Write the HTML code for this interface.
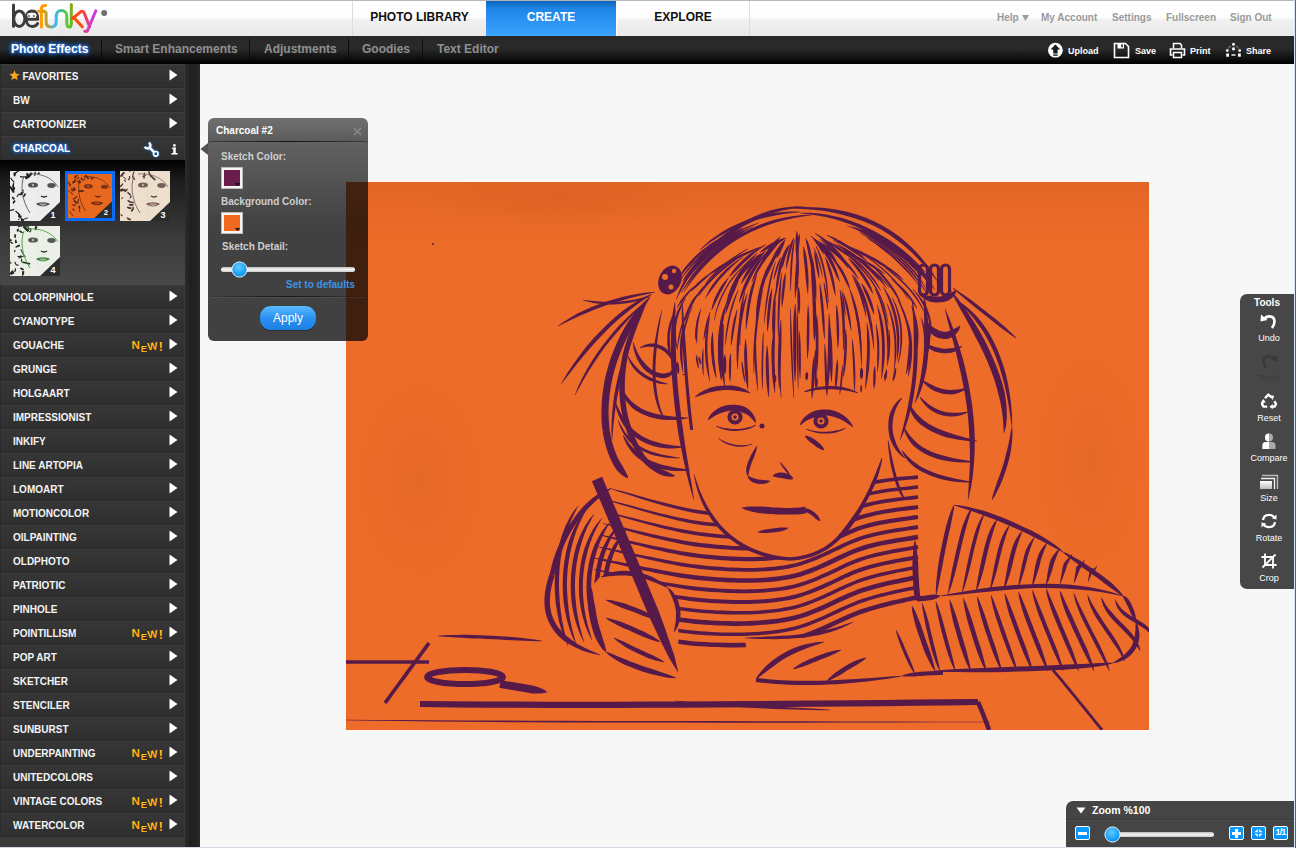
<!DOCTYPE html>
<html><head><meta charset="utf-8">
<style>
*{margin:0;padding:0;box-sizing:border-box}
html,body{width:1296px;height:848px;overflow:hidden;background:#f7f7f7;font-family:"Liberation Sans",sans-serif}
.abs{position:absolute}
#top{position:absolute;left:0;top:0;width:1294px;height:36px;background:linear-gradient(#ffffff 0px,#fdfdfd 18px,#f1f1f1 19px,#e9e9e9 35px)}
#topline{position:absolute;left:0;top:0;width:1294px;height:1px;background:#b3b6ba}
.tab{position:absolute;top:1px;height:35px;font:bold 12px "Liberation Sans",sans-serif;color:#111;text-align:center;line-height:32px}
.tdiv{position:absolute;top:1px;width:1px;height:35px;background:#dcdcdc}
.tlink{position:absolute;top:12px;font:bold 10px "Liberation Sans",sans-serif;color:#9a9a9a}
#nav{position:absolute;left:0;top:36px;width:1294px;height:28px;background:linear-gradient(#282828,#2a2a2a 45%,#000)}
.nitem{position:absolute;top:7px;font:bold 12px "Liberation Sans",sans-serif;color:#8f8f8f}
.ndiv{position:absolute;top:3px;width:1px;height:22px;background:#3a3a3a;border-right:1px solid #0c0c0c}
.nact{position:absolute;top:14px;font:bold 9px "Liberation Sans",sans-serif;color:#fff}
#left{position:absolute;left:0;top:64px;width:185px;height:784px;background:#3a3a3a}
#strip{position:absolute;left:185px;top:64px;width:15px;height:784px;background:linear-gradient(90deg,#2b2b2b,#1f1f1f 40%,#222 70%,#2a2a2a)}
.row{position:absolute;left:0;width:184px;height:24px;background:linear-gradient(#363636,#2f2f2f);border-top:1px solid #3d3d3d;border-bottom:1px solid #2a2a2a;border-left:1px solid #2a2a2a}
.lbl{position:absolute;left:12px;top:6px;font:bold 10px "Liberation Sans",sans-serif;color:#f4f4f4;white-space:nowrap}
.lbl.sel{color:#fff;text-shadow:0 0 2px #2566bb,0 0 3px #2566bb,0 0 3px #2566bb,0 0 4px #2566bb,0 0 5px #1a58a8}
.arr{position:absolute;left:168px;top:4px}
.new{position:absolute;left:131px;top:4px;width:34px;height:14px;font:italic bold 11px "Liberation Sans",sans-serif;color:#ffb300;text-shadow:0 0 1px #7a4a00}
.new span{position:relative}
#thumbs{position:absolute;left:0;top:160px;width:185px;height:125px;background:linear-gradient(#000 0px,#1c1c1c 20px,#3c3c3c 80px,#484848 125px)}
.th{position:absolute;width:50px;height:50px;overflow:hidden}
#popup{position:absolute;left:208px;top:118px;width:160px;height:223px;border-radius:6px;background:linear-gradient(rgba(20,20,20,0.72),rgba(8,8,8,0.76) 45%,rgba(8,8,8,0.76));}
.plbl{position:absolute;left:13px;font:bold 10px "Liberation Sans",sans-serif;color:#cfcfcf;white-space:nowrap}
#tools{position:absolute;left:1240px;top:294px;width:54px;height:295px;background:#474747;border-radius:7px 0 0 7px}
.tl{position:absolute;left:0;width:54px;text-align:center;margin-top:1px;font:9px "Liberation Sans",sans-serif;color:#fff}
#zoom{position:absolute;left:1066px;top:801px;width:228px;height:47px;background:#454545;border-radius:7px 0 0 0}
.zbtn{position:absolute;top:25px;width:15px;height:14px;border:1px solid #fff;border-radius:2px;background:linear-gradient(#0e9cff,#0892fa)}
#rb1{position:absolute;left:1294px;top:0;width:1px;height:848px;background:#d6e4f4}
#rb2{position:absolute;left:1295px;top:0;width:1px;height:848px;background:#4c6592}
#bb{position:absolute;left:0;top:847px;width:1294px;height:1px;background:#d3dbe6}
</style></head><body>
<div id="top"></div><div id="topline"></div>
<svg class="abs" style="left:0;top:0" width="120" height="36" viewBox="0 0 120 36">
<defs>
<linearGradient id="gu" gradientUnits="userSpaceOnUse" x1="44" y1="0" x2="58" y2="0"><stop offset="0" stop-color="#d4a010"/><stop offset="0.4" stop-color="#a0a050"/><stop offset="0.75" stop-color="#40b8f0"/><stop offset="1" stop-color="#30bce8"/></linearGradient>
<linearGradient id="gn" gradientUnits="userSpaceOnUse" x1="56" y1="0" x2="72" y2="0"><stop offset="0" stop-color="#30bce8"/><stop offset="0.45" stop-color="#48c860"/><stop offset="0.75" stop-color="#58cc30"/><stop offset="1" stop-color="#78b020"/></linearGradient>
<linearGradient id="gk" gradientUnits="userSpaceOnUse" x1="0" y1="4" x2="0" y2="27"><stop offset="0" stop-color="#88a818"/><stop offset="1" stop-color="#60c030"/></linearGradient>
<linearGradient id="gy" gradientUnits="userSpaceOnUse" x1="80" y1="0" x2="92" y2="0"><stop offset="0" stop-color="#ff4a14"/><stop offset="0.5" stop-color="#f03c6c"/><stop offset="1" stop-color="#d83cc0"/></linearGradient>
<linearGradient id="gy2" gradientUnits="userSpaceOnUse" x1="84" y1="0" x2="96" y2="0"><stop offset="0" stop-color="#e03c90"/><stop offset="1" stop-color="#c83ae8"/></linearGradient>
</defs>
<g fill="none" stroke-linecap="round" stroke-linejoin="round" stroke-width="3">
<path d="M13.5 5 V26.3" stroke="#3c3c3c"/>
<ellipse cx="19.3" cy="18.7" rx="5.6" ry="7.7" stroke="#3c3c3c"/>
<path d="M26.5 19.3 H37.8 C37.8 13.5 35.5 11 32 11 C28 11 26.2 14.5 26.2 18.7 C26.2 23.5 28.5 26.5 32.3 26.5 C34.5 26.5 36.5 25.5 37.6 23.5" stroke="#3c3c3c"/>
<path d="M41.4 27 V9 C41.4 6.3 42.8 5.4 45.6 5.6" stroke="#ff9c00"/>
<path d="M38.3 11.3 H43.5" stroke="#ff9c00"/>
<path d="M43 11.3 C45.5 11.3 46.1 12 46.1 14 V21.5 C46.1 25 48 27 51 27 C54.3 27 56.2 25 56.2 21.5 V16" stroke="url(#gu)"/>
<path d="M56.2 16 C56.2 12.5 58.5 10.6 61.4 10.6 C64.5 10.6 66.8 12.6 66.8 16 V23 C66.8 25.8 68 27 69.2 27 C70.5 27 71.3 25.8 71.3 23" stroke="url(#gn)"/>
<path d="M71.3 23 V4.6" stroke="url(#gk)"/>
<path d="M72.5 18.5 L80 12.3 C81.5 11 83 11 84 12.5 L89.6 26.8" stroke="url(#gy)"/>
<path d="M74 17.8 L82.3 26.8" stroke="#ff4a12"/>
<path d="M95.8 10.8 L87.3 31.3 H84.8" stroke="url(#gy2)"/>
</g>
<circle cx="29.5" cy="15.2" r="2.3" fill="#fff"/><circle cx="34.2" cy="15.2" r="2.3" fill="#fff"/>
<circle cx="29.1" cy="15.9" r="1" fill="#555"/><circle cx="33.8" cy="15.9" r="1" fill="#555"/>
<circle cx="104.2" cy="13" r="3" fill="#707070"/>
</svg>
<div class="tdiv" style="left:352px"></div>
<div class="tab" style="left:353px;width:133px">PHOTO LIBRARY</div>
<div class="tab" style="left:486px;width:130px;color:#fff;background:linear-gradient(#0a66bb 0px,#1f85e6 8px,#2a90f2 18px,#3aa2ff 34px,#48b4ff 35px)">CREATE</div>
<div class="tdiv" style="left:616px;background:#fff"></div>
<div class="tab" style="left:617px;width:132px">EXPLORE</div>
<div class="tdiv" style="left:749px"></div>
<div class="tlink" style="left:997px">Help</div>
<svg class="abs" style="left:1022px;top:14.5px" width="7" height="6" viewBox="0 0 7 6"><path d="M0 0 H7 L3.5 6Z" fill="#9a9a9a"/></svg>
<div class="tlink" style="left:1041px">My Account</div>
<div class="tlink" style="left:1112px">Settings</div>
<div class="tlink" style="left:1166px">Fullscreen</div>
<div class="tlink" style="left:1230px">Sign Out</div>

<div id="nav"></div>
<div class="nitem" style="left:11px;top:42px;color:#fff;text-shadow:0 0 2px #2566bb,0 0 3px #2566bb,0 0 3px #2566bb,0 0 4px #2566bb,0 0 5px #1a58a8,0 0 6px #1a58a8">Photo Effects</div>
<div class="ndiv" style="left:101px;top:39px"></div>
<div class="nitem" style="left:115px;top:42px">Smart Enhancements</div>
<div class="ndiv" style="left:249px;top:39px"></div>
<div class="nitem" style="left:264px;top:42px">Adjustments</div>
<div class="ndiv" style="left:348px;top:39px"></div>
<div class="nitem" style="left:362px;top:42px">Goodies</div>
<div class="ndiv" style="left:422px;top:39px"></div>
<div class="nitem" style="left:437px;top:42px">Text Editor</div>
<svg class="abs" style="left:1047px;top:42px" width="17" height="17" viewBox="0 0 17 17"><circle cx="8.4" cy="8.2" r="7.4" fill="#fff"/><path d="M8.4 2.6 L13.3 7.6 H10.6 V11.6 H6.2 V7.6 H3.5 Z" fill="#1c1c1c"/><rect x="6.2" y="12.4" width="4.4" height="1.4" fill="#1c1c1c"/></svg>
<div class="nact" style="left:1068px;top:45.5px">Upload</div>
<svg class="abs" style="left:1113px;top:42px" width="17" height="17" viewBox="0 0 17 17"><path d="M1.5 1.5 H12.5 L15.5 4.5 V15.5 H1.5 Z" fill="none" stroke="#fff" stroke-width="1.6"/><rect x="4.5" y="1.5" width="6.5" height="5" fill="#fff"/><rect x="8.3" y="2.3" width="1.5" height="3" fill="#1c1c1c"/></svg>
<div class="nact" style="left:1135px;top:45.5px">Save</div>
<svg class="abs" style="left:1169px;top:42px" width="17" height="17" viewBox="0 0 17 17"><path d="M4.5 6 V1.5 H11 L12.5 3 V6" fill="none" stroke="#fff" stroke-width="1.5"/><path d="M3.5 13 H1.5 V7 H15.5 V13 H13.5" fill="none" stroke="#fff" stroke-width="1.6"/><rect x="4.5" y="10.5" width="8" height="5" fill="none" stroke="#fff" stroke-width="1.5"/></svg>
<div class="nact" style="left:1190px;top:45.5px">Print</div>
<svg class="abs" style="left:1225px;top:42px" width="17" height="17" viewBox="0 0 17 17"><circle cx="8.5" cy="2.3" r="1.5" fill="#fff"/><rect x="7.2" y="5.5" width="2.6" height="2.8" fill="#fff"/><circle cx="2.3" cy="8.6" r="1.4" fill="#fff"/><circle cx="14.7" cy="8.6" r="1.4" fill="#fff"/><rect x="1.2" y="11.5" width="2.8" height="3.2" fill="#fff"/><rect x="13" y="11.5" width="2.8" height="3.2" fill="#fff"/><rect x="6.5" y="12.3" width="4" height="1.4" fill="#fff"/><path d="M3.5 6.3 L6 3.5 M13.5 6.3 L11 3.5" stroke="#fff" stroke-width="0.9" stroke-dasharray="1 1"/></svg>
<div class="nact" style="left:1246px;top:45.5px">Share</div>

<div id="left"></div>
<div id="thumbs"></div>
<svg class="abs" style="left:10px;top:171px" width="50" height="50" viewBox="0 0 50 50"><rect width="50" height="50" fill="#ededed"/><path d="M3.3 27.2 q-1.2 -1.3 1.0 1.2" stroke="#1c1c1c" stroke-width="2.0" fill="none"/><path d="M3.6 11.7 q-0.3 3.2 -0.5 5.4" stroke="#1c1c1c" stroke-width="1.2" fill="none"/><path d="M8.9 43.4 q-0.4 2.0 2.7 1.9" stroke="#1c1c1c" stroke-width="1.7" fill="none"/><path d="M4.2 1.6 q1.3 2.5 -0.4 3.2" stroke="#1c1c1c" stroke-width="2.1" fill="none"/><path d="M5.5 40.0 q0.7 0.5 4.6 4.0" stroke="#1c1c1c" stroke-width="1.3" fill="none"/><path d="M13.5 21.8 q-1.7 -0.6 -2.4 0.1" stroke="#1c1c1c" stroke-width="1.7" fill="none"/><path d="M8.2 45.2 q4.7 3.0 5.5 4.6" stroke="#1c1c1c" stroke-width="1.2" fill="none"/><path d="M12.0 48.2 q-0.6 2.9 1.0 3.2" stroke="#1c1c1c" stroke-width="1.7" fill="none"/><path d="M4.0 3.2 q4.8 -3.3 7.1 -6.0" stroke="#1c1c1c" stroke-width="1.2" fill="none"/><path d="M4.1 38.4 q-5.2 1.7 -6.7 1.7" stroke="#1c1c1c" stroke-width="1.4" fill="none"/><path d="M12.3 49.0 q1.1 -0.7 5.5 -2.1" stroke="#1c1c1c" stroke-width="1.0" fill="none"/><path d="M2.8 20.4 q-0.6 -3.5 -4.2 -5.5" stroke="#1c1c1c" stroke-width="2.2" fill="none"/><path d="M12.6 18.9 q0.5 1.0 0.2 1.5" stroke="#1c1c1c" stroke-width="1.7" fill="none"/><path d="M13.2 25.4 q0.3 0.6 2.3 -2.7" stroke="#1c1c1c" stroke-width="1.6" fill="none"/><path d="M7.7 0.6 q0.9 -1.9 0.8 -4.9" stroke="#1c1c1c" stroke-width="1.1" fill="none"/><path d="M8.8 23.3 q0.0 -0.6 -1.9 2.6" stroke="#1c1c1c" stroke-width="1.1" fill="none"/><path d="M9.5 48.2 q-0.9 -0.1 -0.4 0.8" stroke="#1c1c1c" stroke-width="1.4" fill="none"/><path d="M5.2 29.8 q-2.4 1.5 -1.1 2.5" stroke="#1c1c1c" stroke-width="1.9" fill="none"/><path d="M4.3 11.1 q-2.1 -1.4 -3.7 -4.4" stroke="#1c1c1c" stroke-width="1.1" fill="none"/><path d="M4.5 16.7 q-1.8 1.9 -0.9 5.1" stroke="#1c1c1c" stroke-width="1.8" fill="none"/><path d="M12.4 22.6 q-2.8 1.3 -3.1 0.2" stroke="#1c1c1c" stroke-width="2.0" fill="none"/><path d="M2.6 13.9 q0.4 0.7 2.0 4.3" stroke="#1c1c1c" stroke-width="1.4" fill="none"/><path d="M25.9 1.6 q-0.8 1.3 -0.8 -0.8" stroke="#1c1c1c" stroke-width="1.2" fill="none"/><path d="M10.1 5.7 q5.4 1.2 7.2 -1.0" stroke="#1c1c1c" stroke-width="1.3" fill="none"/><path d="M24.9 5.0 q-0.5 -2.4 0.2 -2.7" stroke="#1c1c1c" stroke-width="1.1" fill="none"/><path d="M21.8 1.7 q-2.4 4.5 -6.4 5.7" stroke="#1c1c1c" stroke-width="2.1" fill="none"/><path d="M28.0 3.5 q-0.0 -0.4 1.5 -2.0" stroke="#1c1c1c" stroke-width="1.6" fill="none"/><path d="M18.3 5.6 q0.5 -1.6 -1.9 -3.0" stroke="#1c1c1c" stroke-width="1.9" fill="none"/><path d="M14 5 C10 15 12 30 20 42" stroke="#555" stroke-width="0.9" fill="none"/><path d="M18 3 C30 2 42 6 48 16" stroke="#555" stroke-width="0.8" fill="none"/><ellipse cx="23" cy="14" rx="5" ry="2.6" fill="#1c1c1c" opacity="0.75"/><ellipse cx="41.5" cy="14.5" rx="4.2" ry="2.4" fill="#1c1c1c" opacity="0.75"/><circle cx="23" cy="14" r="1.2" fill="#ededed" opacity="0.6"/><path d="M31 25 q3 2 6 0" stroke="#1c1c1c" stroke-width="1.4" fill="none"/><path d="M27 33 q6 -2.5 12 0 q-6 4 -12 0Z" fill="none" stroke="#555" stroke-width="1.2"/><path d="M27.5 33 h11" stroke="#1c1c1c" stroke-width="0.8"/><path d="M28 2 V48" stroke="#1c1c1c" stroke-width="0.3" opacity="0.12"/><path d="M30 50 L50 31 V50Z" fill="#2c2c2c"/><text x="40.5" y="46.5" font-family="Liberation Sans" font-weight="bold" font-size="9" fill="#fff">1</text></svg>
<div class="abs" style="left:65px;top:171px;width:50px;height:50px;background:#0a6cf5"></div>
<svg class="abs" style="left:68px;top:174px" width="44" height="44" viewBox="0 0 50 50"><rect width="50" height="50" fill="#e8691e"/><path d="M4.9 9.9 q3.0 -0.2 3.6 -3.7" stroke="#5a2418" stroke-width="2.0" fill="none"/><path d="M11.5 0.4 q1.3 -3.7 4.5 -5.5" stroke="#5a2418" stroke-width="1.6" fill="none"/><path d="M5.9 23.6 q-4.9 -4.6 -6.9 -6.1" stroke="#5a2418" stroke-width="1.1" fill="none"/><path d="M13.6 42.7 q-0.7 -1.2 0.0 -1.3" stroke="#5a2418" stroke-width="1.8" fill="none"/><path d="M8.2 18.0 q-0.5 -0.6 -1.4 -3.0" stroke="#5a2418" stroke-width="1.5" fill="none"/><path d="M1.1 8.9 q0.0 2.6 1.0 2.8" stroke="#5a2418" stroke-width="1.7" fill="none"/><path d="M6.0 18.6 q1.9 -0.6 2.2 -0.9" stroke="#5a2418" stroke-width="1.3" fill="none"/><path d="M7.5 34.8 q1.3 1.5 -0.5 -0.5" stroke="#5a2418" stroke-width="1.4" fill="none"/><path d="M12.6 39.5 q1.1 -1.0 -0.3 -3.2" stroke="#5a2418" stroke-width="2.1" fill="none"/><path d="M11.1 33.4 q0.8 -4.6 0.9 -5.3" stroke="#5a2418" stroke-width="1.2" fill="none"/><path d="M10.8 2.2 q-2.7 -0.6 -2.8 2.6" stroke="#5a2418" stroke-width="2.0" fill="none"/><path d="M1.7 42.2 q2.5 4.1 4.3 5.8" stroke="#5a2418" stroke-width="1.0" fill="none"/><path d="M10.7 25.6 q-0.8 -0.1 -5.2 3.3" stroke="#5a2418" stroke-width="1.4" fill="none"/><path d="M7.9 41.4 q-0.9 -0.0 -2.7 -2.1" stroke="#5a2418" stroke-width="1.5" fill="none"/><path d="M5.1 19.8 q-0.4 -0.1 -0.8 -4.0" stroke="#5a2418" stroke-width="1.5" fill="none"/><path d="M10.5 8.0 q1.7 1.1 3.3 2.2" stroke="#5a2418" stroke-width="1.8" fill="none"/><path d="M12.6 7.5 q0.9 1.2 1.7 2.9" stroke="#5a2418" stroke-width="1.9" fill="none"/><path d="M2.6 13.4 q-0.7 0.0 0.7 -1.5" stroke="#5a2418" stroke-width="2.1" fill="none"/><path d="M4.1 35.3 q0.9 -0.7 3.6 0.9" stroke="#5a2418" stroke-width="1.0" fill="none"/><path d="M6.7 19.1 q0.6 -2.1 -1.1 -1.4" stroke="#5a2418" stroke-width="2.2" fill="none"/><path d="M6.7 30.0 q2.0 1.6 3.6 3.4" stroke="#5a2418" stroke-width="1.9" fill="none"/><path d="M12.0 20.0 q2.0 -1.3 6.1 -0.4" stroke="#5a2418" stroke-width="1.9" fill="none"/><path d="M23.5 5.8 q-2.8 -3.5 -3.7 -4.5" stroke="#5a2418" stroke-width="1.8" fill="none"/><path d="M27.2 5.4 q1.3 0.1 3.1 -1.6" stroke="#5a2418" stroke-width="1.1" fill="none"/><path d="M11.9 5.0 q0.1 -1.6 -1.3 0.7" stroke="#5a2418" stroke-width="1.4" fill="none"/><path d="M18.7 2.9 q-0.1 2.0 0.7 3.7" stroke="#5a2418" stroke-width="1.1" fill="none"/><path d="M15.5 4.0 q-0.2 3.2 2.8 2.9" stroke="#5a2418" stroke-width="1.4" fill="none"/><path d="M25.4 4.5 q2.0 -0.2 1.6 1.4" stroke="#5a2418" stroke-width="1.9" fill="none"/><path d="M14 5 C10 15 12 30 20 42" stroke="#6a2a18" stroke-width="0.9" fill="none"/><path d="M18 3 C30 2 42 6 48 16" stroke="#6a2a18" stroke-width="0.8" fill="none"/><ellipse cx="23" cy="14" rx="5" ry="2.6" fill="#5a2418" opacity="0.75"/><ellipse cx="41.5" cy="14.5" rx="4.2" ry="2.4" fill="#5a2418" opacity="0.75"/><circle cx="23" cy="14" r="1.2" fill="#e8691e" opacity="0.6"/><path d="M31 25 q3 2 6 0" stroke="#5a2418" stroke-width="1.4" fill="none"/><path d="M27 33 q6 -2.5 12 0 q-6 4 -12 0Z" fill="none" stroke="#6a2a18" stroke-width="1.2"/><path d="M27.5 33 h11" stroke="#5a2418" stroke-width="0.8"/><path d="M28 2 V48" stroke="#5a2418" stroke-width="0.3" opacity="0.12"/><path d="M30 50 L50 31 V50Z" fill="#2c2c2c"/><text x="40.5" y="46.5" font-family="Liberation Sans" font-weight="bold" font-size="9" fill="#fff">2</text></svg>
<svg class="abs" style="left:120px;top:171px" width="50" height="50" viewBox="0 0 50 50"><rect width="50" height="50" fill="#ece0cc"/><path d="M13.5 33.6 q-2.8 0.8 -4.4 -0.1" stroke="#4a3434" stroke-width="1.8" fill="none"/><path d="M7.9 9.1 q2.4 -1.4 1.6 -4.0" stroke="#4a3434" stroke-width="1.1" fill="none"/><path d="M13.0 7.1 q1.2 1.0 2.1 0.9" stroke="#4a3434" stroke-width="1.5" fill="none"/><path d="M4.4 8.8 q0.9 1.8 1.4 1.7" stroke="#4a3434" stroke-width="1.4" fill="none"/><path d="M3.7 19.2 q-4.4 1.1 -6.7 0.1" stroke="#4a3434" stroke-width="1.4" fill="none"/><path d="M4.7 20.2 q2.9 -2.4 3.1 -1.7" stroke="#4a3434" stroke-width="1.3" fill="none"/><path d="M1.4 5.6 q0.3 -2.5 3.1 -4.3" stroke="#4a3434" stroke-width="1.9" fill="none"/><path d="M11.4 37.4 q-3.3 -0.5 -4.2 -1.2" stroke="#4a3434" stroke-width="1.7" fill="none"/><path d="M2.8 12.5 q-1.7 3.9 -6.5 4.2" stroke="#4a3434" stroke-width="1.5" fill="none"/><path d="M7.7 29.2 q2.1 2.6 5.9 2.3" stroke="#4a3434" stroke-width="1.6" fill="none"/><path d="M8.4 36.3 q0.8 0.6 1.6 1.0" stroke="#4a3434" stroke-width="1.6" fill="none"/><path d="M2.7 26.5 q-0.2 0.7 0.0 0.9" stroke="#4a3434" stroke-width="2.2" fill="none"/><path d="M12.5 6.8 q0.3 -4.2 1.7 -6.3" stroke="#4a3434" stroke-width="1.1" fill="none"/><path d="M7.5 46.5 q0.2 2.3 3.4 1.8" stroke="#4a3434" stroke-width="1.7" fill="none"/><path d="M13.0 35.8 q0.7 3.5 -2.1 4.1" stroke="#4a3434" stroke-width="1.5" fill="none"/><path d="M10.6 24.3 q-2.8 -2.9 -3.2 -3.0" stroke="#4a3434" stroke-width="1.6" fill="none"/><path d="M9.8 26.9 q0.6 0.0 1.5 -2.0" stroke="#4a3434" stroke-width="1.5" fill="none"/><path d="M2.5 45.0 q-0.8 -0.5 -1.8 -1.7" stroke="#4a3434" stroke-width="1.3" fill="none"/><path d="M0.0 10.4 q-3.7 -1.4 -4.9 -0.6" stroke="#4a3434" stroke-width="1.2" fill="none"/><path d="M5.7 8.4 q-1.3 -2.8 -2.4 -2.1" stroke="#4a3434" stroke-width="1.0" fill="none"/><path d="M6.3 20.4 q-3.3 -2.5 -5.9 -1.3" stroke="#4a3434" stroke-width="2.2" fill="none"/><path d="M3.1 4.7 q-2.4 -0.8 -3.6 1.3" stroke="#4a3434" stroke-width="1.1" fill="none"/><path d="M24.6 1.7 q-1.0 2.0 -0.5 6.0" stroke="#4a3434" stroke-width="1.3" fill="none"/><path d="M26.3 3.8 q-0.0 1.2 -3.8 1.7" stroke="#4a3434" stroke-width="1.0" fill="none"/><path d="M10.6 0.5 q-1.2 -0.1 -3.6 -3.4" stroke="#4a3434" stroke-width="1.2" fill="none"/><path d="M29.5 2.9 q1.1 2.3 5.9 6.2" stroke="#4a3434" stroke-width="1.7" fill="none"/><path d="M28.9 0.5 q1.1 -2.4 3.1 -3.4" stroke="#4a3434" stroke-width="1.8" fill="none"/><path d="M28.6 1.0 q1.8 3.9 3.1 4.5" stroke="#4a3434" stroke-width="1.4" fill="none"/><path d="M14 5 C10 15 12 30 20 42" stroke="#8a6060" stroke-width="0.9" fill="none"/><path d="M18 3 C30 2 42 6 48 16" stroke="#8a6060" stroke-width="0.8" fill="none"/><ellipse cx="23" cy="14" rx="5" ry="2.6" fill="#4a3434" opacity="0.75"/><ellipse cx="41.5" cy="14.5" rx="4.2" ry="2.4" fill="#4a3434" opacity="0.75"/><circle cx="23" cy="14" r="1.2" fill="#ece0cc" opacity="0.6"/><path d="M31 25 q3 2 6 0" stroke="#4a3434" stroke-width="1.4" fill="none"/><path d="M27 33 q6 -2.5 12 0 q-6 4 -12 0Z" fill="none" stroke="#8a6060" stroke-width="1.2"/><path d="M27.5 33 h11" stroke="#4a3434" stroke-width="0.8"/><path d="M28 2 V48" stroke="#4a3434" stroke-width="0.3" opacity="0.12"/><path d="M30 50 L50 31 V50Z" fill="#2c2c2c"/><text x="40.5" y="46.5" font-family="Liberation Sans" font-weight="bold" font-size="9" fill="#fff">3</text></svg>
<svg class="abs" style="left:10px;top:226px" width="50" height="50" viewBox="0 0 50 50"><rect width="50" height="50" fill="#eceee8"/><path d="M5.8 11.5 q-1.5 -0.7 -0.3 -3.2" stroke="#1e2a1e" stroke-width="1.7" fill="none"/><path d="M9.9 19.3 q-3.8 1.0 -3.8 2.3" stroke="#1e2a1e" stroke-width="1.9" fill="none"/><path d="M9.5 4.9 q3.0 2.1 2.9 1.2" stroke="#1e2a1e" stroke-width="1.5" fill="none"/><path d="M12.6 36.6 q-1.0 -0.2 -1.2 -4.0" stroke="#1e2a1e" stroke-width="1.1" fill="none"/><path d="M8.0 5.5 q-1.3 -2.3 1.0 -1.8" stroke="#1e2a1e" stroke-width="1.8" fill="none"/><path d="M8.2 0.6 q2.2 -1.5 3.9 -2.3" stroke="#1e2a1e" stroke-width="1.9" fill="none"/><path d="M8.5 39.4 q-3.5 -0.5 -3.5 -3.7" stroke="#1e2a1e" stroke-width="1.1" fill="none"/><path d="M0.3 48.3 q1.4 -2.8 3.1 -3.3" stroke="#1e2a1e" stroke-width="2.0" fill="none"/><path d="M8.6 32.1 q2.9 -1.3 5.1 -2.1" stroke="#1e2a1e" stroke-width="1.1" fill="none"/><path d="M11.7 29.7 q-2.2 1.2 -4.2 0.6" stroke="#1e2a1e" stroke-width="1.1" fill="none"/><path d="M4.8 24.2 q-0.1 1.4 0.4 1.6" stroke="#1e2a1e" stroke-width="1.7" fill="none"/><path d="M3.0 17.5 q-3.0 -1.7 -2.6 -1.1" stroke="#1e2a1e" stroke-width="1.2" fill="none"/><path d="M13.0 36.3 q5.3 1.0 7.2 1.7" stroke="#1e2a1e" stroke-width="1.5" fill="none"/><path d="M13.3 45.2 q-0.5 4.1 -0.2 4.2" stroke="#1e2a1e" stroke-width="2.1" fill="none"/><path d="M4.1 46.7 q-2.4 1.0 -3.2 1.7" stroke="#1e2a1e" stroke-width="1.8" fill="none"/><path d="M0.6 37.3 q0.7 0.3 -0.6 -1.4" stroke="#1e2a1e" stroke-width="1.3" fill="none"/><path d="M1.4 15.0 q-1.1 -1.0 -4.3 -3.5" stroke="#1e2a1e" stroke-width="2.2" fill="none"/><path d="M13.7 43.8 q-1.8 -0.8 -3.3 -1.8" stroke="#1e2a1e" stroke-width="1.7" fill="none"/><path d="M5.0 42.6 q1.1 0.9 -0.3 3.4" stroke="#1e2a1e" stroke-width="1.3" fill="none"/><path d="M11.3 0.5 q-1.2 -1.7 0.2 0.3" stroke="#1e2a1e" stroke-width="1.2" fill="none"/><path d="M10.8 23.3 q0.4 2.5 4.5 7.6" stroke="#1e2a1e" stroke-width="1.0" fill="none"/><path d="M6.1 16.9 q-0.6 -2.3 0.3 -2.6" stroke="#1e2a1e" stroke-width="2.0" fill="none"/><path d="M18.4 1.6 q0.5 2.1 -0.5 0.8" stroke="#1e2a1e" stroke-width="2.0" fill="none"/><path d="M14.9 0.8 q3.3 0.3 3.9 0.1" stroke="#1e2a1e" stroke-width="1.3" fill="none"/><path d="M13.4 0.1 q2.3 3.2 4.9 5.0" stroke="#1e2a1e" stroke-width="2.1" fill="none"/><path d="M26.3 3.6 q-1.2 -0.9 0.2 -3.3" stroke="#1e2a1e" stroke-width="2.2" fill="none"/><path d="M20.9 2.4 q-0.4 3.3 -0.4 2.9" stroke="#1e2a1e" stroke-width="1.2" fill="none"/><path d="M16.3 3.1 q3.5 2.1 3.6 3.3" stroke="#1e2a1e" stroke-width="1.0" fill="none"/><path d="M14 5 C10 15 12 30 20 42" stroke="#3aa030" stroke-width="0.9" fill="none"/><path d="M18 3 C30 2 42 6 48 16" stroke="#3aa030" stroke-width="0.8" fill="none"/><ellipse cx="23" cy="14" rx="5" ry="2.6" fill="#1e2a1e" opacity="0.75"/><ellipse cx="41.5" cy="14.5" rx="4.2" ry="2.4" fill="#1e2a1e" opacity="0.75"/><circle cx="23" cy="14" r="1.2" fill="#eceee8" opacity="0.6"/><path d="M31 25 q3 2 6 0" stroke="#1e2a1e" stroke-width="1.4" fill="none"/><path d="M27 33 q6 -2.5 12 0 q-6 4 -12 0Z" fill="none" stroke="#3aa030" stroke-width="1.2"/><path d="M27.5 33 h11" stroke="#1e2a1e" stroke-width="0.8"/><path d="M28 2 V48" stroke="#1e2a1e" stroke-width="0.3" opacity="0.12"/><path d="M30 50 L50 31 V50Z" fill="#2c2c2c"/><text x="40.5" y="46.5" font-family="Liberation Sans" font-weight="bold" font-size="9" fill="#fff">4</text></svg>
<div class="row" style="top:64px"><svg style="position:absolute;left:8px;top:5px" width="11" height="11" viewBox="0 0 10 10"><path d="M5 0.3 L6.3 3.4 L9.7 3.6 L7.1 5.8 L7.9 9.2 L5 7.4 L2.1 9.2 L2.9 5.8 L0.3 3.6 L3.7 3.4 Z" fill="#f5a623"/></svg><span class="lbl" style="left:21.5px">FAVORITES</span><svg class="arr" width="9" height="12" viewBox="0 0 9 12"><path d="M0.5 0.5 L8.5 6 L0.5 11.5 Z" fill="#fff"/></svg></div>
<div class="row" style="top:88px"><span class="lbl">BW</span><svg class="arr" width="9" height="12" viewBox="0 0 9 12"><path d="M0.5 0.5 L8.5 6 L0.5 11.5 Z" fill="#fff"/></svg></div>
<div class="row" style="top:112px"><span class="lbl">CARTOONIZER</span><svg class="arr" width="9" height="12" viewBox="0 0 9 12"><path d="M0.5 0.5 L8.5 6 L0.5 11.5 Z" fill="#fff"/></svg></div>
<div class="row" style="top:136px"><span class="lbl sel">CHARCOAL</span><svg style="position:absolute;left:142px;top:4px;filter:drop-shadow(0 0 1.2px #1e8cff)" width="17" height="17" viewBox="0 0 17 17"><path d="M5.8 1.8 A3 3 0 1 1 1.8 5.8" fill="none" stroke="#fff" stroke-width="2.3"/><path d="M5.6 5.6 L11.6 11.6" stroke="#fff" stroke-width="2.6"/><circle cx="12.8" cy="12.8" r="2.3" fill="#0a4fa0" stroke="#fff" stroke-width="1.6"/></svg><svg style="position:absolute;left:170px;top:7px;filter:drop-shadow(0 0 0.6px #000)" width="7" height="11" viewBox="0 0 7 11"><circle cx="3.4" cy="1.4" r="1.4" fill="#fff"/><rect x="2.2" y="3.6" width="2.6" height="6.4" fill="#fff"/><rect x="0.8" y="3.6" width="4" height="1.3" fill="#fff"/><rect x="0.4" y="9" width="6.2" height="1.6" fill="#fff"/></svg></div>
<div class="row" style="top:285px"><span class="lbl">COLORPINHOLE</span><svg class="arr" width="9" height="12" viewBox="0 0 9 12"><path d="M0.5 0.5 L8.5 6 L0.5 11.5 Z" fill="#fff"/></svg></div>
<div class="row" style="top:309px"><span class="lbl">CYANOTYPE</span><svg class="arr" width="9" height="12" viewBox="0 0 9 12"><path d="M0.5 0.5 L8.5 6 L0.5 11.5 Z" fill="#fff"/></svg></div>
<div class="row" style="top:333px"><span class="lbl">GOUACHE</span><svg class="abs" style="left:124px;top:-2px" width="42" height="24" viewBox="125 332 42 24"><defs><linearGradient id="ng" x1="0" y1="0" x2="0" y2="1"><stop offset="0" stop-color="#ffd23a"/><stop offset="1" stop-color="#ff9c00"/></linearGradient></defs><g font-family="Liberation Sans" font-weight="bold" fill="url(#ng)" stroke="#2a1800" stroke-width="0.5" paint-order="stroke"><text x="131.6" y="349.3" font-size="11.6">N</text><text x="140.8" y="352.2" font-size="9.6">E</text><text x="147.4" y="350" font-size="10.8" transform="rotate(-6 153 346)">W</text><text x="158.6" y="350.6" font-size="13.5">!</text></g></svg><svg class="arr" width="9" height="12" viewBox="0 0 9 12"><path d="M0.5 0.5 L8.5 6 L0.5 11.5 Z" fill="#fff"/></svg></div>
<div class="row" style="top:357px"><span class="lbl">GRUNGE</span><svg class="arr" width="9" height="12" viewBox="0 0 9 12"><path d="M0.5 0.5 L8.5 6 L0.5 11.5 Z" fill="#fff"/></svg></div>
<div class="row" style="top:381px"><span class="lbl">HOLGAART</span><svg class="arr" width="9" height="12" viewBox="0 0 9 12"><path d="M0.5 0.5 L8.5 6 L0.5 11.5 Z" fill="#fff"/></svg></div>
<div class="row" style="top:405px"><span class="lbl">IMPRESSIONIST</span><svg class="arr" width="9" height="12" viewBox="0 0 9 12"><path d="M0.5 0.5 L8.5 6 L0.5 11.5 Z" fill="#fff"/></svg></div>
<div class="row" style="top:429px"><span class="lbl">INKIFY</span><svg class="arr" width="9" height="12" viewBox="0 0 9 12"><path d="M0.5 0.5 L8.5 6 L0.5 11.5 Z" fill="#fff"/></svg></div>
<div class="row" style="top:453px"><span class="lbl">LINE ARTOPIA</span><svg class="arr" width="9" height="12" viewBox="0 0 9 12"><path d="M0.5 0.5 L8.5 6 L0.5 11.5 Z" fill="#fff"/></svg></div>
<div class="row" style="top:477px"><span class="lbl">LOMOART</span><svg class="arr" width="9" height="12" viewBox="0 0 9 12"><path d="M0.5 0.5 L8.5 6 L0.5 11.5 Z" fill="#fff"/></svg></div>
<div class="row" style="top:501px"><span class="lbl">MOTIONCOLOR</span><svg class="arr" width="9" height="12" viewBox="0 0 9 12"><path d="M0.5 0.5 L8.5 6 L0.5 11.5 Z" fill="#fff"/></svg></div>
<div class="row" style="top:525px"><span class="lbl">OILPAINTING</span><svg class="arr" width="9" height="12" viewBox="0 0 9 12"><path d="M0.5 0.5 L8.5 6 L0.5 11.5 Z" fill="#fff"/></svg></div>
<div class="row" style="top:549px"><span class="lbl">OLDPHOTO</span><svg class="arr" width="9" height="12" viewBox="0 0 9 12"><path d="M0.5 0.5 L8.5 6 L0.5 11.5 Z" fill="#fff"/></svg></div>
<div class="row" style="top:573px"><span class="lbl">PATRIOTIC</span><svg class="arr" width="9" height="12" viewBox="0 0 9 12"><path d="M0.5 0.5 L8.5 6 L0.5 11.5 Z" fill="#fff"/></svg></div>
<div class="row" style="top:597px"><span class="lbl">PINHOLE</span><svg class="arr" width="9" height="12" viewBox="0 0 9 12"><path d="M0.5 0.5 L8.5 6 L0.5 11.5 Z" fill="#fff"/></svg></div>
<div class="row" style="top:621px"><span class="lbl">POINTILLISM</span><svg class="abs" style="left:124px;top:-2px" width="42" height="24" viewBox="125 332 42 24"><defs><linearGradient id="ng" x1="0" y1="0" x2="0" y2="1"><stop offset="0" stop-color="#ffd23a"/><stop offset="1" stop-color="#ff9c00"/></linearGradient></defs><g font-family="Liberation Sans" font-weight="bold" fill="url(#ng)" stroke="#2a1800" stroke-width="0.5" paint-order="stroke"><text x="131.6" y="349.3" font-size="11.6">N</text><text x="140.8" y="352.2" font-size="9.6">E</text><text x="147.4" y="350" font-size="10.8" transform="rotate(-6 153 346)">W</text><text x="158.6" y="350.6" font-size="13.5">!</text></g></svg><svg class="arr" width="9" height="12" viewBox="0 0 9 12"><path d="M0.5 0.5 L8.5 6 L0.5 11.5 Z" fill="#fff"/></svg></div>
<div class="row" style="top:645px"><span class="lbl">POP ART</span><svg class="arr" width="9" height="12" viewBox="0 0 9 12"><path d="M0.5 0.5 L8.5 6 L0.5 11.5 Z" fill="#fff"/></svg></div>
<div class="row" style="top:669px"><span class="lbl">SKETCHER</span><svg class="arr" width="9" height="12" viewBox="0 0 9 12"><path d="M0.5 0.5 L8.5 6 L0.5 11.5 Z" fill="#fff"/></svg></div>
<div class="row" style="top:693px"><span class="lbl">STENCILER</span><svg class="arr" width="9" height="12" viewBox="0 0 9 12"><path d="M0.5 0.5 L8.5 6 L0.5 11.5 Z" fill="#fff"/></svg></div>
<div class="row" style="top:717px"><span class="lbl">SUNBURST</span><svg class="arr" width="9" height="12" viewBox="0 0 9 12"><path d="M0.5 0.5 L8.5 6 L0.5 11.5 Z" fill="#fff"/></svg></div>
<div class="row" style="top:741px"><span class="lbl">UNDERPAINTING</span><svg class="abs" style="left:124px;top:-2px" width="42" height="24" viewBox="125 332 42 24"><defs><linearGradient id="ng" x1="0" y1="0" x2="0" y2="1"><stop offset="0" stop-color="#ffd23a"/><stop offset="1" stop-color="#ff9c00"/></linearGradient></defs><g font-family="Liberation Sans" font-weight="bold" fill="url(#ng)" stroke="#2a1800" stroke-width="0.5" paint-order="stroke"><text x="131.6" y="349.3" font-size="11.6">N</text><text x="140.8" y="352.2" font-size="9.6">E</text><text x="147.4" y="350" font-size="10.8" transform="rotate(-6 153 346)">W</text><text x="158.6" y="350.6" font-size="13.5">!</text></g></svg><svg class="arr" width="9" height="12" viewBox="0 0 9 12"><path d="M0.5 0.5 L8.5 6 L0.5 11.5 Z" fill="#fff"/></svg></div>
<div class="row" style="top:765px"><span class="lbl">UNITEDCOLORS</span><svg class="arr" width="9" height="12" viewBox="0 0 9 12"><path d="M0.5 0.5 L8.5 6 L0.5 11.5 Z" fill="#fff"/></svg></div>
<div class="row" style="top:789px"><span class="lbl">VINTAGE COLORS</span><svg class="abs" style="left:124px;top:-2px" width="42" height="24" viewBox="125 332 42 24"><defs><linearGradient id="ng" x1="0" y1="0" x2="0" y2="1"><stop offset="0" stop-color="#ffd23a"/><stop offset="1" stop-color="#ff9c00"/></linearGradient></defs><g font-family="Liberation Sans" font-weight="bold" fill="url(#ng)" stroke="#2a1800" stroke-width="0.5" paint-order="stroke"><text x="131.6" y="349.3" font-size="11.6">N</text><text x="140.8" y="352.2" font-size="9.6">E</text><text x="147.4" y="350" font-size="10.8" transform="rotate(-6 153 346)">W</text><text x="158.6" y="350.6" font-size="13.5">!</text></g></svg><svg class="arr" width="9" height="12" viewBox="0 0 9 12"><path d="M0.5 0.5 L8.5 6 L0.5 11.5 Z" fill="#fff"/></svg></div>
<div class="row" style="top:813px"><span class="lbl">WATERCOLOR</span><svg class="abs" style="left:124px;top:-2px" width="42" height="24" viewBox="125 332 42 24"><defs><linearGradient id="ng" x1="0" y1="0" x2="0" y2="1"><stop offset="0" stop-color="#ffd23a"/><stop offset="1" stop-color="#ff9c00"/></linearGradient></defs><g font-family="Liberation Sans" font-weight="bold" fill="url(#ng)" stroke="#2a1800" stroke-width="0.5" paint-order="stroke"><text x="131.6" y="349.3" font-size="11.6">N</text><text x="140.8" y="352.2" font-size="9.6">E</text><text x="147.4" y="350" font-size="10.8" transform="rotate(-6 153 346)">W</text><text x="158.6" y="350.6" font-size="13.5">!</text></g></svg><svg class="arr" width="9" height="12" viewBox="0 0 9 12"><path d="M0.5 0.5 L8.5 6 L0.5 11.5 Z" fill="#fff"/></svg></div>
<div id="strip"></div>
<svg class="abs" style="left:346px;top:182px" width="803" height="548" viewBox="346 182 803 548"><defs><linearGradient id="tb" x1="0" y1="0" x2="0" y2="1"><stop offset="0" stop-color="#802800" stop-opacity="0.10"/><stop offset="0.12" stop-color="#802800" stop-opacity="0"/></linearGradient><radialGradient id="pt"><stop offset="0" stop-color="#7a2a00" stop-opacity="0.07"/><stop offset="1" stop-color="#7a2a00" stop-opacity="0"/></radialGradient></defs><rect x="346" y="182" width="803" height="548" fill="#ee6c29"/><rect x="346" y="182" width="803" height="548" fill="url(#tb)"/><ellipse cx="560" cy="200" rx="140" ry="30" fill="url(#pt)"/><ellipse cx="1090" cy="460" rx="60" ry="120" fill="url(#pt)"/><ellipse cx="420" cy="480" rx="70" ry="110" fill="url(#pt)"/><g><path d="M676.2 300.1 L681.4 290.1 L686.9 280.5 L693.0 271.6 L699.6 263.2 L706.6 255.3 L714.0 248.0 L721.6 241.2 L729.6 235.1 L737.9 229.6 L746.3 224.7 L754.8 220.4 L763.4 216.8 L771.9 213.6 L780.4 211.1 L788.8 209.3 L797.0 208.0 L805.0 207.2 L805.0 206.8 L796.9 206.3 L788.4 206.9 L779.7 208.2 L770.9 210.3 L762.0 213.2 L753.2 216.9 L744.4 221.2 L735.8 226.3 L727.3 231.9 L719.2 238.2 L711.3 245.2 L703.8 252.7 L696.9 261.0 L690.6 269.9 L684.8 279.3 L679.8 289.3 L675.8 299.9Z" fill="#561a4a"/>
<path d="M790.0 208.2 L802.1 208.9 L813.6 209.7 L824.6 211.1 L835.1 213.0 L845.1 215.4 L854.7 218.2 L863.9 221.4 L872.7 225.2 L881.1 229.6 L889.1 234.5 L896.7 239.9 L904.1 245.8 L911.3 252.1 L918.2 258.9 L924.8 266.2 L931.3 274.0 L937.8 282.1 L938.2 281.9 L932.8 272.9 L926.8 264.5 L920.5 256.7 L913.8 249.4 L906.8 242.7 L899.3 236.5 L891.4 231.0 L883.1 226.0 L874.5 221.5 L865.4 217.6 L856.0 214.2 L846.1 211.4 L835.8 209.4 L825.0 208.0 L813.8 207.2 L802.1 207.0 L790.0 207.8Z" fill="#561a4a"/>
<path d="M684.2 292.1 L689.7 284.1 L695.5 276.6 L701.5 269.4 L707.9 262.7 L714.5 256.5 L721.4 250.7 L728.5 245.2 L736.0 240.3 L743.7 235.8 L751.6 231.7 L759.7 228.2 L768.1 225.1 L776.5 222.3 L785.2 219.9 L794.0 218.0 L802.9 216.5 L812.0 215.2 L812.0 214.8 L802.8 215.1 L793.7 216.0 L784.7 217.6 L775.8 219.6 L767.1 222.1 L758.6 225.3 L750.2 228.9 L742.2 233.0 L734.3 237.6 L726.7 242.7 L719.4 248.2 L712.4 254.2 L705.9 260.8 L699.7 267.9 L693.9 275.4 L688.6 283.4 L683.8 291.9Z" fill="#561a4a"/>
<path d="M800.0 213.2 L808.7 214.2 L817.3 215.4 L825.7 217.0 L834.0 219.1 L842.1 221.5 L850.1 224.2 L857.9 227.2 L865.5 230.6 L872.9 234.3 L880.2 238.3 L887.2 242.6 L893.9 247.2 L900.5 251.8 L906.9 256.7 L913.1 261.8 L919.0 267.0 L924.8 272.2 L925.2 271.8 L920.1 265.9 L914.5 260.2 L908.6 254.7 L902.4 249.5 L895.9 244.4 L889.0 239.8 L881.9 235.4 L874.5 231.3 L866.9 227.5 L859.2 224.1 L851.2 221.0 L843.1 218.3 L834.7 216.2 L826.2 214.5 L817.6 213.3 L808.8 212.7 L800.0 212.8Z" fill="#561a4a"/>
<path d="M700.2 250.2 L705.8 245.7 L711.5 241.6 L717.3 237.7 L723.2 234.2 L729.2 231.0 L735.2 228.0 L741.3 225.3 L747.4 222.9 L753.5 220.8 L759.6 219.0 L765.7 217.5 L771.7 216.2 L777.6 215.0 L783.4 214.1 L789.1 213.3 L794.6 212.7 L800.0 212.2 L800.0 211.8 L794.6 211.5 L789.0 211.5 L783.2 211.9 L777.2 212.5 L771.2 213.4 L765.1 214.7 L758.9 216.3 L752.7 218.1 L746.4 220.3 L740.2 222.7 L734.0 225.4 L727.9 228.5 L721.9 232.0 L716.1 235.9 L710.4 240.1 L705.0 244.8 L699.8 249.8Z" fill="#561a4a"/>
<path d="M849.9 222.2 L854.8 225.3 L859.8 228.2 L864.7 231.1 L869.5 234.0 L874.3 236.9 L879.0 239.8 L883.7 242.8 L888.4 245.9 L893.0 249.1 L897.5 252.5 L902.0 256.0 L906.5 259.7 L911.1 263.5 L915.6 267.4 L920.2 271.5 L924.9 275.8 L929.8 280.2 L930.2 279.8 L926.3 274.6 L922.1 269.7 L917.8 265.1 L913.5 260.7 L909.2 256.6 L904.6 252.8 L900.0 249.2 L895.4 245.7 L890.7 242.4 L886.0 239.3 L881.2 236.2 L876.3 233.3 L871.3 230.7 L866.2 228.2 L861.0 225.9 L855.6 223.7 L850.1 221.8Z" fill="#561a4a"/>
<path d="M859.9 230.2 L864.9 233.3 L869.9 236.3 L874.8 239.2 L879.6 242.2 L884.4 245.3 L889.0 248.3 L893.6 251.5 L898.1 254.7 L902.5 258.1 L906.7 261.6 L910.9 265.2 L915.0 269.0 L919.1 272.9 L923.1 277.0 L927.0 281.2 L930.9 285.6 L934.8 290.1 L935.2 289.9 L932.0 284.7 L928.5 279.9 L924.8 275.4 L921.0 271.0 L917.1 266.8 L913.0 262.9 L908.8 259.2 L904.4 255.6 L900.0 252.2 L895.4 248.9 L890.8 245.7 L886.0 242.7 L881.1 239.9 L876.0 237.1 L870.8 234.5 L865.6 232.1 L860.1 229.8Z" fill="#561a4a"/>
<path d="M764.2 245.4 L753.9 249.0 L744.4 252.9 L735.5 257.2 L727.1 261.7 L719.3 266.2 L712.2 271.2 L705.9 276.5 L706.2 276.9 L713.2 272.7 L720.6 268.4 L728.3 263.9 L736.6 259.5 L745.4 255.1 L754.6 250.6 L764.3 245.9Z" fill="#561a4a"/>
<path d="M694.6 285.9 L691.2 288.6 L688.1 291.4 L685.4 294.4 L682.9 297.5 L680.6 300.6 L678.7 303.9 L677.1 307.3 L677.6 307.6 L679.8 304.6 L682.1 301.7 L684.4 298.7 L686.9 295.6 L689.5 292.6 L692.1 289.5 L694.9 286.3Z" fill="#561a4a"/>
<path d="M675.3 310.8 L671.7 317.1 L669.2 323.9 L667.8 330.9 L667.2 338.1 L667.4 345.4 L668.8 352.8 L671.2 360.1 L671.6 360.0 L670.6 352.4 L670.0 345.2 L669.8 338.1 L670.4 331.3 L671.7 324.5 L673.4 317.8 L675.7 311.0Z" fill="#561a4a"/>
<path d="M748.7 251.5 L743.5 253.6 L738.4 255.8 L733.7 258.3 L729.2 260.8 L724.8 263.3 L720.7 266.1 L716.9 268.9 L717.2 269.3 L721.3 267.1 L725.6 264.7 L730.0 262.2 L734.5 259.8 L739.2 257.3 L744.0 254.6 L748.9 251.9Z" fill="#561a4a"/>
<path d="M710.7 273.2 L707.1 275.3 L703.7 277.6 L700.6 280.2 L697.7 282.8 L695.0 285.4 L692.7 288.3 L690.7 291.3 L691.1 291.6 L693.8 289.3 L696.6 286.9 L699.2 284.4 L702.1 281.8 L705.0 279.3 L708.0 276.5 L711.0 273.6Z" fill="#561a4a"/>
<path d="M685.6 297.8 L680.8 304.6 L677.2 311.6 L674.9 319.1 L673.7 326.6 L673.6 334.4 L674.9 342.2 L677.3 350.0 L677.8 349.9 L676.4 341.9 L675.9 334.3 L676.0 326.8 L677.2 319.6 L679.3 312.4 L682.2 305.3 L686.0 298.1Z" fill="#561a4a"/>
<path d="M736.5 259.0 L727.7 264.6 L719.6 270.6 L712.3 277.1 L705.7 283.7 L699.8 290.6 L694.8 297.9 L690.5 305.4 L691.0 305.7 L695.9 298.6 L701.3 291.8 L707.1 285.0 L713.7 278.5 L720.8 272.1 L728.5 265.7 L736.8 259.4Z" fill="#561a4a"/>
<path d="M687.6 311.0 L685.0 315.9 L682.8 320.9 L681.0 326.1 L679.6 331.4 L678.4 336.8 L677.7 342.3 L677.3 347.9 L677.8 347.9 L678.7 342.4 L679.8 337.0 L681.0 331.7 L682.4 326.5 L684.1 321.4 L685.9 316.3 L688.0 311.2Z" fill="#561a4a"/>
<path d="M677.0 361.6 L676.3 363.4 L676.0 365.2 L676.1 367.0 L676.2 368.8 L676.5 370.6 L677.1 372.3 L678.1 374.0 L678.6 374.0 L679.1 372.1 L679.3 370.3 L679.2 368.5 L679.0 366.7 L678.9 365.0 L678.4 363.3 L677.5 361.6Z" fill="#561a4a"/>
<path d="M732.9 260.4 L726.6 264.9 L720.8 269.6 L715.4 274.6 L710.5 279.7 L705.9 284.9 L701.9 290.4 L698.3 296.0 L698.7 296.2 L702.7 291.0 L707.0 285.8 L711.5 280.7 L716.4 275.6 L721.7 270.7 L727.2 265.7 L733.2 260.8Z" fill="#561a4a"/>
<path d="M692.4 306.2 L688.3 314.4 L685.1 322.8 L682.9 331.6 L681.4 340.7 L680.8 350.0 L681.3 359.5 L682.6 369.2 L683.1 369.2 L682.5 359.4 L682.6 350.0 L683.3 340.9 L684.6 332.0 L686.8 323.3 L689.4 314.8 L692.8 306.4Z" fill="#561a4a"/>
<path d="M683.3 374.1 L682.5 374.4 L682.1 374.6 L682.1 374.7 L682.1 374.8 L682.2 374.9 L682.6 375.0 L683.5 375.0 L684.0 374.9 L684.8 374.6 L685.2 374.4 L685.2 374.3 L685.2 374.1 L685.2 374.0 L684.7 374.0 L683.8 374.0Z" fill="#561a4a"/>
<path d="M747.6 248.5 L740.1 252.8 L733.0 257.3 L726.5 262.1 L720.5 267.1 L714.8 272.2 L709.7 277.6 L705.2 283.2 L705.6 283.5 L710.6 278.4 L715.9 273.4 L721.5 268.4 L727.6 263.4 L734.0 258.6 L740.7 253.8 L747.9 248.9Z" fill="#561a4a"/>
<path d="M697.1 293.9 L694.2 297.4 L691.6 301.1 L689.6 305.1 L687.7 309.1 L686.0 313.2 L684.9 317.4 L684.2 321.8 L684.7 321.9 L686.6 318.0 L688.4 314.1 L690.0 310.1 L691.8 306.2 L693.8 302.3 L695.7 298.3 L697.6 294.2Z" fill="#561a4a"/>
<path d="M683.1 326.4 L681.5 332.6 L680.4 338.9 L680.0 345.5 L679.9 352.2 L680.3 358.9 L681.4 365.8 L682.9 372.8 L683.4 372.7 L682.5 365.6 L682.0 358.8 L681.7 352.1 L681.7 345.5 L682.1 339.1 L682.7 332.8 L683.6 326.5Z" fill="#561a4a"/>
<path d="M743.0 256.8 L735.6 262.0 L728.8 267.4 L722.7 273.2 L717.2 279.2 L712.4 285.3 L708.3 291.7 L705.0 298.3 L705.4 298.6 L709.2 292.3 L713.6 286.2 L718.3 280.1 L723.7 274.3 L729.7 268.5 L736.2 262.8 L743.3 257.2Z" fill="#561a4a"/>
<path d="M699.6 311.9 L698.1 316.2 L696.9 320.5 L696.2 325.0 L695.8 329.6 L695.6 334.2 L696.0 338.9 L696.6 343.6 L697.1 343.6 L697.2 338.9 L697.4 334.3 L697.6 329.7 L698.0 325.3 L698.6 320.9 L699.3 316.5 L700.1 312.1Z" fill="#561a4a"/>
<path d="M698.6 356.6 L698.5 357.8 L698.5 359.0 L698.7 360.2 L699.0 361.3 L699.4 362.5 L699.9 363.5 L700.6 364.6 L701.1 364.4 L701.2 363.2 L701.1 362.0 L700.9 360.8 L700.6 359.7 L700.3 358.6 L699.8 357.5 L699.1 356.5Z" fill="#561a4a"/>
<path d="M738.8 259.5 L732.5 263.9 L726.7 268.6 L721.6 273.8 L717.0 279.1 L712.8 284.6 L709.3 290.3 L706.5 296.3 L706.9 296.6 L710.7 291.2 L714.7 285.9 L718.8 280.6 L723.4 275.4 L728.4 270.3 L733.6 265.1 L739.1 259.9Z" fill="#561a4a"/>
<path d="M700.8 308.8 L699.1 313.0 L697.7 317.2 L696.6 321.6 L695.8 326.1 L695.3 330.6 L695.1 335.2 L695.2 339.8 L695.7 339.9 L696.2 335.3 L696.8 330.8 L697.4 326.3 L698.2 321.9 L699.2 317.6 L700.2 313.3 L701.3 309.0Z" fill="#561a4a"/>
<path d="M696.0 354.9 L695.9 356.9 L695.9 358.8 L696.2 360.7 L696.5 362.6 L696.9 364.5 L697.6 366.4 L698.3 368.2 L698.8 368.1 L698.8 366.1 L698.6 364.2 L698.3 362.3 L698.0 360.4 L697.7 358.5 L697.1 356.7 L696.5 354.9Z" fill="#561a4a"/>
<path d="M765.8 244.3 L761.5 246.8 L757.3 249.5 L753.3 252.4 L749.5 255.3 L745.9 258.4 L742.5 261.7 L739.4 265.0 L739.7 265.4 L743.2 262.3 L746.8 259.4 L750.4 256.4 L754.1 253.5 L758.0 250.6 L762.0 247.6 L766.1 244.7Z" fill="#561a4a"/>
<path d="M728.4 277.6 L724.7 281.5 L721.4 285.7 L718.7 290.3 L716.3 295.0 L714.1 299.8 L712.5 304.8 L711.4 310.0 L711.9 310.2 L714.2 305.5 L716.5 300.8 L718.7 296.2 L721.1 291.6 L723.7 287.1 L726.2 282.5 L728.8 277.8Z" fill="#561a4a"/>
<path d="M709.5 316.5 L707.1 324.8 L705.6 333.5 L705.0 342.5 L705.0 351.7 L705.6 361.3 L707.1 371.0 L709.5 380.9 L710.0 380.9 L708.8 370.8 L708.0 361.0 L707.4 351.7 L707.4 342.5 L708.0 333.7 L708.8 325.1 L710.0 316.6Z" fill="#561a4a"/>
<path d="M758.4 248.4 L753.1 251.5 L748.2 255.0 L743.7 258.9 L739.5 263.0 L735.5 267.2 L732.1 271.7 L729.2 276.6 L729.6 276.9 L733.7 273.1 L737.8 269.2 L741.7 265.1 L745.8 261.2 L750.2 257.2 L754.4 253.1 L758.7 248.8Z" fill="#561a4a"/>
<path d="M725.6 281.5 L723.3 284.3 L721.1 287.2 L719.2 290.3 L717.4 293.5 L715.7 296.7 L714.4 300.1 L713.2 303.6 L713.7 303.8 L715.5 300.7 L717.3 297.5 L719.0 294.4 L720.7 291.2 L722.6 288.2 L724.3 285.0 L726.0 281.7Z" fill="#561a4a"/>
<path d="M709.9 312.1 L708.4 315.8 L707.0 319.5 L706.0 323.4 L705.1 327.3 L704.3 331.4 L703.8 335.4 L703.6 339.6 L704.1 339.6 L705.0 335.6 L705.9 331.6 L706.7 327.7 L707.6 323.8 L708.6 320.0 L709.5 316.1 L710.4 312.3Z" fill="#561a4a"/>
<path d="M702.8 348.2 L702.3 351.9 L701.9 355.7 L701.9 359.5 L702.0 363.4 L702.1 367.3 L702.6 371.3 L703.2 375.3 L703.7 375.2 L703.6 371.2 L703.6 367.3 L703.5 363.4 L703.5 359.5 L703.5 355.7 L703.4 352.0 L703.3 348.2Z" fill="#561a4a"/>
<path d="M785.3 237.8 L781.0 239.0 L776.9 240.5 L773.0 242.5 L769.3 244.6 L765.8 246.8 L762.6 249.4 L759.7 252.3 L760.0 252.7 L763.7 251.1 L767.4 249.3 L770.9 247.3 L774.5 245.2 L778.2 243.2 L781.9 240.9 L785.5 238.2Z" fill="#561a4a"/>
<path d="M749.1 260.4 L741.3 267.4 L734.3 275.0 L728.3 283.1 L723.3 291.7 L719.1 300.7 L716.1 310.3 L713.9 320.3 L714.4 320.4 L717.0 310.6 L720.4 301.2 L724.5 292.3 L729.4 283.8 L735.3 275.8 L741.9 268.1 L749.5 260.8Z" fill="#561a4a"/>
<path d="M712.4 332.1 L711.3 338.2 L710.9 344.5 L711.1 351.0 L711.6 357.6 L712.4 364.4 L713.9 371.3 L716.0 378.2 L716.5 378.1 L715.8 370.9 L715.1 364.0 L714.3 357.4 L713.8 350.8 L713.5 344.5 L713.2 338.2 L712.9 332.1Z" fill="#561a4a"/>
<path d="M757.6 252.7 L750.8 258.3 L744.8 264.6 L739.7 271.6 L735.1 279.1 L731.1 286.9 L728.0 295.3 L725.8 304.2 L726.3 304.4 L730.0 296.1 L733.8 288.2 L737.8 280.6 L742.2 273.3 L747.2 266.5 L752.4 259.7 L757.9 253.1Z" fill="#561a4a"/>
<path d="M723.7 312.0 L721.1 320.4 L719.3 329.3 L718.4 338.6 L718.0 348.2 L718.0 358.2 L718.9 368.5 L720.6 379.0 L721.1 379.0 L721.0 368.3 L721.0 358.1 L721.0 348.3 L721.5 338.8 L722.3 329.7 L723.2 320.8 L724.2 312.1Z" fill="#561a4a"/>
<path d="M765.3 251.1 L759.0 255.6 L753.1 260.5 L747.8 265.9 L743.0 271.5 L738.6 277.5 L734.8 283.8 L731.5 290.5 L731.9 290.7 L735.7 284.3 L739.8 278.3 L744.1 272.4 L748.9 266.9 L754.1 261.6 L759.6 256.4 L765.6 251.5Z" fill="#561a4a"/>
<path d="M727.1 300.8 L723.1 310.4 L720.3 320.7 L718.7 331.7 L717.9 343.2 L718.0 355.2 L719.2 367.7 L721.6 380.6 L722.1 380.5 L721.3 367.5 L720.9 355.1 L721.0 343.3 L721.7 332.0 L723.2 321.2 L725.1 310.9 L727.5 300.9Z" fill="#561a4a"/>
<path d="M760.7 253.6 L757.5 255.6 L754.6 257.9 L752.0 260.5 L749.5 263.2 L747.2 266.0 L745.2 269.1 L743.5 272.4 L743.9 272.7 L746.6 270.1 L749.1 267.6 L751.4 264.9 L753.8 262.2 L756.3 259.6 L758.7 256.8 L761.0 253.9Z" fill="#561a4a"/>
<path d="M738.5 280.2 L735.4 284.2 L732.8 288.6 L730.7 293.3 L728.8 298.1 L727.1 303.1 L726.0 308.3 L725.3 313.6 L725.8 313.8 L727.8 308.8 L729.6 303.9 L731.3 299.0 L733.1 294.3 L735.2 289.7 L737.0 285.1 L738.9 280.4Z" fill="#561a4a"/>
<path d="M723.4 323.9 L721.5 332.0 L720.5 340.4 L720.2 349.1 L720.4 358.1 L720.9 367.4 L722.3 376.9 L724.5 386.6 L725.0 386.6 L724.5 376.7 L724.0 367.2 L723.4 358.0 L723.3 349.1 L723.5 340.5 L723.7 332.2 L723.9 324.0Z" fill="#561a4a"/>
<path d="M765.2 251.1 L760.5 254.6 L756.2 258.6 L752.5 263.1 L749.0 267.8 L745.8 272.7 L743.1 277.9 L741.0 283.5 L741.4 283.8 L744.9 279.0 L748.3 274.2 L751.5 269.5 L754.9 265.0 L758.5 260.6 L762.0 256.1 L765.5 251.5Z" fill="#561a4a"/>
<path d="M738.0 289.7 L734.9 296.6 L732.1 303.8 L729.9 311.4 L728.1 319.3 L726.6 327.5 L725.6 336.0 L725.1 344.8 L725.6 344.8 L726.8 336.1 L728.2 327.7 L729.7 319.6 L731.5 311.8 L733.7 304.3 L736.0 297.0 L738.5 289.9Z" fill="#561a4a"/>
<path d="M724.6 354.6 L723.7 357.3 L723.2 360.0 L723.2 362.8 L723.2 365.6 L723.3 368.4 L723.8 371.2 L724.7 374.0 L725.2 374.0 L725.9 371.2 L726.3 368.3 L726.3 365.6 L726.3 362.8 L726.2 360.1 L725.8 357.4 L725.1 354.6Z" fill="#561a4a"/>
<path d="M764.8 253.9 L759.4 259.3 L754.6 265.4 L750.5 272.1 L746.7 279.1 L743.4 286.6 L740.7 294.5 L738.8 302.8 L739.3 303.0 L742.8 295.2 L746.2 287.8 L749.5 280.5 L753.2 273.6 L757.2 267.1 L761.1 260.6 L765.2 254.2Z" fill="#561a4a"/>
<path d="M736.9 309.6 L735.3 314.3 L733.9 319.1 L732.9 324.1 L732.0 329.2 L731.3 334.4 L730.9 339.8 L730.9 345.3 L731.4 345.3 L732.4 340.0 L733.4 334.7 L734.2 329.6 L735.0 324.5 L736.0 319.5 L736.7 314.6 L737.4 309.8Z" fill="#561a4a"/>
<path d="M730.3 353.4 L729.6 357.3 L729.1 361.3 L729.0 365.3 L728.9 369.5 L728.9 373.6 L729.3 377.8 L729.8 382.1 L730.3 382.1 L730.7 377.8 L731.0 373.6 L731.0 369.5 L731.1 365.4 L731.2 361.4 L731.0 357.4 L730.8 353.4Z" fill="#561a4a"/>
<path d="M785.6 237.9 L778.4 242.3 L771.8 247.3 L765.9 252.9 L760.5 259.1 L755.8 265.7 L751.8 272.9 L748.5 280.6 L749.0 280.8 L752.7 273.4 L756.9 266.4 L761.6 259.9 L766.9 253.9 L772.7 248.3 L778.9 243.1 L785.8 238.3Z" fill="#561a4a"/>
<path d="M744.8 291.3 L742.6 298.0 L740.9 305.1 L739.9 312.5 L739.2 320.2 L738.8 328.2 L739.1 336.6 L739.9 345.2 L740.4 345.1 L740.4 336.5 L740.7 328.3 L741.1 320.3 L741.7 312.7 L742.8 305.4 L743.9 298.3 L745.3 291.4Z" fill="#561a4a"/>
<path d="M741.5 361.6 L741.6 364.5 L741.8 367.4 L742.2 370.4 L742.7 373.4 L743.2 376.4 L744.0 379.4 L744.9 382.4 L745.4 382.3 L745.1 379.2 L744.7 376.1 L744.2 373.1 L743.8 370.1 L743.3 367.2 L742.7 364.3 L742.0 361.5Z" fill="#561a4a"/>
<path d="M779.0 242.3 L773.8 246.6 L769.0 251.4 L764.7 256.8 L760.8 262.4 L757.1 268.4 L754.1 274.8 L751.6 281.5 L752.1 281.7 L755.7 275.6 L759.3 269.6 L762.9 263.8 L766.8 258.3 L770.9 253.0 L775.1 247.8 L779.4 242.6Z" fill="#561a4a"/>
<path d="M747.0 293.5 L743.5 302.7 L740.8 312.6 L738.9 323.0 L737.5 333.9 L736.6 345.2 L736.6 357.0 L737.3 369.3 L737.8 369.3 L738.4 357.1 L739.2 345.4 L740.1 334.1 L741.5 323.4 L743.3 313.1 L745.3 303.2 L747.5 293.7Z" fill="#561a4a"/>
<path d="M780.4 236.4 L776.5 239.4 L773.0 242.9 L769.9 246.8 L767.0 250.9 L764.4 255.3 L762.2 260.0 L760.4 265.0 L760.9 265.2 L763.8 260.9 L766.6 256.6 L769.3 252.4 L772.1 248.4 L775.0 244.5 L777.9 240.6 L780.7 236.7Z" fill="#561a4a"/>
<path d="M756.8 273.5 L753.7 280.2 L751.1 287.4 L749.2 295.0 L747.6 303.0 L746.4 311.4 L745.8 320.1 L745.8 329.2 L746.3 329.2 L747.7 320.3 L749.1 311.8 L750.4 303.5 L751.9 295.6 L753.7 288.1 L755.5 280.8 L757.3 273.6Z" fill="#561a4a"/>
<path d="M745.4 339.3 L744.5 345.9 L744.1 352.8 L744.2 359.8 L744.6 367.0 L745.1 374.4 L746.1 381.8 L747.7 389.4 L748.2 389.4 L748.2 381.6 L748.1 374.1 L747.6 366.8 L747.3 359.7 L747.1 352.8 L746.6 346.0 L745.9 339.3Z" fill="#561a4a"/>
<path d="M785.3 239.2 L781.3 243.2 L777.8 247.9 L774.8 253.0 L772.0 258.6 L769.4 264.4 L767.4 270.8 L765.9 277.5 L766.4 277.6 L769.3 271.5 L772.1 265.6 L774.7 259.9 L777.4 254.5 L780.3 249.4 L783.0 244.4 L785.7 239.5Z" fill="#561a4a"/>
<path d="M762.3 290.1 L759.6 300.1 L757.3 310.7 L755.7 322.0 L754.5 333.8 L753.6 346.3 L753.3 359.4 L753.6 373.0 L754.1 373.0 L754.8 359.4 L755.7 346.4 L756.7 334.0 L757.9 322.2 L759.5 311.0 L761.1 300.4 L762.8 290.2Z" fill="#561a4a"/>
<path d="M774.5 256.1 L769.6 262.9 L765.5 270.6 L762.3 279.2 L759.6 288.5 L757.5 298.5 L756.2 309.3 L755.9 320.7 L756.4 320.7 L758.4 309.5 L760.5 299.1 L762.7 289.3 L765.3 280.2 L768.4 271.8 L771.6 263.9 L774.9 256.4Z" fill="#561a4a"/>
<path d="M755.2 332.6 L754.6 340.1 L754.3 348.0 L754.5 356.1 L754.8 364.4 L755.4 373.0 L756.4 381.8 L757.7 390.9 L758.1 390.8 L757.7 381.7 L757.3 372.9 L756.8 364.3 L756.4 356.0 L756.2 348.0 L755.9 340.2 L755.7 332.6Z" fill="#561a4a"/>
<path d="M784.2 240.9 L782.3 242.8 L780.8 245.0 L779.6 247.4 L778.4 249.9 L777.4 252.6 L776.7 255.4 L776.4 258.4 L776.8 258.6 L778.5 256.1 L780.0 253.6 L781.1 251.1 L782.2 248.6 L783.3 246.2 L784.1 243.7 L784.6 241.2Z" fill="#561a4a"/>
<path d="M775.3 261.5 L772.7 268.8 L770.4 276.6 L768.6 284.9 L767.0 293.7 L765.6 303.1 L764.6 312.9 L763.9 323.3 L764.4 323.3 L765.7 313.1 L767.1 303.3 L768.6 294.0 L770.2 285.2 L772.0 276.9 L773.8 269.1 L775.7 261.7Z" fill="#561a4a"/>
<path d="M763.2 332.3 L762.5 339.7 L762.0 347.3 L761.7 355.1 L761.6 363.1 L761.5 371.4 L761.8 379.9 L762.2 388.5 L762.7 388.5 L762.9 379.8 L763.1 371.4 L763.2 363.2 L763.3 355.1 L763.5 347.3 L763.6 339.8 L763.7 332.4Z" fill="#561a4a"/>
<path d="M780.9 256.9 L779.4 259.6 L778.0 262.5 L776.9 265.6 L775.8 268.8 L774.9 272.1 L774.2 275.6 L773.6 279.3 L774.1 279.4 L775.3 275.9 L776.5 272.6 L777.5 269.3 L778.5 266.1 L779.6 263.1 L780.5 260.1 L781.4 257.1Z" fill="#561a4a"/>
<path d="M771.7 288.6 L770.1 293.9 L768.8 299.5 L768.1 305.3 L767.5 311.4 L767.0 317.7 L766.9 324.2 L767.3 331.0 L767.8 331.0 L768.8 324.3 L769.6 317.9 L770.2 311.6 L770.8 305.6 L771.5 299.8 L771.9 294.2 L772.2 288.7Z" fill="#561a4a"/>
<path d="M766.9 345.8 L766.1 352.5 L765.7 359.5 L765.8 366.6 L766.0 373.9 L766.4 381.4 L767.2 389.1 L768.4 396.9 L768.9 396.8 L769.2 388.9 L769.2 381.3 L769.0 373.8 L768.8 366.5 L768.6 359.4 L768.1 352.5 L767.4 345.8Z" fill="#561a4a"/>
<path d="M783.1 256.3 L781.1 260.8 L779.4 265.8 L778.2 271.2 L777.1 276.9 L776.2 282.9 L775.7 289.3 L775.5 296.0 L776.0 296.1 L777.3 289.5 L778.5 283.3 L779.5 277.3 L780.6 271.7 L781.7 266.4 L782.7 261.3 L783.5 256.4Z" fill="#561a4a"/>
<path d="M775.0 301.7 L773.9 308.9 L773.2 316.6 L772.9 324.5 L772.7 332.8 L772.7 341.4 L773.1 350.4 L773.8 359.6 L774.3 359.6 L774.6 350.4 L774.9 341.4 L775.0 332.9 L775.2 324.6 L775.4 316.7 L775.5 309.0 L775.5 301.7Z" fill="#561a4a"/>
<path d="M774.3 374.5 L773.5 375.7 L773.1 376.9 L773.1 378.0 L773.1 379.1 L773.2 380.3 L773.7 381.4 L774.6 382.5 L775.1 382.5 L775.9 381.3 L776.3 380.1 L776.3 379.0 L776.3 377.9 L776.2 376.7 L775.7 375.6 L774.8 374.5Z" fill="#561a4a"/>
<path d="M789.4 244.2 L786.6 247.5 L784.3 251.4 L782.5 255.8 L780.8 260.4 L779.3 265.3 L778.4 270.6 L777.9 276.3 L778.4 276.4 L780.5 271.1 L782.3 266.2 L783.8 261.4 L785.4 256.9 L787.1 252.7 L788.6 248.5 L789.8 244.4Z" fill="#561a4a"/>
<path d="M775.5 290.4 L774.3 295.7 L773.3 301.3 L772.8 307.1 L772.4 313.0 L772.1 319.2 L772.1 325.6 L772.5 332.2 L773.0 332.2 L773.7 325.7 L774.2 319.3 L774.6 313.2 L775.0 307.2 L775.5 301.5 L775.8 295.9 L776.0 290.5Z" fill="#561a4a"/>
<path d="M772.4 338.4 L771.7 345.5 L771.4 352.9 L771.6 360.4 L771.9 368.2 L772.3 376.2 L773.2 384.3 L774.6 392.7 L775.1 392.7 L775.2 384.2 L775.1 376.0 L774.8 368.1 L774.5 360.3 L774.2 352.8 L773.7 345.5 L772.9 338.4Z" fill="#561a4a"/>
<path d="M786.7 247.9 L785.6 250.3 L784.7 252.8 L784.0 255.5 L783.4 258.3 L782.8 261.2 L782.5 264.2 L782.3 267.3 L782.8 267.4 L783.6 264.4 L784.4 261.5 L785.0 258.6 L785.6 255.9 L786.3 253.2 L786.7 250.6 L787.1 248.0Z" fill="#561a4a"/>
<path d="M781.4 272.8 L780.1 280.4 L779.0 288.6 L778.3 297.3 L777.9 306.5 L777.6 316.1 L777.7 326.3 L778.2 337.0 L778.7 337.0 L779.1 326.3 L779.5 316.2 L779.8 306.5 L780.3 297.4 L780.9 288.7 L781.4 280.5 L781.9 272.8Z" fill="#561a4a"/>
<path d="M778.4 347.6 L778.3 354.3 L778.3 361.1 L778.6 368.1 L779.0 375.3 L779.4 382.6 L780.1 390.1 L780.9 397.8 L781.4 397.7 L781.1 390.1 L780.9 382.6 L780.5 375.2 L780.1 368.1 L779.8 361.1 L779.3 354.3 L778.9 347.6Z" fill="#561a4a"/>
<path d="M793.3 238.0 L791.6 241.3 L790.1 245.1 L788.9 249.1 L787.9 253.5 L786.9 258.2 L786.3 263.1 L785.9 268.4 L786.4 268.5 L787.9 263.4 L789.1 258.6 L790.2 254.0 L791.2 249.7 L792.3 245.7 L793.1 241.9 L793.8 238.2Z" fill="#561a4a"/>
<path d="M785.2 272.9 L784.0 277.2 L783.0 281.7 L782.4 286.4 L781.9 291.2 L781.5 296.2 L781.4 301.5 L781.6 306.8 L782.1 306.9 L783.1 301.6 L783.9 296.5 L784.4 291.5 L785.0 286.7 L785.5 282.0 L785.7 277.4 L785.7 273.0Z" fill="#561a4a"/>
<path d="M780.7 320.1 L779.5 328.7 L778.6 337.7 L778.3 347.1 L778.1 356.8 L777.9 366.9 L778.2 377.3 L779.0 388.1 L779.5 388.1 L780.3 377.3 L780.8 366.9 L781.0 356.9 L781.3 347.2 L781.5 337.8 L781.5 328.8 L781.2 320.1Z" fill="#561a4a"/>
<path d="M794.3 239.6 L793.0 244.6 L791.9 250.3 L791.2 256.9 L790.6 264.3 L790.2 272.4 L790.1 281.3 L790.3 290.9 L790.8 290.9 L791.3 281.3 L791.9 272.5 L792.3 264.4 L792.9 257.1 L793.6 250.6 L794.2 244.8 L794.8 239.7Z" fill="#561a4a"/>
<path d="M790.3 308.4 L790.2 319.2 L790.2 330.7 L790.5 342.8 L791.0 355.6 L791.6 369.0 L792.5 383.1 L793.6 397.9 L794.1 397.9 L793.6 383.1 L793.1 369.0 L792.6 355.5 L792.1 342.8 L791.7 330.6 L791.2 319.2 L790.8 308.4Z" fill="#561a4a"/>
<path d="M796.7 231.3 L796.0 234.3 L795.6 237.6 L795.6 241.1 L795.6 244.9 L795.6 249.0 L796.0 253.4 L796.7 258.0 L797.2 258.0 L797.8 253.4 L798.2 249.0 L798.2 244.9 L798.2 241.1 L798.2 237.6 L797.8 234.3 L797.2 231.3Z" fill="#561a4a"/>
<path d="M796.7 260.7 L796.0 264.6 L795.7 268.7 L795.7 272.9 L795.7 277.3 L795.8 281.8 L796.2 286.6 L796.9 291.5 L797.4 291.5 L798.0 286.6 L798.3 281.8 L798.3 277.3 L798.3 272.9 L798.2 268.6 L797.8 264.6 L797.2 260.7Z" fill="#561a4a"/>
<path d="M797.0 307.6 L796.8 317.6 L796.7 328.1 L796.8 339.1 L796.9 350.7 L797.1 362.7 L797.4 375.3 L797.9 388.4 L798.4 388.4 L798.5 375.3 L798.6 362.7 L798.4 350.6 L798.3 339.1 L798.2 328.1 L797.9 317.6 L797.5 307.6Z" fill="#561a4a"/>
<path d="M799.4 234.0 L798.4 236.8 L797.5 240.0 L797.1 243.6 L796.6 247.6 L796.2 251.9 L796.2 256.6 L796.4 261.7 L796.9 261.8 L797.8 256.7 L798.5 252.1 L798.9 247.8 L799.3 243.9 L799.8 240.3 L799.9 237.1 L799.9 234.1Z" fill="#561a4a"/>
<path d="M796.0 269.7 L795.5 273.3 L795.1 277.1 L794.9 281.0 L794.8 285.0 L794.7 289.2 L794.8 293.5 L795.0 298.0 L795.5 298.0 L795.9 293.5 L796.3 289.2 L796.4 285.1 L796.6 281.0 L796.7 277.1 L796.6 273.4 L796.5 269.7Z" fill="#561a4a"/>
<path d="M794.9 304.0 L793.9 313.5 L793.3 323.5 L793.2 334.0 L793.2 345.1 L793.3 356.6 L793.8 368.8 L794.8 381.4 L795.3 381.4 L796.0 368.7 L796.4 356.6 L796.4 345.1 L796.4 334.0 L796.5 323.5 L796.1 313.5 L795.4 304.0Z" fill="#561a4a"/>
<path d="M796.9 243.3 L796.6 246.9 L796.4 250.9 L796.6 255.3 L796.7 260.1 L796.9 265.3 L797.4 270.9 L798.0 276.9 L798.5 276.9 L798.9 270.9 L799.0 265.2 L798.9 260.0 L798.7 255.2 L798.5 250.8 L798.0 246.8 L797.4 243.3Z" fill="#561a4a"/>
<path d="M798.3 287.1 L797.7 290.7 L797.4 294.3 L797.4 298.0 L797.5 301.8 L797.6 305.7 L798.1 309.8 L798.8 313.9 L799.3 313.9 L799.9 309.7 L800.2 305.7 L800.2 301.8 L800.1 297.9 L800.0 294.2 L799.5 290.6 L798.8 287.1Z" fill="#561a4a"/>
<path d="M799.1 331.4 L798.7 337.6 L798.5 343.9 L798.6 350.5 L798.7 357.2 L798.8 364.1 L799.2 371.2 L799.8 378.5 L800.3 378.5 L800.7 371.2 L800.9 364.1 L800.9 357.2 L800.8 350.5 L800.6 343.9 L800.2 337.5 L799.6 331.4Z" fill="#561a4a"/>
<path d="M803.2 246.5 L803.3 252.0 L803.7 257.9 L804.4 264.2 L805.1 270.9 L805.6 278.1 L806.5 285.7 L807.6 293.7 L808.1 293.7 L808.5 285.6 L808.5 277.9 L808.0 270.7 L807.4 263.9 L806.6 257.5 L805.4 251.7 L803.7 246.4Z" fill="#561a4a"/>
<path d="M807.9 305.5 L807.3 312.3 L807.0 319.3 L806.9 326.6 L806.8 334.2 L806.7 342.0 L806.9 350.1 L807.2 358.4 L807.7 358.4 L808.6 350.1 L809.1 342.1 L809.3 334.2 L809.4 326.7 L809.4 319.3 L809.0 312.3 L808.4 305.4Z" fill="#561a4a"/>
<path d="M806.7 371.9 L805.9 373.0 L805.4 374.2 L805.3 375.4 L805.3 376.6 L805.2 377.8 L805.6 379.0 L806.3 380.2 L806.8 380.2 L807.6 379.1 L808.0 377.9 L808.1 376.7 L808.2 375.5 L808.2 374.3 L807.8 373.1 L807.2 371.9Z" fill="#561a4a"/>
<path d="M810.1 252.5 L810.5 258.0 L811.1 263.9 L811.9 270.2 L812.7 277.1 L813.5 284.4 L814.5 292.2 L815.7 300.5 L816.2 300.5 L816.4 292.1 L816.2 284.2 L815.5 276.8 L814.7 269.9 L813.8 263.5 L812.3 257.6 L810.5 252.4Z" fill="#561a4a"/>
<path d="M816.4 314.7 L815.9 322.0 L815.7 329.5 L815.7 337.3 L815.8 345.4 L815.8 353.7 L816.1 362.4 L816.7 371.3 L817.2 371.3 L818.0 362.4 L818.4 353.7 L818.5 345.4 L818.4 337.3 L818.3 329.5 L817.8 321.9 L816.9 314.7Z" fill="#561a4a"/>
<path d="M816.6 377.4 L816.0 378.8 L815.7 380.3 L815.6 381.8 L815.6 383.3 L815.6 384.8 L815.9 386.3 L816.3 387.8 L816.8 387.8 L817.4 386.3 L817.7 384.8 L817.8 383.3 L817.8 381.8 L817.8 380.3 L817.6 378.9 L817.1 377.4Z" fill="#561a4a"/>
<path d="M806.3 239.8 L807.1 244.2 L807.9 248.9 L808.9 254.1 L809.9 259.8 L810.7 266.0 L811.8 272.7 L813.0 279.9 L813.5 279.8 L813.5 272.5 L813.1 265.7 L812.3 259.4 L811.3 253.7 L810.2 248.4 L808.7 243.7 L806.8 239.6Z" fill="#561a4a"/>
<path d="M813.6 289.7 L813.0 296.1 L812.7 302.8 L812.8 309.8 L812.9 317.1 L813.0 324.6 L813.4 332.5 L814.1 340.7 L814.6 340.7 L815.6 332.5 L816.1 324.6 L816.2 317.1 L816.1 309.8 L815.9 302.7 L815.2 296.1 L814.1 289.7Z" fill="#561a4a"/>
<path d="M813.7 356.8 L812.7 362.4 L812.1 368.1 L811.8 373.9 L811.6 379.8 L811.3 385.9 L811.3 392.1 L811.7 398.5 L812.2 398.5 L813.3 392.2 L814.0 386.1 L814.3 380.0 L814.6 374.0 L814.8 368.2 L814.7 362.4 L814.2 356.8Z" fill="#561a4a"/>
<path d="M805.4 238.1 L805.9 240.9 L806.5 244.0 L807.2 247.2 L807.9 250.8 L808.6 254.6 L809.5 258.6 L810.3 262.8 L810.8 262.8 L810.5 258.4 L810.0 254.3 L809.4 250.5 L808.7 246.9 L807.9 243.6 L806.9 240.6 L805.9 237.9Z" fill="#561a4a"/>
<path d="M810.9 267.7 L811.2 275.7 L811.6 284.2 L812.2 293.5 L812.8 303.3 L813.3 313.8 L814.0 325.0 L814.9 336.9 L815.4 336.9 L815.7 325.0 L815.6 313.8 L815.2 303.2 L814.6 293.3 L813.9 284.1 L812.8 275.5 L811.4 267.7Z" fill="#561a4a"/>
<path d="M815.1 349.5 L814.6 354.6 L814.3 359.8 L814.3 365.1 L814.3 370.5 L814.3 376.1 L814.7 381.7 L815.2 387.4 L815.7 387.4 L816.3 381.7 L816.7 376.1 L816.7 370.5 L816.7 365.1 L816.6 359.8 L816.2 354.6 L815.6 349.5Z" fill="#561a4a"/>
<path d="M814.2 252.0 L814.4 255.4 L814.8 259.0 L815.5 262.6 L816.1 266.4 L816.8 270.3 L817.8 274.3 L818.9 278.5 L819.4 278.4 L819.3 274.1 L819.0 270.0 L818.3 266.0 L817.6 262.2 L816.9 258.6 L815.9 255.1 L814.6 251.9Z" fill="#561a4a"/>
<path d="M819.6 283.7 L819.8 290.6 L820.2 297.9 L820.9 305.4 L821.6 313.3 L822.2 321.5 L823.1 330.0 L824.3 338.8 L824.8 338.8 L824.8 329.9 L824.6 321.3 L824.0 313.1 L823.4 305.2 L822.6 297.6 L821.5 290.4 L820.1 283.6Z" fill="#561a4a"/>
<path d="M824.5 344.1 L824.4 350.7 L824.3 357.5 L824.6 364.5 L824.8 371.6 L825.0 378.9 L825.5 386.4 L826.2 394.0 L826.7 394.0 L827.0 386.4 L827.1 378.9 L826.9 371.6 L826.7 364.4 L826.4 357.5 L825.8 350.7 L825.0 344.0Z" fill="#561a4a"/>
<path d="M813.4 247.5 L814.7 251.1 L815.9 255.0 L817.3 259.0 L818.5 263.2 L819.8 267.6 L821.1 272.1 L822.4 276.9 L822.9 276.8 L822.0 271.9 L821.0 267.2 L819.8 262.8 L818.5 258.6 L817.1 254.6 L815.5 250.8 L813.8 247.3Z" fill="#561a4a"/>
<path d="M823.6 282.7 L824.0 286.3 L824.4 290.0 L825.0 293.7 L825.5 297.5 L826.1 301.4 L826.8 305.4 L827.6 309.5 L828.1 309.4 L827.9 305.3 L827.7 301.2 L827.1 297.3 L826.6 293.5 L825.9 289.7 L825.1 286.1 L824.1 282.6Z" fill="#561a4a"/>
<path d="M829.0 324.4 L828.8 331.9 L828.8 339.6 L829.2 347.6 L829.5 355.8 L829.7 364.2 L830.3 372.9 L831.2 381.8 L831.7 381.8 L832.4 372.9 L832.7 364.1 L832.5 355.7 L832.2 347.4 L831.8 339.5 L830.9 331.8 L829.5 324.4Z" fill="#561a4a"/>
<path d="M815.7 246.0 L818.0 251.9 L820.1 258.5 L822.2 265.8 L823.9 273.8 L825.5 282.6 L826.9 292.2 L828.2 302.6 L828.7 302.6 L828.1 292.1 L827.2 282.4 L825.7 273.5 L823.9 265.3 L821.8 258.0 L819.2 251.4 L816.2 245.8Z" fill="#561a4a"/>
<path d="M828.8 313.5 L828.4 323.7 L828.1 334.4 L828.0 345.6 L827.7 357.4 L827.2 369.7 L826.9 382.7 L826.6 396.2 L827.1 396.3 L828.7 382.8 L829.8 369.9 L830.4 357.5 L830.7 345.6 L830.8 334.4 L830.3 323.6 L829.3 313.5Z" fill="#561a4a"/>
<path d="M813.7 238.7 L814.8 240.9 L816.0 243.1 L817.5 245.2 L818.8 247.3 L820.2 249.6 L821.8 251.8 L823.5 254.0 L824.0 253.8 L823.2 251.0 L822.2 248.4 L820.8 246.1 L819.4 243.9 L817.9 241.8 L816.1 239.9 L814.1 238.3Z" fill="#561a4a"/>
<path d="M825.0 257.2 L826.3 262.1 L827.7 267.1 L829.2 272.3 L830.7 277.8 L832.0 283.5 L833.4 289.4 L835.1 295.6 L835.6 295.5 L835.2 289.1 L834.4 283.0 L833.2 277.2 L831.7 271.6 L830.1 266.4 L828.0 261.5 L825.5 257.1Z" fill="#561a4a"/>
<path d="M836.2 304.9 L836.1 310.6 L836.1 316.4 L836.4 322.3 L836.6 328.5 L836.8 334.8 L837.1 341.3 L837.6 348.0 L838.1 348.0 L838.8 341.3 L839.1 334.8 L839.1 328.4 L838.8 322.2 L838.5 316.2 L837.8 310.4 L836.7 304.9Z" fill="#561a4a"/>
<path d="M837.2 359.4 L836.5 363.5 L835.9 367.7 L835.6 371.9 L835.3 376.2 L835.0 380.6 L835.0 385.0 L835.1 389.5 L835.6 389.6 L836.6 385.1 L837.3 380.7 L837.7 376.4 L837.9 372.0 L838.2 367.8 L838.1 363.6 L837.7 359.4Z" fill="#561a4a"/>
<path d="M822.9 246.3 L825.1 250.4 L827.2 254.7 L829.4 259.1 L831.4 263.6 L833.3 268.5 L835.2 273.4 L837.1 278.6 L837.6 278.5 L836.4 273.1 L834.9 267.9 L833.1 262.9 L831.0 258.3 L828.8 253.8 L826.2 249.8 L823.3 246.0Z" fill="#561a4a"/>
<path d="M839.7 290.1 L840.4 297.7 L841.1 305.6 L841.8 313.7 L842.3 322.2 L842.6 331.1 L843.0 340.4 L843.3 350.0 L843.8 350.0 L844.6 340.4 L845.0 331.1 L844.8 322.1 L844.2 313.5 L843.4 305.3 L842.1 297.5 L840.2 290.0Z" fill="#561a4a"/>
<path d="M842.4 365.5 L841.8 369.5 L841.2 373.4 L840.8 377.5 L840.4 381.6 L840.0 385.7 L839.7 389.9 L839.5 394.2 L840.0 394.3 L840.9 390.1 L841.6 385.9 L842.1 381.7 L842.5 377.6 L842.8 373.6 L842.9 369.6 L842.9 365.6Z" fill="#561a4a"/>
<path d="M821.0 245.6 L824.1 249.9 L827.0 254.5 L829.9 259.3 L832.5 264.5 L834.8 269.9 L837.2 275.6 L839.3 281.7 L839.8 281.6 L838.1 275.3 L836.2 269.4 L833.8 263.8 L831.2 258.6 L828.3 253.7 L825.0 249.3 L821.4 245.3Z" fill="#561a4a"/>
<path d="M841.4 290.3 L841.8 293.8 L842.3 297.4 L842.8 301.1 L843.3 304.8 L843.8 308.6 L844.4 312.5 L844.9 316.5 L845.4 316.4 L845.4 312.4 L845.2 308.5 L844.8 304.6 L844.3 300.9 L843.7 297.2 L842.8 293.6 L841.9 290.2Z" fill="#561a4a"/>
<path d="M845.5 329.1 L845.0 335.4 L844.5 341.8 L844.3 348.4 L844.0 355.2 L843.6 362.2 L843.3 369.4 L843.2 376.8 L843.7 376.8 L845.1 369.5 L846.0 362.4 L846.5 355.4 L846.8 348.5 L847.0 341.8 L846.7 335.4 L846.0 329.1Z" fill="#561a4a"/>
<path d="M810.4 235.7 L815.0 241.1 L819.3 246.6 L823.7 252.5 L827.7 258.8 L831.5 265.7 L835.3 272.9 L839.1 280.6 L839.6 280.4 L836.9 272.2 L833.7 264.6 L829.9 257.6 L825.8 251.1 L821.3 245.1 L816.2 239.9 L810.7 235.4Z" fill="#561a4a"/>
<path d="M843.2 293.0 L844.1 298.1 L845.1 303.3 L846.2 308.5 L847.3 313.9 L848.4 319.4 L849.6 325.0 L850.9 330.8 L851.4 330.7 L851.0 324.8 L850.4 319.0 L849.4 313.5 L848.3 308.0 L847.1 302.8 L845.5 297.7 L843.7 292.9Z" fill="#561a4a"/>
<path d="M851.8 338.8 L852.1 345.9 L852.4 353.1 L852.8 360.5 L853.1 368.0 L853.4 375.8 L853.8 383.7 L854.3 391.9 L854.8 391.9 L855.2 383.7 L855.4 375.7 L855.2 368.0 L854.8 360.4 L854.3 352.9 L853.5 345.8 L852.3 338.8Z" fill="#561a4a"/>
<path d="M819.8 243.0 L821.8 246.0 L824.0 248.8 L826.3 251.3 L828.6 254.0 L830.9 256.8 L833.4 259.4 L836.1 261.9 L836.5 261.7 L835.1 258.2 L833.2 255.0 L831.0 252.1 L828.6 249.3 L826.1 246.7 L823.3 244.5 L820.1 242.7Z" fill="#561a4a"/>
<path d="M838.2 265.1 L839.5 268.6 L841.0 272.0 L842.7 275.3 L844.3 278.8 L845.9 282.3 L847.7 285.8 L849.6 289.3 L850.1 289.2 L849.2 285.2 L848.0 281.4 L846.5 277.8 L844.8 274.3 L843.1 270.9 L841.0 267.8 L838.6 264.9Z" fill="#561a4a"/>
<path d="M852.6 298.6 L854.4 307.1 L856.1 316.0 L857.6 325.3 L858.8 334.9 L859.8 345.0 L860.6 355.5 L861.3 366.4 L861.8 366.4 L861.9 355.4 L861.6 344.9 L860.7 334.7 L859.5 325.0 L857.9 315.7 L855.7 306.8 L853.1 298.5Z" fill="#561a4a"/>
<path d="M861.0 385.0 L860.7 386.0 L860.4 387.0 L860.3 388.0 L860.3 389.1 L860.2 390.1 L860.4 391.2 L860.7 392.2 L861.2 392.3 L861.6 391.2 L861.9 390.2 L862.0 389.1 L862.0 388.1 L862.0 387.1 L861.8 386.0 L861.5 385.0Z" fill="#561a4a"/>
<path d="M819.1 243.9 L823.9 248.9 L828.4 254.2 L832.7 259.6 L836.8 265.4 L840.5 271.6 L844.2 278.1 L847.7 284.9 L848.2 284.6 L845.5 277.4 L842.3 270.6 L838.5 264.3 L834.3 258.4 L829.9 252.9 L824.9 248.0 L819.5 243.5Z" fill="#561a4a"/>
<path d="M849.3 288.9 L851.4 296.6 L853.3 304.5 L855.2 312.6 L856.9 321.2 L858.2 330.1 L859.6 339.4 L860.8 349.0 L861.3 349.0 L861.2 339.2 L860.5 329.8 L859.2 320.8 L857.6 312.1 L855.6 303.9 L853.0 296.1 L849.8 288.7Z" fill="#561a4a"/>
<path d="M861.3 367.4 L860.5 369.1 L860.0 370.8 L860.0 372.4 L860.0 374.1 L859.9 375.8 L860.3 377.5 L861.1 379.3 L861.6 379.3 L862.5 377.6 L863.0 375.9 L863.0 374.2 L863.1 372.5 L863.0 370.8 L862.6 369.1 L861.8 367.4Z" fill="#561a4a"/>
<path d="M819.7 239.3 L824.2 243.1 L828.4 247.0 L832.6 250.9 L836.6 254.9 L840.3 259.2 L844.0 263.5 L847.6 267.9 L848.1 267.6 L845.1 262.7 L841.8 257.9 L838.0 253.6 L834.0 249.4 L829.7 245.5 L825.0 242.0 L820.0 238.9Z" fill="#561a4a"/>
<path d="M851.6 274.5 L854.0 280.0 L856.3 285.7 L858.5 291.5 L860.5 297.5 L862.3 303.7 L864.1 310.1 L865.8 316.7 L866.3 316.6 L865.5 309.8 L864.3 303.2 L862.5 296.9 L860.5 290.8 L858.1 285.0 L855.3 279.4 L852.0 274.2Z" fill="#561a4a"/>
<path d="M866.7 323.1 L866.9 331.7 L867.0 340.4 L867.1 349.5 L866.8 358.9 L866.2 368.5 L865.7 378.6 L865.1 389.0 L865.6 389.1 L867.6 378.8 L869.0 368.8 L869.7 359.0 L869.9 349.5 L869.7 340.4 L868.8 331.5 L867.2 323.1Z" fill="#561a4a"/>
<path d="M814.9 233.4 L820.2 237.8 L825.2 242.2 L830.2 246.6 L834.9 251.3 L839.4 256.2 L843.8 261.2 L848.2 266.3 L848.6 266.0 L845.1 260.2 L841.1 254.7 L836.6 249.7 L831.8 244.9 L826.7 240.4 L821.2 236.5 L815.2 233.0Z" fill="#561a4a"/>
<path d="M853.6 275.0 L857.6 284.3 L861.2 293.9 L864.6 303.9 L867.5 314.4 L869.8 325.5 L871.9 337.1 L873.7 349.3 L874.2 349.2 L873.6 336.9 L872.3 325.1 L870.0 313.8 L867.1 303.1 L863.6 293.0 L859.2 283.5 L854.0 274.8Z" fill="#561a4a"/>
<path d="M874.3 366.6 L873.8 369.6 L873.4 372.7 L873.3 375.7 L873.3 378.8 L873.2 382.0 L873.4 385.2 L873.8 388.4 L874.3 388.4 L875.0 385.2 L875.5 382.1 L875.6 378.9 L875.7 375.8 L875.7 372.7 L875.4 369.6 L874.8 366.6Z" fill="#561a4a"/>
<path d="M816.0 240.4 L823.2 245.4 L830.0 250.6 L836.4 255.7 L842.4 261.2 L848.0 266.9 L853.3 272.8 L858.4 278.9 L858.8 278.6 L854.7 271.7 L849.8 265.2 L844.2 259.3 L838.1 253.8 L831.5 248.5 L824.2 244.0 L816.3 240.0Z" fill="#561a4a"/>
<path d="M861.5 283.9 L863.1 288.2 L864.8 292.5 L866.7 296.7 L868.4 301.0 L870.0 305.4 L871.8 309.9 L873.7 314.4 L874.2 314.2 L873.7 309.3 L872.6 304.6 L871.0 300.0 L869.2 295.6 L867.3 291.3 L864.8 287.3 L862.0 283.6Z" fill="#561a4a"/>
<path d="M875.8 324.0 L876.3 330.4 L876.7 336.9 L877.1 343.6 L877.3 350.4 L877.2 357.4 L877.2 364.6 L877.0 372.0 L877.5 372.1 L878.6 364.7 L879.2 357.5 L879.3 350.4 L879.2 343.5 L878.7 336.8 L877.7 330.2 L876.3 323.9Z" fill="#561a4a"/>
<path d="M848.3 258.4 L852.1 263.4 L855.9 268.3 L859.6 273.1 L863.0 278.1 L866.2 283.3 L869.4 288.5 L872.7 293.8 L873.2 293.6 L871.2 287.6 L868.7 281.9 L865.4 276.6 L861.9 271.4 L858.1 266.5 L853.6 262.0 L848.7 258.0Z" fill="#561a4a"/>
<path d="M876.9 304.9 L878.7 314.3 L880.2 324.0 L881.4 334.1 L882.0 344.5 L882.0 355.4 L881.7 366.8 L881.2 378.7 L881.7 378.7 L883.7 367.0 L884.8 355.5 L884.8 344.5 L884.2 333.8 L882.9 323.6 L880.6 313.9 L877.3 304.8Z" fill="#561a4a"/>
<path d="M836.3 246.7 L841.7 250.8 L846.7 255.0 L851.6 259.3 L856.1 263.7 L860.4 268.3 L864.5 272.9 L868.4 277.8 L868.8 277.5 L865.3 272.3 L861.5 267.3 L857.3 262.6 L852.6 258.1 L847.7 253.8 L842.3 249.9 L836.6 246.3Z" fill="#561a4a"/>
<path d="M874.7 288.4 L878.5 297.7 L881.6 307.3 L884.2 317.4 L885.9 328.0 L886.9 339.0 L887.3 350.6 L887.1 362.8 L887.6 362.8 L888.7 350.6 L888.9 338.9 L887.9 327.7 L886.2 317.0 L883.5 306.8 L879.8 297.1 L875.2 288.2Z" fill="#561a4a"/>
<path d="M886.4 369.3 L885.7 370.9 L885.2 372.5 L884.9 374.2 L884.6 375.8 L884.4 377.5 L884.4 379.3 L884.6 381.1 L885.1 381.1 L885.9 379.5 L886.5 377.9 L886.8 376.2 L887.0 374.5 L887.2 372.8 L887.1 371.1 L886.9 369.4Z" fill="#561a4a"/>
<path d="M822.0 239.0 L826.0 241.8 L829.9 244.4 L833.8 246.8 L837.6 249.3 L841.2 251.8 L844.9 254.2 L848.6 256.5 L848.9 256.1 L845.8 253.0 L842.5 250.1 L838.8 247.5 L835.0 245.0 L831.0 242.5 L826.7 240.4 L822.3 238.6Z" fill="#561a4a"/>
<path d="M857.3 264.2 L864.1 271.8 L870.0 279.7 L875.2 287.9 L879.6 296.4 L883.1 305.4 L886.0 314.7 L888.0 324.4 L888.5 324.3 L886.9 314.5 L884.4 304.9 L880.8 295.9 L876.4 287.2 L871.1 278.9 L864.8 271.2 L857.7 263.8Z" fill="#561a4a"/>
<path d="M888.6 329.2 L888.6 334.2 L888.5 339.3 L888.5 344.4 L888.3 349.7 L887.9 355.0 L887.5 360.5 L887.0 366.1 L887.5 366.1 L888.6 360.6 L889.5 355.2 L890.0 349.8 L890.2 344.5 L890.2 339.3 L889.8 334.1 L889.1 329.2Z" fill="#561a4a"/>
<path d="M885.6 373.6 L884.8 374.1 L884.4 374.7 L884.2 375.4 L884.0 376.0 L883.9 376.7 L884.1 377.5 L884.5 378.3 L885.0 378.4 L885.7 377.8 L886.2 377.2 L886.4 376.6 L886.6 375.9 L886.7 375.2 L886.5 374.5 L886.1 373.7Z" fill="#561a4a"/>
<path d="M848.7 254.6 L854.1 259.6 L859.2 264.6 L864.1 269.6 L868.7 274.8 L872.8 280.1 L876.9 285.5 L880.7 290.9 L881.1 290.7 L877.9 284.8 L874.3 279.1 L870.0 273.7 L865.4 268.4 L860.4 263.3 L854.9 258.6 L849.0 254.2Z" fill="#561a4a"/>
<path d="M886.9 303.8 L889.6 312.6 L891.7 321.6 L893.4 330.8 L894.4 340.4 L894.6 350.3 L894.5 360.5 L893.7 371.1 L894.2 371.1 L895.8 360.6 L896.6 350.3 L896.3 340.3 L895.3 330.6 L893.6 321.2 L890.9 312.2 L887.4 303.6Z" fill="#561a4a"/>
<path d="M837.0 244.1 L844.1 249.2 L850.9 254.4 L857.3 259.4 L863.3 264.7 L868.8 270.1 L874.0 275.6 L879.0 281.1 L879.4 280.8 L875.3 274.5 L870.4 268.6 L864.9 263.0 L858.8 257.7 L852.2 252.5 L845.0 247.9 L837.2 243.7Z" fill="#561a4a"/>
<path d="M882.9 286.9 L887.4 296.4 L891.0 306.1 L894.0 316.1 L895.9 326.5 L896.9 337.4 L897.2 348.7 L896.8 360.5 L897.3 360.6 L899.0 348.8 L899.4 337.3 L898.5 326.2 L896.5 315.5 L893.4 305.3 L889.0 295.6 L883.3 286.7Z" fill="#561a4a"/>
<path d="M895.6 368.0 L894.7 369.7 L894.1 371.5 L893.6 373.4 L893.2 375.3 L892.8 377.2 L892.7 379.1 L892.7 381.2 L893.2 381.3 L894.1 379.5 L894.9 377.7 L895.4 375.8 L895.8 373.9 L896.2 372.0 L896.2 370.0 L896.1 368.0Z" fill="#561a4a"/>
<path d="M833.5 243.8 L843.2 249.8 L852.2 256.0 L860.5 262.1 L868.0 268.4 L874.8 275.0 L881.0 281.7 L886.6 288.5 L887.0 288.2 L882.2 280.7 L876.4 273.5 L869.6 266.7 L861.9 260.3 L853.4 254.1 L844.0 248.5 L833.7 243.3Z" fill="#561a4a"/>
<path d="M891.8 297.5 L895.2 306.1 L897.7 314.8 L899.5 323.8 L900.4 333.1 L900.4 342.7 L899.6 352.7 L898.0 363.1 L898.5 363.2 L900.9 352.9 L902.1 342.8 L902.2 333.0 L901.3 323.6 L899.4 314.4 L896.4 305.6 L892.3 297.3Z" fill="#561a4a"/>
<path d="M826.6 235.2 L832.8 239.1 L838.9 242.9 L844.8 246.5 L850.5 250.2 L856.0 253.9 L861.4 257.4 L866.7 260.8 L867.0 260.4 L862.5 255.9 L857.5 251.7 L852.0 247.9 L846.2 244.2 L840.2 240.7 L833.7 237.5 L826.8 234.7Z" fill="#561a4a"/>
<path d="M870.7 264.2 L875.9 269.9 L880.9 275.5 L885.6 281.1 L889.9 286.8 L893.8 292.7 L897.5 298.6 L901.0 304.6 L901.5 304.4 L898.9 297.9 L895.6 291.6 L891.7 285.6 L887.3 279.7 L882.5 274.1 L877.0 268.8 L871.0 263.9Z" fill="#561a4a"/>
<path d="M906.4 319.5 L907.5 327.2 L908.3 334.9 L909.0 342.7 L909.2 350.7 L909.0 358.9 L908.5 367.4 L908.0 376.2 L908.5 376.3 L910.6 367.7 L911.8 359.1 L912.2 350.7 L912.0 342.5 L911.2 334.5 L909.5 326.8 L906.9 319.4Z" fill="#561a4a"/>
<path d="M847.3 253.4 L854.7 258.1 L861.6 262.9 L868.1 267.7 L874.1 272.6 L879.7 277.8 L885.0 282.9 L889.8 288.2 L890.2 287.9 L885.8 282.2 L880.8 276.6 L875.2 271.4 L869.1 266.4 L862.5 261.6 L855.3 257.1 L847.6 252.9Z" fill="#561a4a"/>
<path d="M897.4 299.6 L899.6 304.6 L901.6 309.6 L903.5 314.6 L905.1 319.6 L906.4 324.8 L907.7 330.1 L908.8 335.5 L909.3 335.4 L909.0 329.9 L908.2 324.4 L906.9 319.1 L905.3 313.9 L903.3 308.9 L900.8 304.0 L897.9 299.4Z" fill="#561a4a"/>
<path d="M909.1 339.7 L908.8 344.3 L908.4 349.0 L908.2 353.8 L907.7 358.6 L907.1 363.6 L906.6 368.6 L906.0 373.9 L906.5 374.0 L908.1 368.9 L909.2 363.9 L909.9 358.9 L910.4 353.9 L910.6 349.1 L910.3 344.3 L909.6 339.6Z" fill="#561a4a"/>
<path d="M865.4 256.5 L873.4 262.3 L880.8 268.3 L887.5 274.2 L893.5 280.3 L898.9 286.6 L903.7 292.8 L907.9 299.3 L908.3 299.0 L904.5 292.3 L899.9 285.8 L894.5 279.4 L888.4 273.3 L881.6 267.3 L874.0 261.6 L865.7 256.1Z" fill="#561a4a"/>
<path d="M911.2 306.1 L913.5 313.4 L915.2 320.8 L916.4 328.3 L916.8 335.9 L916.4 343.7 L915.6 351.7 L914.1 360.0 L914.6 360.1 L916.8 352.0 L918.2 343.9 L918.5 335.9 L918.1 328.1 L916.9 320.4 L914.7 313.0 L911.6 305.9Z" fill="#561a4a"/>
<path d="M836.1 248.2 L844.0 252.2 L851.6 256.1 L858.9 259.7 L865.9 263.5 L872.4 267.2 L878.8 270.8 L884.9 274.3 L885.2 273.9 L879.7 269.5 L873.6 265.3 L867.0 261.4 L860.0 257.7 L852.6 254.0 L844.7 250.7 L836.3 247.8Z" fill="#561a4a"/>
<path d="M891.1 279.1 L895.5 283.4 L899.7 287.6 L903.6 291.7 L907.3 295.9 L910.5 300.1 L913.7 304.2 L916.6 308.4 L917.1 308.2 L914.9 303.5 L912.2 298.9 L908.9 294.6 L905.2 290.3 L901.1 286.2 L896.5 282.3 L891.4 278.7Z" fill="#561a4a"/>
<path d="M920.8 317.6 L921.8 321.9 L922.6 326.2 L923.3 330.5 L923.8 334.8 L924.0 339.2 L924.1 343.7 L924.1 348.3 L924.6 348.3 L925.3 343.7 L925.7 339.2 L925.5 334.7 L925.0 330.2 L924.2 325.9 L922.9 321.6 L921.2 317.5Z" fill="#561a4a"/>
<path d="M832.9 240.7 L839.1 243.6 L845.2 246.5 L851.0 249.3 L856.7 252.1 L862.1 254.9 L867.5 257.5 L872.6 260.2 L872.9 259.8 L868.0 256.6 L862.8 253.6 L857.4 250.7 L851.7 247.9 L845.8 245.2 L839.6 242.7 L833.1 240.2Z" fill="#561a4a"/>
<path d="M885.1 268.2 L892.7 274.2 L899.6 280.3 L905.8 286.3 L911.3 292.4 L916.0 298.7 L920.1 304.9 L923.6 311.4 L924.0 311.1 L921.1 304.4 L917.3 297.8 L912.5 291.4 L907.0 285.2 L900.7 279.1 L893.4 273.3 L885.4 267.8Z" fill="#561a4a"/>
<path d="M926.0 318.1 L926.9 323.8 L927.4 329.4 L927.8 335.1 L927.7 340.8 L927.1 346.7 L926.3 352.7 L925.3 358.9 L925.8 359.1 L928.0 353.1 L929.5 347.0 L930.1 341.0 L930.2 335.0 L929.8 329.1 L928.5 323.4 L926.5 318.0Z" fill="#561a4a"/>
<path d="M848.3 246.4 L857.6 251.6 L866.5 256.6 L874.9 261.4 L882.7 266.1 L889.9 270.9 L896.7 275.5 L903.1 279.9 L903.4 279.5 L897.8 274.1 L891.3 268.9 L884.0 264.0 L876.1 259.1 L867.6 254.4 L858.4 250.0 L848.5 245.9Z" fill="#561a4a"/>
<path d="M912.8 289.3 L917.9 296.2 L922.1 303.0 L925.5 309.8 L927.9 316.5 L929.3 323.4 L930.0 330.3 L929.8 337.5 L930.3 337.5 L931.4 330.4 L931.3 323.1 L929.9 316.0 L927.4 308.9 L923.9 302.0 L919.1 295.4 L913.2 289.0Z" fill="#561a4a"/>
<path d="M928.6 343.4 L928.0 344.5 L927.5 345.7 L927.1 346.9 L926.7 348.1 L926.2 349.3 L925.9 350.6 L925.6 351.8 L926.1 352.0 L926.8 350.9 L927.4 349.7 L927.9 348.5 L928.3 347.3 L928.7 346.1 L928.9 344.8 L929.1 343.5Z" fill="#561a4a"/>
<path d="M742.0 228.0 L734.9 230.7 L728.2 233.7 L721.7 236.9 L715.6 240.5 L709.9 244.3 L704.4 248.4 L699.3 252.6 L694.4 257.0 L689.9 261.7 L685.7 266.6 L682.0 271.8 L678.6 277.1 L675.6 282.7 L676.0 283.0 L679.6 277.8 L683.4 272.8 L687.4 268.0 L691.7 263.4 L696.1 258.8 L700.9 254.5 L705.9 250.3 L711.3 246.3 L716.9 242.5 L722.8 238.8 L729.0 235.2 L735.5 231.8 L742.2 228.4Z" fill="#561a4a"/>
<path d="M851.6 226.7 L857.0 229.1 L862.3 231.5 L867.3 233.9 L872.3 236.3 L877.0 238.7 L881.6 241.2 L886.1 243.8 L890.3 246.4 L894.4 249.2 L898.3 251.9 L902.2 254.7 L905.9 257.5 L909.5 260.3 L909.8 260.0 L906.7 256.6 L903.3 253.3 L899.6 250.2 L895.8 247.2 L891.6 244.4 L887.3 241.7 L882.8 239.1 L878.2 236.6 L873.3 234.1 L868.2 231.9 L862.9 229.9 L857.5 227.9 L851.8 226.2Z" fill="#561a4a"/>
<path d="M758.6 222.8 L750.5 225.5 L742.7 228.5 L735.2 231.8 L728.1 235.4 L721.3 239.4 L714.9 243.6 L708.8 248.0 L703.0 252.7 L697.6 257.7 L692.6 262.9 L688.0 268.4 L683.8 274.2 L680.0 280.2 L680.4 280.5 L684.6 274.8 L689.1 269.4 L693.9 264.1 L699.0 259.1 L704.3 254.2 L710.0 249.6 L716.0 245.2 L722.3 241.1 L729.0 237.2 L736.0 233.4 L743.2 229.8 L750.9 226.4 L758.8 223.2Z" fill="#561a4a"/>
<path d="M847.1 226.0 L854.5 229.0 L861.5 232.2 L868.3 235.5 L874.7 238.9 L880.9 242.3 L886.7 246.0 L892.3 249.8 L897.6 253.7 L902.5 257.9 L907.2 262.1 L911.7 266.4 L915.9 271.0 L919.8 275.7 L920.2 275.3 L916.5 270.4 L912.6 265.6 L908.3 261.0 L903.6 256.6 L898.6 252.4 L893.3 248.4 L887.7 244.6 L881.7 240.9 L875.5 237.4 L868.9 234.1 L862.0 231.1 L854.8 228.2 L847.3 225.6Z" fill="#561a4a"/>
<path d="M743.3 230.0 L737.2 232.5 L731.4 235.4 L725.7 238.5 L720.3 241.8 L715.2 245.4 L710.3 249.2 L705.5 253.2 L701.0 257.3 L696.7 261.6 L692.7 266.2 L689.0 270.9 L685.5 275.9 L682.4 281.1 L682.8 281.4 L686.6 276.7 L690.4 272.1 L694.4 267.7 L698.6 263.4 L702.8 259.2 L707.2 255.1 L711.9 251.2 L716.7 247.5 L721.8 244.0 L726.9 240.4 L732.3 237.0 L737.8 233.7 L743.5 230.4Z" fill="#561a4a"/>
<path d="M859.9 232.2 L866.6 235.7 L873.0 239.4 L879.2 243.2 L885.1 247.1 L890.7 251.1 L896.1 255.3 L901.1 259.7 L905.9 264.2 L910.4 268.9 L914.7 273.7 L918.8 278.7 L922.6 283.9 L926.1 289.2 L926.5 288.9 L923.3 283.4 L919.8 278.0 L915.9 272.7 L911.7 267.7 L907.2 263.0 L902.3 258.4 L897.2 253.9 L891.8 249.7 L886.0 245.6 L880.0 241.9 L873.6 238.3 L867.0 234.9 L860.1 231.8Z" fill="#561a4a"/>
<path d="M752.9 226.5 L746.5 229.1 L740.2 232.0 L734.2 235.2 L728.4 238.6 L722.8 242.3 L717.5 246.3 L712.4 250.4 L707.4 254.7 L702.7 259.2 L698.2 264.0 L694.0 269.0 L690.1 274.3 L686.4 279.7 L686.8 280.0 L691.0 275.0 L695.3 270.1 L699.7 265.4 L704.3 260.8 L708.9 256.4 L713.8 252.1 L718.9 248.1 L724.2 244.2 L729.6 240.5 L735.2 236.9 L741.0 233.5 L747.0 230.1 L753.1 226.9Z" fill="#561a4a"/>
<path d="M860.4 233.5 L866.9 237.2 L873.2 241.1 L879.2 245.1 L885.0 249.2 L890.6 253.5 L895.9 257.9 L901.0 262.5 L905.8 267.3 L910.3 272.3 L914.7 277.4 L918.9 282.7 L922.8 288.1 L926.6 293.7 L927.0 293.5 L923.6 287.6 L919.9 281.9 L915.9 276.4 L911.6 271.1 L907.0 266.1 L902.2 261.3 L897.0 256.6 L891.6 252.1 L886.0 247.8 L880.1 243.8 L873.8 240.0 L867.4 236.4 L860.6 233.1Z" fill="#561a4a"/>
<path d="M742.4 232.5 L736.5 235.6 L730.8 239.0 L725.3 242.7 L720.0 246.6 L714.9 250.9 L710.0 255.3 L705.2 259.9 L700.6 264.8 L696.2 269.8 L692.1 275.1 L688.2 280.7 L684.5 286.4 L681.0 292.4 L681.4 292.7 L685.4 287.1 L689.5 281.6 L693.6 276.3 L697.9 271.2 L702.3 266.3 L706.8 261.5 L711.5 256.9 L716.3 252.5 L721.3 248.4 L726.4 244.3 L731.7 240.4 L737.1 236.6 L742.6 232.9Z" fill="#561a4a"/>
<path d="M867.1 238.3 L871.7 241.4 L876.2 244.6 L880.5 247.9 L884.7 251.3 L888.9 254.6 L893.0 258.1 L896.9 261.7 L900.7 265.5 L904.4 269.3 L908.1 273.1 L911.6 277.1 L915.1 281.1 L918.5 285.3 L918.9 285.0 L915.8 280.6 L912.6 276.3 L909.3 272.1 L905.8 268.0 L902.0 264.2 L898.2 260.4 L894.2 256.8 L890.1 253.2 L885.9 249.8 L881.4 246.6 L876.9 243.5 L872.2 240.6 L867.4 237.8Z" fill="#561a4a"/>
<ellipse cx="670" cy="280" rx="11" ry="15" fill="#561a4a" transform="rotate(25 670 280)"/>
<circle cx="665" cy="277" r="3" fill="#ee6c29"/><circle cx="674" cy="271" r="2.2" fill="#ee6c29"/><circle cx="671" cy="287" r="2.5" fill="#ee6c29"/>
<path d="M655.0 291.8 L646.5 292.5 L638.1 293.7 L630.0 295.2 L622.0 297.0 L614.1 299.2 L606.5 301.6 L599.0 304.2 L591.6 307.1 L584.4 310.2 L577.4 313.6 L570.7 317.4 L564.1 321.4 L557.9 325.8 L558.1 326.2 L565.0 322.8 L571.8 319.5 L578.7 316.3 L585.8 313.2 L592.9 310.2 L600.1 307.4 L607.5 304.8 L615.1 302.4 L622.8 300.3 L630.6 298.1 L638.6 296.1 L646.8 294.2 L655.0 292.2Z" fill="#561a4a"/>
<path d="M651.9 293.8 L644.3 297.1 L636.8 301.2 L629.5 305.9 L622.1 311.2 L615.0 317.2 L607.9 323.7 L600.9 330.7 L593.8 338.1 L586.9 346.1 L580.1 354.7 L573.5 363.9 L567.0 373.5 L560.8 383.9 L561.2 384.1 L568.6 374.7 L575.7 365.5 L582.8 356.8 L589.8 348.6 L596.7 340.8 L603.7 333.4 L610.6 326.5 L617.6 320.1 L624.6 314.3 L631.5 308.7 L638.4 303.5 L645.3 298.8 L652.1 294.2Z" fill="#561a4a"/>
<path d="M649.9 295.8 L644.9 297.1 L639.8 298.3 L634.8 299.4 L629.8 300.2 L624.8 301.0 L619.7 301.5 L614.6 301.8 L609.5 301.9 L604.3 301.7 L599.1 301.5 L593.8 301.1 L588.5 300.5 L583.1 299.8 L582.9 300.2 L588.2 301.8 L593.6 302.9 L598.9 303.8 L604.2 304.3 L609.5 304.5 L614.7 304.4 L619.9 304.1 L625.1 303.6 L630.3 302.8 L635.3 301.6 L640.3 300.1 L645.3 298.4 L650.1 296.2Z" fill="#561a4a"/>
<path d="M647.8 299.8 L640.3 305.7 L633.1 311.9 L626.2 318.4 L619.6 325.1 L613.4 332.1 L607.5 339.2 L601.8 346.6 L596.5 354.1 L591.4 361.8 L586.7 369.8 L582.3 377.9 L578.3 386.3 L574.8 394.9 L575.2 395.1 L579.6 386.9 L584.1 378.9 L588.8 371.0 L593.8 363.3 L598.8 355.7 L604.1 348.3 L609.7 341.0 L615.6 333.9 L621.7 327.0 L628.0 320.1 L634.5 313.4 L641.2 306.8 L648.2 300.2Z" fill="#561a4a"/>
<path d="M649.8 296.8 L643.7 302.2 L638.3 308.3 L633.2 314.7 L628.4 321.5 L623.9 328.7 L619.9 336.2 L616.3 343.9 L613.0 351.9 L610.1 360.0 L607.6 368.3 L605.4 376.8 L603.7 385.5 L602.5 394.2 L601.7 403.1 L601.4 412.1 L601.6 421.2 L602.4 430.3 L609.6 429.7 L608.8 420.8 L608.5 412.1 L608.8 403.6 L609.6 395.1 L610.8 386.7 L612.4 378.4 L614.4 370.3 L616.9 362.3 L619.7 354.4 L622.8 346.8 L626.3 339.3 L630.1 332.1 L633.8 324.8 L637.8 317.8 L641.9 310.9 L646.2 304.1 L650.2 297.2Z" fill="#561a4a"/>
<path d="M602.5 430.6 L603.2 435.0 L604.1 439.1 L605.0 443.0 L606.0 446.8 L607.1 450.3 L608.3 453.6 L609.5 456.8 L610.9 459.8 L612.2 462.6 L613.7 465.3 L615.2 467.8 L616.8 470.2 L618.8 472.2 L620.8 474.1 L622.9 475.8 L625.1 477.3 L627.8 478.2 L628.2 477.8 L627.4 475.1 L626.2 472.9 L625.0 470.6 L623.8 468.4 L622.7 466.2 L621.3 464.0 L619.9 461.7 L618.6 459.3 L617.3 456.7 L616.1 454.0 L615.0 451.1 L613.9 448.1 L612.9 444.8 L611.9 441.3 L611.1 437.6 L610.3 433.6 L609.5 429.4Z" fill="#561a4a"/>
<path d="M642.8 307.9 L637.3 316.5 L632.7 325.6 L628.8 334.8 L625.6 344.1 L622.9 353.4 L621.1 362.9 L619.9 372.3 L619.3 381.7 L619.3 391.0 L619.9 400.2 L621.1 409.3 L622.9 418.2 L625.3 426.9 L628.2 435.5 L631.8 443.8 L636.0 451.8 L640.7 459.4 L645.3 456.6 L640.7 449.1 L636.7 441.4 L633.3 433.5 L630.5 425.3 L628.2 417.0 L626.5 408.4 L625.4 399.7 L624.8 390.8 L624.8 381.9 L625.4 372.8 L626.5 363.7 L628.2 354.6 L630.2 345.4 L632.8 336.1 L635.9 326.9 L639.4 317.6 L643.2 308.1Z" fill="#561a4a"/>
<path d="M641.0 459.9 L642.6 461.6 L644.3 463.3 L646.0 464.9 L647.8 466.5 L649.6 467.9 L651.4 469.3 L653.3 470.6 L655.2 471.8 L657.1 472.9 L659.1 473.9 L661.2 474.9 L663.3 475.7 L665.5 476.2 L667.8 476.6 L670.1 476.8 L672.5 476.8 L675.0 476.2 L675.0 475.8 L673.0 474.4 L670.9 473.5 L669.0 472.6 L667.1 471.6 L665.2 470.7 L663.4 469.9 L661.5 469.0 L659.7 468.1 L658.0 467.1 L656.3 466.0 L654.6 464.9 L652.9 463.6 L651.3 462.3 L649.7 460.9 L648.1 459.4 L646.6 457.8 L645.0 456.1Z" fill="#561a4a"/>
<path d="M645.8 303.9 L642.2 310.2 L638.8 316.8 L635.5 323.8 L632.4 331.0 L629.4 338.5 L626.7 346.2 L624.1 354.1 L621.7 362.2 L619.5 370.5 L617.5 378.8 L615.7 387.3 L614.1 396.0 L613.0 404.7 L612.1 413.5 L611.6 422.3 L611.4 431.2 L611.8 440.0 L612.2 440.0 L612.9 431.2 L613.7 422.5 L614.7 413.7 L616.0 405.1 L617.4 396.5 L619.0 388.0 L620.8 379.6 L622.8 371.3 L625.0 363.1 L627.4 355.1 L629.9 347.3 L632.6 339.6 L635.2 332.1 L637.9 324.8 L640.7 317.7 L643.5 310.8 L646.2 304.1Z" fill="#561a4a"/>
<path d="M632.8 342.1 L633.5 348.3 L635.1 354.0 L637.2 359.2 L639.7 363.7 L642.6 367.7 L645.8 370.9 L649.3 373.6 L652.8 375.6 L656.4 377.1 L659.9 377.9 L663.4 378.2 L666.7 377.8 L669.6 376.5 L672.1 374.6 L674.0 372.2 L675.1 369.3 L675.2 366.1 L674.8 365.9 L673.2 368.5 L671.6 370.5 L669.9 371.9 L667.9 372.8 L665.7 373.2 L663.3 373.5 L660.7 373.3 L657.8 372.6 L654.9 371.4 L651.9 369.7 L648.9 367.4 L646.0 364.6 L643.1 361.3 L640.3 357.4 L637.8 352.9 L635.5 347.7 L633.2 341.9Z" fill="#561a4a"/>
<path d="M675.2 365.9 L675.1 363.0 L674.4 360.2 L673.4 357.5 L672.1 354.9 L670.5 352.6 L668.5 350.5 L666.4 348.7 L664.1 347.1 L661.6 345.8 L659.0 344.7 L656.3 344.0 L653.5 343.5 L650.7 343.6 L647.9 344.0 L645.1 344.8 L642.4 346.0 L639.9 347.8 L640.1 348.2 L643.0 347.5 L645.6 347.0 L648.2 346.8 L650.7 346.8 L653.2 347.1 L655.5 347.5 L657.8 348.2 L660.1 349.1 L662.2 350.2 L664.2 351.6 L666.0 353.2 L667.8 354.9 L669.4 356.8 L671.0 358.8 L672.3 361.1 L673.6 363.5 L674.8 366.1Z" fill="#561a4a"/>
<path d="M627.8 356.1 L628.5 359.1 L629.7 361.9 L631.1 364.6 L632.7 367.1 L634.5 369.5 L636.7 371.7 L638.9 373.8 L641.4 375.7 L643.9 377.4 L646.6 379.0 L649.4 380.4 L652.3 381.6 L655.3 382.6 L658.4 383.4 L661.5 383.9 L664.7 384.2 L668.0 384.2 L668.0 383.8 L665.0 382.9 L662.0 382.0 L659.0 381.1 L656.2 380.0 L653.4 378.8 L650.7 377.6 L648.1 376.2 L645.6 374.8 L643.2 373.1 L640.9 371.4 L638.8 369.5 L636.8 367.5 L634.9 365.4 L633.1 363.2 L631.4 360.9 L629.8 358.5 L628.2 355.9Z" fill="#561a4a"/>
<path d="M620.8 387.1 L621.9 392.1 L623.8 396.7 L626.2 400.9 L629.1 404.6 L632.3 407.9 L636.1 410.7 L640.1 413.1 L644.4 415.1 L648.8 416.7 L653.4 418.1 L658.2 419.1 L663.1 419.8 L668.0 420.1 L673.1 420.1 L678.1 419.9 L683.1 419.3 L688.0 418.2 L688.0 417.8 L683.0 417.2 L678.1 416.9 L673.2 416.5 L668.4 416.0 L663.7 415.2 L659.0 414.5 L654.6 413.5 L650.3 412.3 L646.2 410.8 L642.3 408.9 L638.7 406.8 L635.3 404.4 L632.0 401.7 L629.0 398.7 L626.3 395.2 L623.7 391.3 L621.2 386.9Z" fill="#561a4a"/>
<path d="M614.8 401.1 L616.0 407.9 L618.0 414.1 L620.5 419.8 L623.4 424.9 L626.7 429.5 L630.5 433.4 L634.7 436.8 L639.0 439.8 L643.6 442.2 L648.3 444.3 L653.2 446.0 L658.2 447.2 L663.3 448.0 L668.5 448.4 L673.7 448.4 L678.9 448.1 L684.0 447.2 L684.0 446.8 L678.9 446.0 L673.8 445.5 L668.8 444.8 L664.0 443.9 L659.2 442.7 L654.5 441.5 L650.0 439.9 L645.6 438.0 L641.4 435.8 L637.5 433.1 L633.7 430.0 L630.2 426.4 L626.8 422.5 L623.6 418.0 L620.7 412.9 L617.9 407.2 L615.2 400.9Z" fill="#561a4a"/>
<path d="M622.8 435.1 L624.4 440.0 L626.6 444.5 L629.2 448.6 L632.1 452.4 L635.3 455.8 L638.9 458.7 L642.7 461.3 L646.7 463.6 L650.9 465.6 L655.3 467.3 L659.9 468.7 L664.6 469.8 L669.4 470.5 L674.4 470.9 L679.5 471.0 L684.7 470.9 L690.0 470.2 L690.0 469.8 L684.8 468.9 L679.7 468.3 L674.8 467.5 L670.1 466.6 L665.5 465.5 L661.0 464.4 L656.8 463.1 L652.7 461.5 L648.8 459.7 L645.0 457.6 L641.5 455.2 L638.2 452.5 L634.9 449.7 L631.9 446.5 L628.9 443.0 L626.1 439.1 L623.2 434.9Z" fill="#561a4a"/>
<path d="M617.8 420.1 L619.3 425.0 L621.2 429.5 L623.5 433.6 L626.0 437.4 L628.8 440.9 L632.0 443.9 L635.3 446.6 L638.9 448.9 L642.7 451.0 L646.7 452.8 L650.9 454.4 L655.3 455.7 L659.9 456.6 L664.7 457.4 L669.6 457.9 L674.7 458.2 L680.0 458.2 L680.0 457.8 L674.8 457.0 L669.9 456.1 L665.1 455.2 L660.5 454.2 L656.1 453.0 L651.9 451.7 L647.8 450.2 L644.0 448.5 L640.4 446.5 L637.0 444.2 L633.8 441.7 L630.9 438.9 L628.0 435.8 L625.3 432.4 L622.8 428.6 L620.5 424.5 L618.2 419.9Z" fill="#561a4a"/>
<path d="M674.8 302.0 L673.1 310.6 L672.0 319.8 L671.3 329.4 L670.9 339.4 L670.7 349.8 L671.0 360.6 L671.6 371.8 L672.4 383.3 L673.5 395.2 L674.8 407.4 L676.4 419.9 L678.2 432.7 L680.6 445.7 L683.3 459.0 L686.3 472.5 L689.7 486.2 L693.8 500.1 L694.2 499.9 L691.9 485.7 L689.5 471.9 L687.2 458.3 L685.1 445.0 L683.3 431.9 L681.5 419.2 L680.0 406.8 L678.6 394.7 L677.6 382.9 L676.8 371.5 L676.2 360.4 L675.9 349.7 L675.5 339.4 L675.3 329.4 L675.3 319.9 L675.4 310.8 L675.2 302.0Z" fill="#561a4a"/>
<path d="M681.8 300.0 L681.7 309.1 L681.8 318.5 L682.1 328.2 L682.4 338.2 L682.8 348.4 L683.5 358.8 L684.2 369.3 L685.0 379.8 L685.9 390.4 L686.9 401.0 L687.9 411.5 L689.1 421.9 L690.5 432.1 L692.1 442.1 L693.7 451.7 L695.6 461.1 L697.8 470.0 L698.2 470.0 L697.0 460.9 L695.7 451.4 L694.4 441.7 L693.3 431.7 L692.2 421.5 L691.0 411.2 L690.0 400.7 L689.0 390.2 L688.1 379.6 L687.3 369.0 L686.6 358.6 L685.9 348.2 L685.2 338.0 L684.5 328.1 L683.8 318.4 L683.1 309.0 L682.2 300.0Z" fill="#561a4a"/>
<path d="M661.8 309.9 L659.4 318.6 L657.5 327.1 L655.9 335.3 L654.6 343.3 L653.6 351.1 L653.0 358.7 L652.7 365.9 L652.6 372.9 L652.8 379.6 L653.3 386.0 L654.1 392.0 L655.1 397.7 L656.5 403.0 L658.1 407.9 L660.0 412.5 L662.3 416.6 L664.8 420.1 L665.2 419.9 L663.4 416.0 L661.7 411.8 L660.2 407.2 L658.9 402.4 L657.8 397.1 L656.9 391.6 L656.2 385.7 L655.7 379.4 L655.5 372.9 L655.5 366.0 L655.8 358.8 L656.4 351.4 L657.1 343.7 L658.0 335.6 L659.2 327.4 L660.6 318.8 L662.2 310.1Z" fill="#561a4a"/>
<rect x="919.5" y="265" width="8" height="30" rx="4" stroke="#561a4a" stroke-width="3.2" fill="none"/>
<rect x="930.5" y="265" width="8" height="30" rx="4" stroke="#561a4a" stroke-width="3.2" fill="none"/>
<rect x="941.5" y="265" width="8" height="30" rx="4" stroke="#561a4a" stroke-width="3.2" fill="none"/>
<path d="M919.9 294.2 L921.2 296.4 L923.1 298.1 L925.3 299.6 L927.7 300.7 L930.2 301.7 L932.9 302.2 L935.6 302.5 L938.3 302.5 L941.1 302.3 L943.7 301.9 L946.3 301.2 L948.8 300.2 L951.1 298.8 L953.0 297.0 L954.7 295.0 L955.9 292.7 L956.2 290.1 L955.8 289.9 L953.7 291.2 L952.0 292.5 L950.3 293.5 L948.4 294.3 L946.5 294.9 L944.6 295.6 L942.5 296.1 L940.4 296.5 L938.2 296.6 L935.9 296.6 L933.7 296.4 L931.4 296.0 L929.2 295.8 L926.9 295.4 L924.7 294.8 L922.6 294.2 L920.1 293.8Z" fill="#561a4a"/>
<path d="M952.8 288.2 L958.4 293.2 L963.9 298.0 L969.3 302.5 L974.5 306.8 L979.7 310.9 L984.8 314.9 L989.6 318.7 L994.3 322.5 L998.7 326.1 L1003.2 329.4 L1007.5 332.5 L1011.7 335.5 L1015.8 338.2 L1016.2 337.8 L1012.8 334.2 L1009.0 330.7 L1005.1 327.1 L1000.9 323.4 L996.4 319.8 L991.7 316.1 L986.9 312.2 L981.8 308.3 L976.6 304.2 L971.1 300.1 L965.4 296.0 L959.4 291.9 L953.2 287.8Z" fill="#561a4a"/>
<path d="M950.8 291.1 L955.4 300.1 L960.3 308.9 L965.2 317.6 L969.9 326.3 L974.4 335.0 L978.9 343.5 L983.1 352.0 L987.0 360.5 L990.4 369.0 L993.5 377.3 L996.1 385.6 L998.3 393.8 L1000.3 401.8 L1001.8 409.7 L1002.8 417.5 L1003.3 425.2 L1003.8 433.0 L1004.2 433.0 L1006.2 425.4 L1006.8 417.4 L1006.7 409.2 L1006.0 400.8 L1004.6 392.3 L1002.4 383.8 L999.7 375.2 L996.5 366.6 L992.9 357.9 L989.0 349.2 L984.7 340.5 L980.0 331.9 L974.9 323.4 L969.5 315.0 L963.8 306.7 L957.8 298.6 L951.2 290.9Z" fill="#561a4a"/>
<path d="M944.8 309.1 L947.3 319.8 L950.2 330.4 L953.0 340.9 L955.7 351.5 L958.2 362.1 L960.7 372.7 L962.9 383.4 L964.9 394.2 L966.6 405.1 L967.9 416.2 L968.9 427.5 L969.4 438.9 L969.9 450.6 L969.9 462.5 L969.4 474.6 L968.6 487.1 L967.8 500.0 L968.2 500.0 L971.0 487.4 L972.9 474.9 L974.0 462.7 L974.7 450.6 L974.8 438.8 L974.3 427.1 L973.3 415.7 L972.0 404.4 L970.3 393.3 L968.3 382.3 L966.0 371.5 L963.4 360.8 L960.3 350.2 L957.0 339.7 L953.4 329.3 L949.6 319.0 L945.2 308.9Z" fill="#561a4a"/>
<path d="M955.9 300.2 L960.5 304.5 L965.1 308.9 L969.6 313.6 L973.9 318.7 L978.1 324.3 L982.2 330.1 L986.1 336.4 L989.7 343.2 L993.2 350.5 L996.4 358.2 L999.3 366.5 L1001.9 375.3 L1004.4 384.5 L1006.6 394.3 L1008.5 404.6 L1010.2 415.5 L1011.8 427.0 L1012.2 427.0 L1012.0 415.4 L1011.1 404.3 L1009.7 393.7 L1008.0 383.7 L1005.9 374.2 L1003.2 365.2 L1000.2 356.7 L997.0 348.8 L993.5 341.3 L989.7 334.3 L985.6 327.8 L981.3 321.8 L976.7 316.3 L971.9 311.4 L966.8 306.9 L961.6 303.0 L956.1 299.8Z" fill="#561a4a"/>
<path d="M1011.8 427.0 L1010.6 432.6 L1009.7 438.0 L1008.7 443.1 L1007.6 448.0 L1006.4 452.6 L1005.3 457.1 L1004.2 461.5 L1002.9 465.7 L1001.6 469.8 L1000.2 473.7 L998.8 477.5 L997.4 481.3 L996.1 485.0 L994.9 488.7 L993.7 492.4 L992.6 496.1 L991.8 499.9 L992.2 500.1 L994.3 496.8 L996.1 493.4 L997.8 489.9 L999.6 486.4 L1001.2 482.8 L1002.7 479.0 L1004.2 475.1 L1005.6 471.1 L1006.9 466.9 L1008.2 462.6 L1009.3 458.2 L1010.4 453.5 L1011.2 448.6 L1011.8 443.6 L1012.3 438.3 L1012.5 432.8 L1012.2 427.0Z" fill="#561a4a"/>
<path d="M925.8 322.1 L926.3 325.6 L927.7 328.5 L929.3 331.1 L931.2 333.4 L933.3 335.4 L935.7 336.8 L938.2 337.9 L940.9 338.6 L943.5 338.9 L946.2 338.9 L948.9 338.4 L951.5 337.5 L953.8 336.0 L955.9 334.1 L957.8 331.9 L959.4 329.3 L960.2 326.2 L959.8 325.8 L957.0 327.3 L954.8 328.6 L952.7 329.7 L950.7 330.5 L948.9 331.0 L947.2 331.5 L945.5 331.7 L943.9 331.8 L942.2 331.6 L940.6 331.1 L938.9 330.4 L937.2 329.5 L935.2 328.5 L933.2 327.2 L931.1 325.7 L929.0 323.8 L926.2 321.9Z" fill="#561a4a"/>
<path d="M923.8 343.2 L925.4 345.3 L927.3 347.1 L929.3 348.6 L931.5 350.0 L933.8 351.2 L936.2 352.0 L938.7 352.6 L941.2 353.0 L943.7 353.2 L946.2 353.3 L948.7 353.1 L951.2 352.8 L953.6 352.0 L956.0 351.0 L958.2 349.7 L960.3 348.2 L962.1 346.2 L961.9 345.8 L959.4 346.4 L957.1 347.1 L954.8 347.7 L952.6 348.1 L950.4 348.3 L948.3 348.6 L946.1 348.7 L943.9 348.7 L941.8 348.5 L939.6 348.1 L937.5 347.6 L935.3 346.9 L933.2 346.3 L931.0 345.6 L928.8 344.7 L926.6 343.7 L924.2 342.8Z" fill="#561a4a"/>
<path d="M921.8 380.2 L923.7 382.8 L925.9 385.0 L928.3 387.1 L930.8 388.9 L933.4 390.4 L936.1 391.7 L938.9 392.6 L941.8 393.4 L944.6 394.0 L947.5 394.3 L950.4 394.4 L953.2 394.3 L956.1 393.7 L958.8 392.8 L961.4 391.7 L963.9 390.2 L966.1 388.2 L965.9 387.8 L963.1 388.4 L960.5 389.0 L957.9 389.4 L955.4 389.7 L952.9 389.8 L950.4 389.9 L947.8 389.8 L945.3 389.5 L942.8 389.0 L940.3 388.3 L937.8 387.4 L935.3 386.4 L932.7 385.3 L930.2 384.1 L927.6 382.7 L925.0 381.3 L922.2 379.8Z" fill="#561a4a"/>
<path d="M919.8 397.2 L921.5 400.4 L923.6 403.3 L925.9 405.9 L928.3 408.3 L931.0 410.3 L933.8 412.0 L936.7 413.4 L939.7 414.5 L942.7 415.4 L945.9 416.0 L949.0 416.4 L952.3 416.6 L955.5 416.3 L958.7 415.7 L961.9 414.9 L965.0 413.8 L968.1 412.2 L967.9 411.8 L964.6 412.1 L961.4 412.5 L958.3 412.7 L955.3 412.8 L952.3 412.7 L949.4 412.5 L946.5 412.2 L943.7 411.6 L940.9 410.8 L938.2 409.8 L935.6 408.6 L933.0 407.1 L930.4 405.5 L927.9 403.7 L925.4 401.6 L922.8 399.3 L920.2 396.8Z" fill="#561a4a"/>
<path d="M908.8 403.1 L909.2 407.2 L910.5 411.1 L912.3 414.8 L914.5 418.3 L917.3 421.5 L920.5 424.4 L924.1 427.1 L928.1 429.5 L932.3 431.8 L936.9 433.8 L941.7 435.7 L946.9 437.4 L952.4 438.6 L958.1 439.7 L964.1 440.6 L970.4 441.2 L977.0 441.2 L977.0 440.8 L970.8 438.9 L964.8 437.4 L959.0 435.8 L953.5 434.2 L948.4 432.4 L943.5 430.8 L938.9 429.0 L934.6 427.1 L930.7 425.0 L927.0 422.8 L923.8 420.4 L920.8 417.8 L918.1 415.3 L915.6 412.5 L913.3 409.6 L911.3 406.3 L909.2 402.9Z" fill="#561a4a"/>
<path d="M903.8 427.1 L904.6 431.4 L906.2 435.3 L908.2 439.0 L910.6 442.5 L913.4 445.7 L916.7 448.6 L920.3 451.1 L924.3 453.4 L928.5 455.5 L933.1 457.3 L938.0 458.9 L943.2 460.3 L948.7 461.2 L954.6 461.9 L960.7 462.4 L967.2 462.6 L974.0 462.2 L974.0 461.8 L967.4 460.5 L961.1 459.5 L955.1 458.4 L949.5 457.2 L944.3 455.8 L939.3 454.4 L934.7 452.9 L930.4 451.2 L926.5 449.3 L922.8 447.2 L919.6 444.9 L916.6 442.4 L913.7 439.8 L911.1 436.9 L908.7 433.9 L906.5 430.5 L904.2 426.9Z" fill="#561a4a"/>
<path d="M901.8 450.1 L903.2 453.9 L905.3 457.4 L907.8 460.7 L910.7 463.8 L914.0 466.7 L917.7 469.2 L921.6 471.5 L925.8 473.6 L930.2 475.5 L934.9 477.2 L939.7 478.7 L944.7 480.0 L949.9 480.9 L955.3 481.7 L960.7 482.2 L966.3 482.4 L972.0 482.2 L972.0 481.8 L966.5 480.7 L961.0 479.7 L955.7 478.7 L950.6 477.5 L945.6 476.2 L940.8 474.9 L936.1 473.5 L931.7 471.8 L927.4 470.0 L923.5 468.0 L919.7 465.9 L916.3 463.5 L913.0 461.2 L910.0 458.6 L907.2 455.9 L904.7 453.0 L902.2 449.9Z" fill="#561a4a"/>
<path d="M923.8 297.0 L923.7 303.0 L923.8 309.0 L924.0 315.0 L924.2 321.1 L924.2 327.3 L924.3 333.5 L924.3 339.7 L924.1 346.0 L923.8 352.3 L923.2 358.6 L922.5 364.9 L921.5 371.2 L920.6 377.5 L919.4 383.8 L918.0 390.1 L916.4 396.5 L914.8 402.9 L915.2 403.1 L918.3 397.1 L920.7 390.9 L922.8 384.7 L924.5 378.3 L926.0 371.9 L927.0 365.5 L927.8 359.0 L928.3 352.6 L928.7 346.2 L928.9 339.8 L928.9 333.4 L928.7 327.1 L928.2 320.9 L927.5 314.8 L926.7 308.7 L925.7 302.8 L924.2 297.0Z" fill="#561a4a"/>
<path d="M901.8 397.8 L898.7 400.0 L896.0 402.8 L893.6 406.0 L891.7 409.4 L890.1 413.1 L889.1 417.1 L888.5 421.1 L888.3 425.2 L888.4 429.4 L888.9 433.6 L889.8 437.7 L891.2 441.7 L893.1 445.6 L895.3 449.2 L898.0 452.6 L901.2 455.7 L904.8 458.2 L905.2 457.8 L902.5 454.4 L900.1 451.0 L898.1 447.5 L896.4 444.0 L895.0 440.3 L893.9 436.6 L893.0 432.9 L892.6 429.1 L892.4 425.3 L892.7 421.6 L893.2 417.9 L894.1 414.3 L895.1 410.9 L896.4 407.5 L898.1 404.3 L900.0 401.2 L902.2 398.2Z" fill="#561a4a"/>
<path d="M911.8 300.0 L912.4 308.9 L913.1 317.8 L913.5 326.5 L913.8 335.2 L913.8 343.9 L913.8 352.5 L913.5 361.0 L913.0 369.4 L912.3 377.7 L911.3 385.9 L910.1 394.0 L908.7 402.0 L907.2 409.8 L905.5 417.6 L903.7 425.1 L901.7 432.6 L899.8 439.9 L900.2 440.1 L903.4 433.1 L906.0 425.8 L908.4 418.3 L910.6 410.6 L912.5 402.7 L913.9 394.7 L915.2 386.5 L916.2 378.1 L916.9 369.7 L917.4 361.2 L917.7 352.5 L917.7 343.8 L917.3 335.1 L916.5 326.3 L915.5 317.5 L914.1 308.7 L912.2 300.0Z" fill="#561a4a"/>
<path d="M887.8 440.0 L888.1 445.3 L888.6 450.3 L889.2 455.1 L889.9 459.8 L890.6 464.2 L891.5 468.3 L892.5 472.3 L893.5 476.1 L894.5 479.7 L895.6 483.0 L896.7 486.2 L897.8 489.1 L899.1 491.8 L900.4 494.3 L901.8 496.5 L903.2 498.5 L904.8 500.1 L905.2 499.9 L904.3 497.8 L903.4 495.6 L902.4 493.3 L901.4 490.8 L900.4 488.1 L899.4 485.2 L898.3 482.1 L897.3 478.8 L896.3 475.3 L895.3 471.6 L894.3 467.7 L893.4 463.6 L892.4 459.3 L891.4 454.8 L890.4 450.0 L889.4 445.1 L888.2 440.0Z" fill="#561a4a"/>
<path d="M611.9 489.2 L614.8 490.2 L618.1 491.4 L622.0 492.7 L626.4 494.1 L631.1 495.6 L636.2 497.3 L641.6 499.0 L647.2 500.7 L653.0 502.5 L658.9 504.2 L665.0 505.9 L671.0 507.5 L677.0 509.1 L682.9 510.5 L688.7 511.8 L694.4 512.9 L699.7 513.8 L705.0 514.5 L710.3 515.2 L715.6 515.8 L721.0 516.4 L726.4 516.9 L731.8 517.3 L737.2 517.7 L742.6 518.0 L748.0 518.2 L753.4 518.3 L758.7 518.2 L763.9 518.1 L769.2 517.9 L774.3 517.6 L779.4 517.1 L784.4 516.5 L789.3 515.8 L795.2 514.6 L801.0 513.0 L806.8 511.2 L812.5 509.1 L818.0 506.7 L823.5 504.3 L828.9 501.8 L834.2 499.2 L839.4 496.7 L844.4 494.3 L849.4 492.0 L854.2 490.0 L858.9 488.2 L863.5 486.7 L869.3 485.2 L875.3 483.9 L881.2 482.9 L887.0 482.0 L892.6 481.3 L898.0 480.7 L903.0 480.2 L907.6 479.8 L911.8 479.5 L915.3 479.2 L918.2 478.8 L917.8 475.2 L914.9 475.5 L911.4 475.9 L907.3 476.2 L902.7 476.6 L897.6 477.1 L892.2 477.7 L886.5 478.4 L880.6 479.3 L874.5 480.4 L868.5 481.7 L862.5 483.3 L857.7 484.8 L852.9 486.6 L847.9 488.7 L842.9 491.0 L837.8 493.4 L832.6 495.9 L827.3 498.5 L822.0 501.0 L816.6 503.4 L811.1 505.7 L805.6 507.7 L800.0 509.6 L794.4 511.1 L788.7 512.2 L783.9 512.9 L779.0 513.5 L774.0 514.0 L769.0 514.3 L763.8 514.5 L758.6 514.6 L753.4 514.6 L748.1 514.5 L742.8 514.3 L737.4 514.1 L732.1 513.7 L726.7 513.3 L721.4 512.8 L716.0 512.2 L710.7 511.6 L705.5 510.9 L700.3 510.2 L694.9 509.5 L689.4 508.5 L683.6 507.3 L677.7 506.0 L671.7 504.6 L665.7 503.1 L659.7 501.6 L653.7 500.0 L647.9 498.4 L642.2 496.8 L636.8 495.3 L631.7 493.8 L626.9 492.4 L622.5 491.2 L618.5 490.2 L615.0 489.4 L612.1 488.8Z" fill="#561a4a"/>
<path d="M608.9 500.7 L611.7 501.6 L615.0 502.7 L618.7 503.9 L622.9 505.2 L627.5 506.6 L632.4 508.1 L637.6 509.6 L643.0 511.2 L648.6 512.8 L654.4 514.5 L660.2 516.1 L666.1 517.6 L672.0 519.1 L677.8 520.5 L683.6 521.8 L689.2 522.9 L694.6 523.9 L699.8 524.7 L705.1 525.4 L710.5 526.1 L715.8 526.6 L721.2 527.2 L726.6 527.6 L732.0 528.1 L737.4 528.4 L742.8 528.6 L748.2 528.8 L753.5 528.8 L758.8 528.8 L764.0 528.7 L769.2 528.4 L774.4 528.1 L779.4 527.6 L784.4 527.0 L789.3 526.2 L795.2 525.0 L801.0 523.5 L806.8 521.6 L812.4 519.5 L818.0 517.2 L823.5 514.7 L828.9 512.2 L834.2 509.7 L839.3 507.2 L844.4 504.8 L849.4 502.5 L854.2 500.5 L858.9 498.7 L863.5 497.2 L869.3 495.6 L875.3 494.3 L881.2 493.2 L887.0 492.3 L892.6 491.5 L898.0 490.9 L903.0 490.3 L907.6 489.9 L911.8 489.5 L915.3 489.1 L918.2 488.7 L917.8 485.3 L914.9 485.6 L911.4 486.0 L907.3 486.4 L902.7 486.9 L897.6 487.4 L892.2 488.0 L886.5 488.8 L880.6 489.8 L874.5 490.9 L868.5 492.2 L862.5 493.8 L857.8 495.4 L852.9 497.2 L848.0 499.3 L842.9 501.6 L837.8 504.0 L832.6 506.5 L827.4 509.0 L822.0 511.5 L816.6 514.0 L811.2 516.2 L805.6 518.3 L800.0 520.1 L794.4 521.6 L788.7 522.8 L783.9 523.5 L779.0 524.1 L774.1 524.6 L769.0 524.9 L763.9 525.2 L758.7 525.3 L753.5 525.4 L748.3 525.3 L743.0 525.1 L737.6 524.9 L732.3 524.6 L726.9 524.2 L721.6 523.7 L716.2 523.2 L710.9 522.6 L705.5 522.0 L700.2 521.3 L695.1 520.6 L689.8 519.7 L684.2 518.6 L678.5 517.5 L672.7 516.2 L666.8 514.8 L660.9 513.4 L655.0 511.9 L649.3 510.5 L643.6 509.0 L638.2 507.5 L632.9 506.1 L628.0 504.8 L623.4 503.6 L619.1 502.5 L615.3 501.6 L611.9 500.8 L609.1 500.3Z" fill="#561a4a"/>
<path d="M605.9 512.2 L608.8 513.1 L612.2 514.2 L616.1 515.4 L620.4 516.7 L625.2 518.0 L630.3 519.5 L635.7 521.0 L641.3 522.6 L647.1 524.2 L653.1 525.8 L659.1 527.4 L665.2 528.9 L671.3 530.3 L677.3 531.7 L683.2 533.0 L689.0 534.1 L694.5 535.0 L699.8 535.8 L705.2 536.5 L710.6 537.1 L716.0 537.7 L721.4 538.2 L726.9 538.6 L732.3 539.0 L737.7 539.3 L743.0 539.5 L748.4 539.6 L753.7 539.6 L758.9 539.6 L764.2 539.4 L769.3 539.1 L774.4 538.7 L779.5 538.2 L784.4 537.6 L789.3 536.8 L795.2 535.6 L801.1 534.0 L806.8 532.2 L812.5 530.0 L818.0 527.7 L823.5 525.3 L828.9 522.8 L834.2 520.3 L839.4 517.8 L844.5 515.4 L849.4 513.1 L854.2 511.1 L859.0 509.3 L863.5 507.8 L869.4 506.2 L875.3 504.8 L881.2 503.7 L887.0 502.7 L892.6 501.9 L898.0 501.2 L903.1 500.6 L907.7 500.1 L911.8 499.7 L915.4 499.2 L918.3 498.8 L917.7 495.2 L914.9 495.6 L911.4 496.0 L907.3 496.4 L902.6 496.9 L897.6 497.5 L892.1 498.2 L886.4 499.0 L880.5 500.0 L874.5 501.2 L868.5 502.6 L862.5 504.2 L857.7 505.8 L852.9 507.6 L847.9 509.7 L842.9 512.0 L837.8 514.4 L832.6 516.9 L827.3 519.5 L822.0 521.9 L816.6 524.3 L811.1 526.6 L805.6 528.7 L800.0 530.5 L794.4 532.0 L788.7 533.2 L783.9 533.9 L779.0 534.5 L774.1 535.0 L769.1 535.4 L764.0 535.7 L758.9 535.9 L753.7 535.9 L748.4 535.9 L743.1 535.8 L737.8 535.6 L732.5 535.3 L727.1 534.9 L721.8 534.5 L716.4 534.0 L711.0 533.4 L705.6 532.8 L700.2 532.2 L695.0 531.5 L689.6 530.6 L683.9 529.6 L678.0 528.5 L672.0 527.3 L665.9 525.9 L659.8 524.5 L653.7 523.1 L647.8 521.7 L641.9 520.2 L636.3 518.8 L630.8 517.5 L625.7 516.2 L620.9 515.0 L616.5 513.9 L612.5 513.0 L609.0 512.3 L606.1 511.8Z" fill="#561a4a"/>
<path d="M602.9 523.7 L605.7 524.6 L609.0 525.6 L612.8 526.7 L617.0 527.9 L621.5 529.2 L626.4 530.6 L631.6 532.0 L637.1 533.4 L642.7 534.9 L648.5 536.4 L654.4 537.9 L660.3 539.3 L666.3 540.7 L672.2 542.1 L678.0 543.3 L683.8 544.5 L689.3 545.5 L694.7 546.4 L699.7 547.0 L705.2 547.7 L710.7 548.3 L716.2 548.8 L721.6 549.2 L727.1 549.6 L732.5 550.0 L737.9 550.2 L743.2 550.4 L748.6 550.5 L753.8 550.5 L759.1 550.4 L764.3 550.2 L769.4 549.9 L774.5 549.5 L779.5 549.0 L784.5 548.3 L789.4 547.5 L795.3 546.3 L801.1 544.7 L806.9 542.8 L812.5 540.7 L818.1 538.4 L823.6 536.0 L829.0 533.5 L834.3 531.0 L839.5 528.5 L844.5 526.1 L849.5 523.8 L854.3 521.8 L859.0 520.0 L863.6 518.5 L869.4 516.9 L875.3 515.5 L881.2 514.3 L887.1 513.2 L892.7 512.4 L898.1 511.6 L903.1 511.0 L907.7 510.4 L911.9 509.9 L915.4 509.5 L918.3 509.0 L917.7 505.0 L914.9 505.4 L911.4 505.8 L907.2 506.3 L902.6 506.9 L897.5 507.5 L892.1 508.3 L886.4 509.2 L880.5 510.2 L874.5 511.4 L868.4 512.9 L862.4 514.5 L857.6 516.1 L852.8 518.0 L847.8 520.1 L842.8 522.4 L837.7 524.8 L832.5 527.2 L827.2 529.8 L821.9 532.2 L816.5 534.6 L811.0 536.9 L805.5 538.9 L799.9 540.8 L794.3 542.3 L788.6 543.5 L783.9 544.2 L779.0 544.9 L774.1 545.4 L769.1 545.8 L764.1 546.1 L759.0 546.3 L753.8 546.4 L748.6 546.4 L743.3 546.3 L738.0 546.1 L732.7 545.9 L727.4 545.5 L722.0 545.1 L716.6 544.7 L711.1 544.1 L705.7 543.6 L700.3 543.0 L695.2 542.3 L690.0 541.6 L684.5 540.7 L678.8 539.6 L672.9 538.5 L667.0 537.3 L661.1 536.1 L655.1 534.8 L649.2 533.4 L643.4 532.1 L637.7 530.8 L632.3 529.5 L627.0 528.3 L622.1 527.1 L617.4 526.0 L613.2 525.1 L609.3 524.3 L605.9 523.7 L603.1 523.3Z" fill="#561a4a"/>
<path d="M599.9 535.2 L602.6 536.1 L605.8 537.0 L609.5 538.1 L613.5 539.2 L618.0 540.3 L622.7 541.6 L627.7 542.9 L633.0 544.3 L638.5 545.6 L644.1 547.0 L649.8 548.4 L655.6 549.8 L661.5 551.1 L667.3 552.4 L673.1 553.6 L678.7 554.8 L684.3 555.8 L689.7 556.7 L694.8 557.5 L699.8 558.1 L705.3 558.7 L710.9 559.3 L716.4 559.8 L721.9 560.2 L727.3 560.6 L732.7 560.9 L738.1 561.1 L743.4 561.2 L748.7 561.3 L754.0 561.3 L759.2 561.1 L764.4 560.9 L769.5 560.6 L774.5 560.1 L779.5 559.6 L784.5 558.9 L789.4 558.1 L795.3 556.9 L801.1 555.3 L806.9 553.4 L812.6 551.3 L818.2 549.0 L823.6 546.6 L829.0 544.1 L834.3 541.6 L839.5 539.1 L844.6 536.7 L849.5 534.4 L854.4 532.4 L859.1 530.6 L863.6 529.1 L869.5 527.4 L875.4 526.0 L881.3 524.7 L887.1 523.7 L892.7 522.7 L898.1 521.9 L903.1 521.2 L907.8 520.6 L911.9 520.1 L915.5 519.6 L918.3 519.1 L917.7 514.9 L914.8 515.3 L911.3 515.8 L907.2 516.4 L902.6 517.0 L897.5 517.7 L892.1 518.5 L886.3 519.4 L880.4 520.5 L874.4 521.8 L868.4 523.3 L862.4 524.9 L857.6 526.5 L852.8 528.4 L847.8 530.5 L842.8 532.8 L837.7 535.2 L832.5 537.7 L827.2 540.2 L821.9 542.7 L816.5 545.0 L811.0 547.3 L805.5 549.3 L799.9 551.2 L794.3 552.7 L788.6 553.9 L783.9 554.7 L779.0 555.3 L774.1 555.9 L769.2 556.3 L764.1 556.6 L759.1 556.8 L753.9 557.0 L748.8 557.0 L743.5 556.9 L738.3 556.8 L732.9 556.6 L727.6 556.3 L722.2 555.9 L716.7 555.5 L711.3 555.0 L705.8 554.5 L700.2 553.9 L695.4 553.3 L690.3 552.6 L685.0 551.8 L679.5 550.9 L673.8 549.8 L668.0 548.8 L662.2 547.6 L656.4 546.4 L650.5 545.2 L644.8 544.0 L639.1 542.7 L633.7 541.5 L628.4 540.4 L623.3 539.2 L618.5 538.2 L614.0 537.2 L609.9 536.4 L606.2 535.7 L602.9 535.1 L600.1 534.8Z" fill="#561a4a"/>
<path d="M596.9 546.7 L599.8 547.5 L603.1 548.4 L606.8 549.4 L611.0 550.5 L615.6 551.6 L620.5 552.9 L625.7 554.1 L631.2 555.5 L636.8 556.8 L642.6 558.1 L648.6 559.5 L654.6 560.8 L660.6 562.1 L666.6 563.4 L672.5 564.6 L678.3 565.7 L684.0 566.7 L689.5 567.6 L694.8 568.3 L699.8 568.9 L705.4 569.5 L711.0 570.0 L716.6 570.4 L722.1 570.8 L727.6 571.2 L733.0 571.4 L738.3 571.6 L743.7 571.7 L748.9 571.7 L754.2 571.7 L759.3 571.5 L764.5 571.3 L769.5 570.9 L774.6 570.5 L779.5 569.9 L784.5 569.2 L789.4 568.4 L795.2 567.1 L801.1 565.5 L806.8 563.6 L812.5 561.5 L818.1 559.2 L823.5 556.8 L828.9 554.4 L834.2 551.8 L839.4 549.4 L844.5 547.0 L849.4 544.7 L854.3 542.7 L859.0 540.9 L863.6 539.3 L869.4 537.7 L875.3 536.2 L881.2 534.9 L887.1 533.8 L892.7 532.8 L898.1 531.9 L903.1 531.2 L907.7 530.5 L911.9 529.9 L915.4 529.4 L918.3 528.9 L917.7 525.1 L914.8 525.6 L911.3 526.1 L907.2 526.7 L902.6 527.4 L897.5 528.1 L892.1 529.0 L886.4 530.0 L880.5 531.2 L874.5 532.5 L868.4 534.0 L862.4 535.7 L857.7 537.3 L852.8 539.2 L847.9 541.3 L842.9 543.5 L837.8 545.9 L832.6 548.4 L827.3 550.9 L822.0 553.4 L816.6 555.7 L811.1 558.0 L805.6 560.0 L800.0 561.9 L794.3 563.4 L788.6 564.6 L783.9 565.4 L779.1 566.1 L774.2 566.7 L769.2 567.1 L764.2 567.5 L759.2 567.7 L754.1 567.9 L748.9 567.9 L743.7 567.9 L738.4 567.8 L733.1 567.6 L727.8 567.4 L722.3 567.0 L716.9 566.6 L711.4 566.2 L705.8 565.7 L700.2 565.1 L695.3 564.5 L690.1 563.9 L684.6 563.1 L678.9 562.2 L673.1 561.2 L667.2 560.1 L661.2 559.0 L655.2 557.8 L649.2 556.6 L643.2 555.4 L637.4 554.2 L631.7 553.0 L626.3 551.9 L621.0 550.8 L616.1 549.7 L611.4 548.8 L607.2 547.9 L603.3 547.2 L599.9 546.7 L597.1 546.3Z" fill="#561a4a"/>
<path d="M594.0 558.2 L596.7 559.1 L599.9 559.9 L603.5 560.9 L607.6 561.9 L612.0 563.0 L616.8 564.1 L621.8 565.3 L627.1 566.6 L632.6 567.8 L638.2 569.1 L644.0 570.4 L649.8 571.6 L655.7 572.9 L661.6 574.1 L667.5 575.2 L673.3 576.3 L679.0 577.4 L684.5 578.3 L689.8 579.1 L694.9 579.8 L699.8 580.3 L705.5 580.8 L711.2 581.3 L716.8 581.7 L722.3 582.1 L727.8 582.4 L733.2 582.6 L738.6 582.8 L743.9 582.8 L749.1 582.8 L754.3 582.7 L759.5 582.6 L764.6 582.3 L769.6 581.9 L774.7 581.4 L779.6 580.8 L784.5 580.1 L789.4 579.3 L795.3 578.0 L801.2 576.4 L806.9 574.5 L812.6 572.4 L818.2 570.1 L823.7 567.7 L829.1 565.2 L834.4 562.7 L839.6 560.3 L844.6 557.9 L849.6 555.6 L854.4 553.6 L859.1 551.7 L863.7 550.2 L869.5 548.5 L875.4 547.0 L881.3 545.6 L887.2 544.5 L892.8 543.4 L898.2 542.5 L903.2 541.7 L907.8 541.0 L912.0 540.4 L915.5 539.8 L918.4 539.3 L917.6 534.7 L914.8 535.3 L911.2 535.8 L907.1 536.5 L902.5 537.2 L897.4 538.0 L892.0 538.9 L886.3 540.0 L880.4 541.2 L874.4 542.5 L868.3 544.1 L862.3 545.8 L857.5 547.4 L852.7 549.3 L847.7 551.4 L842.7 553.7 L837.6 556.1 L832.4 558.6 L827.2 561.0 L821.8 563.5 L816.4 565.9 L811.0 568.1 L805.4 570.1 L799.9 572.0 L794.2 573.5 L788.6 574.7 L783.8 575.6 L779.0 576.3 L774.2 576.8 L769.3 577.3 L764.3 577.7 L759.3 578.0 L754.2 578.2 L749.1 578.3 L743.9 578.3 L738.7 578.2 L733.4 578.0 L728.0 577.8 L722.6 577.5 L717.1 577.2 L711.5 576.7 L705.9 576.2 L700.2 575.7 L695.5 575.2 L690.4 574.6 L685.2 573.9 L679.7 573.1 L674.0 572.2 L668.2 571.2 L662.4 570.2 L656.5 569.1 L650.6 568.1 L644.7 566.9 L638.9 565.8 L633.2 564.7 L627.7 563.6 L622.4 562.6 L617.3 561.6 L612.5 560.7 L608.0 559.8 L603.9 559.1 L600.2 558.5 L596.9 558.0 L594.0 557.8Z" fill="#561a4a"/>
<path d="M594.0 569.7 L596.7 570.5 L599.9 571.3 L603.6 572.2 L607.6 573.2 L612.1 574.2 L616.8 575.3 L621.9 576.5 L627.2 577.7 L632.6 578.9 L638.3 580.1 L644.1 581.4 L649.9 582.6 L655.8 583.8 L661.7 585.0 L667.6 586.1 L673.4 587.1 L679.0 588.1 L684.6 589.0 L689.9 589.8 L695.0 590.4 L699.8 590.9 L705.5 591.4 L711.2 591.9 L716.8 592.3 L722.3 592.6 L727.8 592.9 L733.2 593.1 L738.6 593.2 L743.9 593.2 L749.1 593.2 L754.3 593.0 L759.5 592.8 L764.6 592.5 L769.6 592.1 L774.6 591.6 L779.6 591.0 L784.5 590.2 L789.4 589.4 L795.3 588.1 L801.1 586.5 L806.8 584.6 L812.5 582.5 L818.1 580.2 L823.5 577.8 L828.9 575.4 L834.2 572.9 L839.4 570.4 L844.5 568.1 L849.4 565.8 L854.3 563.7 L859.0 561.9 L863.6 560.3 L869.4 558.6 L875.4 557.1 L881.3 555.7 L887.1 554.4 L892.7 553.3 L898.1 552.4 L903.2 551.5 L907.8 550.7 L911.9 550.1 L915.5 549.4 L918.4 548.9 L917.6 545.1 L914.8 545.7 L911.3 546.3 L907.2 546.9 L902.5 547.7 L897.5 548.6 L892.0 549.5 L886.3 550.7 L880.4 551.9 L874.4 553.3 L868.4 554.9 L862.4 556.7 L857.7 558.3 L852.8 560.2 L847.9 562.3 L842.9 564.6 L837.8 567.0 L832.6 569.4 L827.3 571.9 L822.0 574.3 L816.6 576.7 L811.1 578.9 L805.6 581.0 L800.0 582.8 L794.3 584.4 L788.6 585.6 L783.9 586.4 L779.1 587.2 L774.2 587.8 L769.3 588.3 L764.3 588.7 L759.3 589.0 L754.2 589.2 L749.1 589.3 L743.9 589.4 L738.6 589.3 L733.3 589.2 L728.0 589.0 L722.5 588.8 L717.0 588.4 L711.5 588.0 L705.9 587.6 L700.2 587.1 L695.4 586.6 L690.4 586.0 L685.1 585.3 L679.6 584.5 L673.9 583.6 L668.2 582.7 L662.3 581.7 L656.4 580.7 L650.5 579.6 L644.6 578.5 L638.8 577.4 L633.2 576.3 L627.7 575.2 L622.4 574.2 L617.3 573.2 L612.5 572.3 L608.0 571.4 L603.9 570.7 L600.2 570.1 L596.9 569.6 L594.0 569.3Z" fill="#561a4a"/>
<path d="M594.0 581.2 L596.7 582.0 L599.9 582.8 L603.6 583.7 L607.6 584.6 L612.1 585.7 L616.8 586.8 L621.9 587.9 L627.1 589.1 L632.6 590.3 L638.3 591.5 L644.0 592.7 L649.9 593.9 L655.8 595.1 L661.7 596.2 L667.6 597.3 L673.4 598.3 L679.0 599.3 L684.6 600.1 L689.9 600.9 L695.0 601.5 L699.8 602.0 L705.5 602.5 L711.2 602.9 L716.8 603.2 L722.3 603.5 L727.8 603.8 L733.2 603.9 L738.6 604.0 L743.9 604.0 L749.1 603.9 L754.3 603.8 L759.5 603.5 L764.6 603.2 L769.6 602.8 L774.6 602.2 L779.6 601.6 L784.5 600.8 L789.4 600.0 L795.3 598.7 L801.1 597.0 L806.8 595.1 L812.5 593.0 L818.1 590.8 L823.6 588.4 L829.0 585.9 L834.2 583.5 L839.4 581.0 L844.5 578.6 L849.5 576.4 L854.3 574.3 L859.0 572.5 L863.6 570.9 L869.5 569.1 L875.4 567.6 L881.3 566.1 L887.1 564.8 L892.8 563.7 L898.2 562.6 L903.2 561.7 L907.8 560.9 L912.0 560.2 L915.5 559.5 L918.4 559.0 L917.6 555.0 L914.8 555.6 L911.3 556.3 L907.1 557.0 L902.5 557.8 L897.4 558.7 L892.0 559.8 L886.3 560.9 L880.4 562.2 L874.4 563.7 L868.4 565.3 L862.4 567.1 L857.6 568.7 L852.8 570.6 L847.9 572.8 L842.8 575.0 L837.7 577.4 L832.6 579.9 L827.3 582.3 L822.0 584.7 L816.5 587.1 L811.1 589.3 L805.5 591.4 L799.9 593.2 L794.3 594.8 L788.6 596.0 L783.9 596.9 L779.0 597.6 L774.2 598.3 L769.3 598.8 L764.3 599.2 L759.3 599.6 L754.2 599.8 L749.1 600.0 L743.9 600.0 L738.6 600.0 L733.3 599.9 L728.0 599.8 L722.5 599.6 L717.0 599.3 L711.5 598.9 L705.9 598.5 L700.2 598.0 L695.4 597.5 L690.4 597.0 L685.1 596.3 L679.6 595.5 L673.9 594.7 L668.2 593.8 L662.3 592.8 L656.4 591.8 L650.5 590.8 L644.6 589.7 L638.8 588.6 L633.2 587.6 L627.7 586.5 L622.4 585.5 L617.3 584.6 L612.5 583.7 L608.0 582.8 L603.9 582.1 L600.2 581.5 L596.9 581.1 L594.0 580.8Z" fill="#561a4a"/>
<path d="M594.0 592.7 L596.7 593.4 L599.9 594.2 L603.6 595.0 L607.7 596.0 L612.1 597.0 L616.9 598.0 L621.9 599.1 L627.2 600.3 L632.7 601.4 L638.3 602.6 L644.1 603.8 L649.9 605.0 L655.8 606.1 L661.7 607.2 L667.6 608.3 L673.4 609.3 L679.1 610.2 L684.6 611.0 L689.9 611.7 L695.0 612.3 L699.9 612.8 L705.6 613.2 L711.2 613.6 L716.8 613.9 L722.4 614.2 L727.8 614.4 L733.2 614.5 L738.6 614.6 L743.9 614.5 L749.2 614.4 L754.3 614.2 L759.5 614.0 L764.6 613.6 L769.6 613.1 L774.6 612.6 L779.6 611.9 L784.5 611.1 L789.4 610.2 L795.2 608.9 L801.0 607.3 L806.8 605.4 L812.4 603.3 L818.0 601.1 L823.5 598.7 L828.9 596.2 L834.2 593.8 L839.3 591.3 L844.4 589.0 L849.4 586.7 L854.2 584.6 L859.0 582.8 L863.5 581.2 L869.4 579.4 L875.3 577.8 L881.3 576.3 L887.1 574.9 L892.7 573.7 L898.1 572.6 L903.2 571.7 L907.8 570.8 L911.9 570.0 L915.5 569.3 L918.4 568.7 L917.6 565.3 L914.8 565.9 L911.3 566.5 L907.2 567.3 L902.5 568.2 L897.4 569.2 L892.0 570.3 L886.3 571.5 L880.4 572.8 L874.5 574.3 L868.4 576.0 L862.5 577.8 L857.7 579.5 L852.9 581.4 L848.0 583.5 L842.9 585.7 L837.8 588.1 L832.7 590.6 L827.4 593.0 L822.0 595.4 L816.6 597.8 L811.1 600.0 L805.6 602.1 L800.0 603.9 L794.4 605.5 L788.6 606.8 L783.9 607.6 L779.1 608.4 L774.2 609.0 L769.3 609.6 L764.3 610.1 L759.3 610.4 L754.2 610.7 L749.1 610.9 L743.9 611.0 L738.6 611.0 L733.3 611.0 L727.9 610.8 L722.5 610.6 L717.0 610.4 L711.5 610.1 L705.8 609.7 L700.1 609.2 L695.4 608.8 L690.3 608.2 L685.1 607.6 L679.6 606.9 L673.9 606.0 L668.1 605.1 L662.3 604.2 L656.4 603.2 L650.5 602.2 L644.6 601.1 L638.8 600.1 L633.1 599.0 L627.6 598.0 L622.3 597.0 L617.3 596.1 L612.5 595.2 L608.0 594.4 L603.9 593.7 L600.1 593.1 L596.9 592.6 L594.0 592.3Z" fill="#561a4a"/>
<path d="M594.0 604.2 L596.7 605.0 L599.9 605.8 L603.6 606.7 L607.6 607.7 L612.0 608.7 L616.8 609.7 L621.8 610.8 L627.1 612.0 L632.6 613.1 L638.2 614.3 L644.0 615.5 L649.9 616.6 L655.8 617.8 L661.7 618.9 L667.5 619.9 L673.3 620.9 L679.0 621.8 L684.5 622.6 L689.9 623.3 L695.0 623.9 L699.8 624.3 L705.5 624.7 L711.2 625.1 L716.8 625.4 L722.3 625.6 L727.8 625.8 L733.2 625.9 L738.6 625.9 L743.9 625.8 L749.2 625.7 L754.4 625.5 L759.5 625.1 L764.6 624.7 L769.7 624.2 L774.7 623.7 L779.7 623.0 L784.6 622.2 L789.5 621.3 L795.4 619.9 L801.2 618.3 L807.0 616.4 L812.6 614.3 L818.2 612.0 L823.7 609.7 L829.1 607.2 L834.4 604.8 L839.6 602.3 L844.6 600.0 L849.6 597.8 L854.4 595.7 L859.1 593.8 L863.7 592.2 L869.6 590.4 L875.5 588.7 L881.4 587.2 L887.2 585.8 L892.9 584.5 L898.3 583.4 L903.3 582.4 L907.9 581.5 L912.1 580.6 L915.6 579.9 L918.5 579.3 L917.5 574.7 L914.7 575.4 L911.1 576.1 L907.0 576.9 L902.4 577.8 L897.3 578.9 L891.9 580.0 L886.2 581.3 L880.3 582.7 L874.3 584.2 L868.3 585.9 L862.3 587.8 L857.5 589.5 L852.7 591.4 L847.7 593.5 L842.7 595.8 L837.6 598.1 L832.4 600.6 L827.2 603.0 L821.8 605.4 L816.4 607.8 L811.0 610.0 L805.4 612.0 L799.8 613.9 L794.2 615.4 L788.5 616.7 L783.8 617.6 L779.0 618.4 L774.1 619.1 L769.2 619.6 L764.2 620.1 L759.2 620.5 L754.1 620.8 L749.0 621.0 L743.8 621.2 L738.6 621.2 L733.3 621.2 L727.9 621.1 L722.5 621.0 L717.0 620.7 L711.5 620.4 L705.9 620.1 L700.2 619.7 L695.4 619.3 L690.4 618.7 L685.1 618.1 L679.6 617.4 L674.0 616.7 L668.2 615.8 L662.3 614.9 L656.4 614.0 L650.5 613.0 L644.7 612.0 L638.9 611.0 L633.2 610.0 L627.7 609.0 L622.4 608.1 L617.3 607.2 L612.5 606.3 L608.0 605.6 L603.9 604.9 L600.2 604.4 L596.9 604.0 L594.0 603.8Z" fill="#561a4a"/>
<path d="M594.0 615.7 L596.7 616.4 L599.9 617.1 L603.6 618.0 L607.7 618.9 L612.1 619.8 L616.9 620.8 L621.9 621.9 L627.2 623.0 L632.7 624.1 L638.3 625.2 L644.1 626.3 L650.0 627.4 L655.8 628.5 L661.8 629.6 L667.6 630.6 L673.4 631.5 L679.1 632.4 L684.6 633.2 L689.9 633.8 L695.0 634.4 L699.9 634.8 L705.6 635.2 L711.2 635.5 L716.8 635.7 L722.4 635.9 L727.9 636.1 L733.3 636.1 L738.6 636.1 L743.9 636.0 L749.2 635.8 L754.4 635.6 L759.5 635.2 L764.6 634.8 L769.7 634.3 L774.6 633.7 L779.6 633.0 L784.5 632.2 L789.4 631.2 L795.2 629.9 L801.0 628.3 L806.8 626.4 L812.4 624.3 L818.0 622.0 L823.5 619.7 L828.9 617.2 L834.2 614.8 L839.3 612.4 L844.4 610.0 L849.4 607.8 L854.2 605.7 L859.0 603.8 L863.6 602.2 L869.4 600.3 L875.4 598.6 L881.3 597.1 L887.1 595.6 L892.8 594.3 L898.2 593.1 L903.2 592.0 L907.8 591.0 L912.0 590.2 L915.5 589.4 L918.4 588.7 L917.6 585.3 L914.8 585.9 L911.2 586.7 L907.1 587.5 L902.5 588.5 L897.4 589.6 L892.0 590.8 L886.3 592.2 L880.4 593.6 L874.4 595.2 L868.4 596.9 L862.4 598.8 L857.7 600.5 L852.9 602.4 L848.0 604.5 L842.9 606.8 L837.8 609.1 L832.7 611.6 L827.4 614.0 L822.0 616.4 L816.6 618.7 L811.1 621.0 L805.6 623.0 L800.0 624.9 L794.4 626.5 L788.6 627.8 L783.9 628.7 L779.0 629.5 L774.2 630.2 L769.3 630.8 L764.3 631.3 L759.2 631.7 L754.2 632.0 L749.0 632.3 L743.8 632.5 L738.6 632.5 L733.3 632.6 L727.9 632.5 L722.5 632.4 L717.0 632.2 L711.4 631.9 L705.8 631.6 L700.1 631.2 L695.4 630.8 L690.3 630.3 L685.0 629.7 L679.5 629.0 L673.9 628.3 L668.1 627.5 L662.2 626.6 L656.3 625.6 L650.4 624.7 L644.6 623.7 L638.8 622.7 L633.1 621.7 L627.6 620.7 L622.3 619.8 L617.2 618.9 L612.5 618.0 L608.0 617.2 L603.9 616.6 L600.1 616.0 L596.8 615.6 L594.0 615.3Z" fill="#561a4a"/>
<path d="M594.0 627.2 L596.7 628.0 L599.9 628.8 L603.6 629.6 L607.6 630.5 L612.1 631.5 L616.8 632.5 L621.9 633.5 L627.1 634.6 L632.6 635.7 L638.3 636.9 L644.0 638.0 L649.9 639.1 L655.8 640.2 L661.7 641.2 L667.6 642.2 L673.3 643.1 L679.0 644.0 L684.6 644.7 L689.9 645.4 L695.0 645.9 L699.8 646.3 L705.6 646.6 L711.2 646.9 L716.8 647.1 L722.4 647.3 L727.9 647.4 L733.3 647.4 L738.6 647.4 L744.0 647.2 L749.2 647.0 L754.4 646.7 L759.6 646.4 L764.7 645.9 L769.7 645.4 L774.7 644.7 L779.7 644.0 L784.6 643.2 L789.5 642.2 L795.4 640.9 L801.2 639.2 L806.9 637.3 L812.6 635.2 L818.2 633.0 L823.7 630.6 L829.1 628.2 L834.4 625.8 L839.5 623.3 L844.6 621.0 L849.6 618.8 L854.4 616.7 L859.1 614.8 L863.7 613.2 L869.6 611.3 L875.5 609.5 L881.4 607.9 L887.3 606.4 L892.9 605.0 L898.3 603.8 L903.3 602.7 L908.0 601.6 L912.1 600.7 L915.7 599.9 L918.5 599.2 L917.5 594.8 L914.6 595.5 L911.1 596.3 L907.0 597.2 L902.4 598.2 L897.3 599.4 L891.9 600.6 L886.2 602.0 L880.3 603.5 L874.3 605.2 L868.3 606.9 L862.3 608.8 L857.5 610.5 L852.7 612.5 L847.8 614.6 L842.7 616.8 L837.6 619.2 L832.4 621.6 L827.2 624.1 L821.8 626.4 L816.4 628.8 L811.0 631.0 L805.4 633.0 L799.9 634.9 L794.2 636.5 L788.5 637.8 L783.8 638.7 L779.0 639.5 L774.1 640.2 L769.2 640.8 L764.2 641.4 L759.2 641.8 L754.1 642.2 L749.0 642.5 L743.8 642.7 L738.6 642.8 L733.3 642.9 L727.9 642.8 L722.5 642.8 L717.0 642.6 L711.4 642.4 L705.8 642.1 L700.2 641.7 L695.4 641.4 L690.4 640.9 L685.1 640.3 L679.6 639.7 L673.9 639.0 L668.2 638.2 L662.3 637.3 L656.4 636.4 L650.5 635.5 L644.6 634.6 L638.9 633.6 L633.2 632.7 L627.7 631.7 L622.4 630.8 L617.3 630.0 L612.5 629.2 L608.0 628.5 L603.9 627.8 L600.2 627.3 L596.9 626.9 L594.0 626.8Z" fill="#561a4a"/>
<path d="M 688 430 L 690 476 C 705 525 740 556 790 560 C 835 558 860 520 882 455 L 884 430 Z" fill="#ee6c29"/>
<path d="M693.8 474.1 L695.4 483.0 L697.8 491.5 L700.7 499.6 L704.2 507.3 L708.2 514.6 L712.8 521.3 L717.8 527.5 L723.3 533.2 L729.2 538.4 L735.5 543.1 L742.2 547.3 L749.2 550.9 L756.7 554.0 L764.5 556.6 L772.6 558.6 L781.1 560.0 L789.8 560.8 L790.2 557.2 L781.6 556.4 L773.4 555.0 L765.5 553.1 L757.9 550.6 L750.8 547.6 L744.0 544.1 L737.5 540.1 L731.5 535.6 L725.8 530.6 L720.5 525.1 L715.7 519.1 L711.2 512.6 L707.1 505.8 L703.3 498.5 L699.9 490.8 L697.0 482.6 L694.2 473.9Z" fill="#561a4a"/>
<path d="M790.2 560.8 L798.0 560.1 L805.6 558.6 L812.8 556.4 L819.7 553.5 L826.3 550.0 L832.5 545.7 L838.4 540.8 L844.0 535.2 L849.4 529.0 L854.5 522.2 L859.3 514.8 L863.8 506.8 L868.0 498.2 L872.0 489.0 L875.7 479.2 L879.2 468.9 L882.2 458.1 L881.8 457.9 L877.6 468.4 L873.6 478.4 L869.4 487.9 L865.1 496.8 L860.7 505.1 L856.2 512.9 L851.5 520.1 L846.5 526.7 L841.4 532.7 L836.0 538.1 L830.3 542.8 L824.4 546.9 L818.1 550.3 L811.6 553.0 L804.7 555.1 L797.5 556.5 L789.8 557.2Z" fill="#561a4a"/>
<path d="M611.9 487.8 L606.7 489.4 L601.7 491.9 L596.8 494.9 L592.0 498.4 L587.4 502.4 L583.0 506.8 L578.8 511.7 L574.8 516.9 L571.0 522.4 L567.4 528.1 L564.0 534.2 L560.9 540.4 L558.0 546.9 L555.4 553.6 L553.1 560.4 L551.2 567.4 L549.6 574.5 L554.4 575.5 L556.0 568.6 L557.9 561.8 L560.1 555.2 L562.6 548.8 L565.3 542.5 L568.3 536.5 L571.6 530.6 L575.1 525.1 L578.8 519.8 L582.6 514.8 L586.6 510.2 L590.8 505.8 L594.9 501.7 L599.1 497.9 L603.4 494.5 L607.8 491.3 L612.1 488.2Z" fill="#561a4a"/>
<path d="M549.4 574.2 L547.5 580.4 L546.0 586.6 L544.9 592.7 L544.4 598.6 L544.5 604.5 L545.1 610.2 L546.4 615.8 L548.3 621.1 L551.0 626.3 L554.3 631.2 L558.4 635.9 L563.2 640.2 L569.0 644.1 L575.5 647.6 L582.7 650.7 L590.9 653.3 L599.9 655.2 L600.1 654.8 L591.7 651.1 L584.1 647.5 L577.4 643.9 L571.6 640.0 L566.6 636.0 L562.3 632.0 L558.6 627.9 L555.7 623.5 L553.4 619.0 L551.6 614.2 L550.5 609.3 L549.9 604.2 L549.9 598.8 L550.4 593.4 L551.3 587.7 L552.7 581.9 L554.6 575.8Z" fill="#561a4a"/>
<path d="M577.8 505.9 L573.2 511.8 L569.2 518.4 L565.7 525.6 L562.6 533.2 L560.1 541.2 L558.1 549.5 L556.6 558.1 L555.5 566.9 L554.9 575.8 L554.7 584.9 L555.0 593.9 L555.7 603.0 L557.1 612.0 L558.9 620.9 L561.3 629.6 L564.2 638.0 L567.8 646.1 L568.2 645.9 L565.9 637.5 L563.8 628.9 L562.1 620.2 L560.8 611.4 L559.8 602.6 L559.2 593.7 L558.9 584.8 L559.1 576.0 L559.7 567.3 L560.7 558.7 L562.2 550.4 L564.1 542.3 L566.2 534.4 L568.7 526.8 L571.5 519.6 L574.8 512.7 L578.2 506.1Z" fill="#561a4a"/>
<path d="M585.8 509.9 L581.2 515.6 L577.2 522.0 L573.7 528.9 L570.6 536.2 L568.0 543.9 L566.1 551.8 L564.6 560.1 L563.5 568.5 L562.9 577.0 L562.7 585.6 L563.0 594.3 L563.7 603.0 L565.1 611.6 L566.9 620.0 L569.3 628.3 L572.2 636.4 L575.8 644.1 L576.2 643.9 L573.9 635.8 L571.8 627.6 L570.1 619.4 L568.8 611.0 L567.9 602.5 L567.2 594.1 L566.9 585.6 L567.1 577.2 L567.7 568.9 L568.8 560.7 L570.2 552.7 L572.1 545.0 L574.2 537.4 L576.7 530.1 L579.5 523.2 L582.8 516.6 L586.2 510.1Z" fill="#561a4a"/>
<path d="M593.8 513.9 L589.2 519.4 L585.2 525.5 L581.7 532.2 L578.6 539.2 L576.1 546.5 L574.1 554.2 L572.6 562.0 L571.5 570.0 L570.9 578.2 L570.7 586.4 L571.0 594.7 L571.7 602.9 L573.1 611.1 L574.9 619.2 L577.3 627.1 L580.2 634.8 L583.8 642.1 L584.2 641.9 L581.9 634.2 L579.8 626.4 L578.1 618.5 L576.8 610.5 L575.9 602.5 L575.2 594.4 L574.9 586.4 L575.1 578.4 L575.7 570.5 L576.7 562.7 L578.2 555.1 L580.1 547.7 L582.2 540.4 L584.7 533.5 L587.5 526.8 L590.8 520.4 L594.2 514.1Z" fill="#561a4a"/>
<path d="M601.8 517.9 L597.2 523.2 L593.3 529.1 L589.8 535.5 L586.8 542.2 L584.2 549.2 L582.2 556.5 L580.7 564.0 L579.7 571.6 L579.0 579.4 L578.9 587.2 L579.1 595.0 L579.9 602.9 L581.2 610.6 L583.1 618.3 L585.4 625.8 L588.2 633.1 L591.8 640.1 L592.2 639.9 L589.9 632.5 L587.7 625.1 L586.0 617.6 L584.6 610.0 L583.7 602.4 L583.0 594.8 L582.8 587.1 L583.0 579.6 L583.6 572.0 L584.6 564.6 L586.1 557.4 L587.9 550.3 L590.0 543.4 L592.5 536.7 L595.4 530.3 L598.7 524.1 L602.2 518.1Z" fill="#561a4a"/>
<path d="M609.8 521.9 L605.1 526.9 L601.1 532.6 L597.6 538.7 L594.5 545.1 L591.9 551.7 L589.9 558.7 L588.4 565.9 L587.3 573.1 L586.7 580.5 L586.5 587.9 L586.8 595.4 L587.5 602.9 L588.9 610.3 L590.8 617.5 L593.2 624.7 L596.1 631.6 L599.8 638.1 L600.2 637.9 L598.0 630.8 L595.9 623.8 L594.2 616.7 L592.9 609.5 L592.0 602.3 L591.4 595.1 L591.1 587.9 L591.3 580.8 L591.9 573.7 L592.9 566.7 L594.4 559.8 L596.2 553.1 L598.3 546.5 L600.8 540.2 L603.6 534.0 L606.8 528.0 L610.2 522.1Z" fill="#561a4a"/>
<path d="M617.8 525.8 L613.1 530.7 L609.1 536.1 L605.6 541.9 L602.5 548.0 L599.9 554.4 L597.9 561.0 L596.4 567.8 L595.3 574.7 L594.7 581.7 L594.5 588.7 L594.7 595.8 L595.5 602.8 L596.9 609.8 L598.8 616.7 L601.2 623.4 L604.1 630.0 L607.8 636.1 L608.2 635.9 L606.0 629.2 L603.9 622.5 L602.2 615.8 L601.0 609.0 L600.1 602.2 L599.4 595.5 L599.2 588.7 L599.3 581.9 L599.9 575.3 L601.0 568.7 L602.4 562.2 L604.3 555.8 L606.3 549.6 L608.8 543.5 L611.6 537.6 L614.8 531.9 L618.2 526.2Z" fill="#561a4a"/>
<path d="M625.8 529.8 L621.2 534.5 L617.2 539.7 L613.6 545.2 L610.6 551.0 L608.0 557.0 L606.0 563.3 L604.5 569.7 L603.4 576.2 L602.8 582.8 L602.6 589.5 L602.8 596.1 L603.6 602.8 L605.0 609.4 L606.9 615.8 L609.2 622.2 L612.1 628.3 L615.8 634.1 L616.2 633.9 L614.0 627.5 L611.9 621.2 L610.2 614.9 L608.9 608.5 L608.0 602.2 L607.3 595.8 L607.1 589.5 L607.2 583.1 L607.8 576.8 L608.9 570.6 L610.3 564.5 L612.2 558.5 L614.2 552.6 L616.7 546.8 L619.6 541.2 L622.8 535.7 L626.2 530.2Z" fill="#561a4a"/>
<path d="M 599 578 C 620 568 650 572 668 588 C 680 605 680 640 676 676 C 650 672 620 662 606 652 C 596 635 590 610 591 588 Z" fill="#ee6c29"/>
<path d="M 745 640 L 821 637 C 840 632 853 622 880 614 L 912 606 C 922 632 930 655 935 672 L 902 677 L 829 685 L 752 681 Z" fill="#ee6c29"/>
<path d="M914.8 540.0 L913.7 545.2 L913.2 550.2 L912.9 555.0 L912.6 559.6 L912.4 563.9 L912.5 568.1 L912.6 572.1 L912.7 575.8 L912.9 579.4 L913.1 582.7 L913.3 585.9 L913.6 588.8 L913.8 591.6 L914.1 594.1 L914.4 596.5 L914.8 598.6 L915.1 600.5 L920.9 599.5 L920.5 597.6 L920.2 595.6 L919.9 593.4 L919.7 591.0 L919.4 588.3 L919.2 585.5 L919.0 582.4 L918.8 579.1 L918.6 575.6 L918.4 571.9 L918.3 567.9 L918.2 563.8 L917.8 559.5 L917.3 554.9 L916.9 550.2 L916.3 545.2 L915.2 540.0Z" fill="#561a4a"/>
<path d="M917.2 601.6 L918.9 601.4 L920.7 601.3 L922.4 601.1 L924.2 600.9 L925.9 600.7 L927.7 600.4 L929.5 600.2 L931.3 600.0 L933.1 599.7 L934.9 599.1 L936.6 598.4 L938.4 597.6 L940.0 596.2 L940.0 595.8 L938.0 595.0 L936.0 594.8 L934.2 594.6 L932.3 594.6 L930.6 594.8 L928.8 595.1 L927.0 595.3 L925.3 595.5 L923.6 595.7 L921.8 595.9 L920.1 596.1 L918.4 596.3 L916.8 596.4Z" fill="#561a4a"/>
<path d="M936.2 596.0 L937.7 589.8 L938.9 583.5 L940.1 577.4 L941.3 571.2 L942.6 565.2 L943.6 559.3 L944.7 553.4 L945.8 547.7 L947.0 542.2 L948.1 536.8 L949.3 531.7 L950.5 526.7 L951.4 521.9 L952.3 517.3 L953.1 513.0 L953.9 509.0 L954.2 505.1 L953.8 504.9 L952.0 508.4 L950.5 512.3 L949.0 516.5 L947.6 520.9 L946.2 525.7 L945.0 530.7 L943.8 535.9 L942.7 541.3 L941.5 546.9 L940.4 552.6 L939.3 558.5 L938.3 564.5 L937.5 570.6 L936.8 576.9 L936.2 583.2 L935.8 589.5 L935.8 596.0Z" fill="#561a4a"/>
<path d="M953.9 505.2 L960.3 507.4 L966.8 509.5 L973.6 511.8 L980.6 514.3 L987.6 517.0 L994.7 519.6 L1001.9 522.4 L1008.9 525.4 L1015.9 528.4 L1022.7 531.6 L1029.3 534.8 L1035.7 538.1 L1041.8 541.1 L1047.6 544.1 L1053.0 547.0 L1058.1 549.8 L1062.9 552.2 L1063.1 551.8 L1059.3 548.1 L1054.6 544.5 L1049.4 541.0 L1043.8 537.5 L1037.8 534.0 L1031.4 530.6 L1024.7 527.4 L1017.8 524.2 L1010.8 521.1 L1003.6 518.1 L996.4 515.2 L989.1 512.6 L981.9 510.3 L974.7 508.4 L967.6 506.7 L960.7 505.4 L954.1 504.8Z" fill="#561a4a"/>
<path d="M1062.9 552.2 L1066.4 555.4 L1070.1 558.3 L1073.9 561.2 L1077.7 564.0 L1081.5 566.9 L1085.4 569.6 L1089.3 572.3 L1093.1 574.9 L1096.9 577.6 L1100.5 580.3 L1104.0 582.9 L1107.4 585.5 L1110.7 587.9 L1113.9 590.2 L1117.0 592.4 L1119.9 594.4 L1122.8 596.2 L1123.2 595.8 L1121.3 592.9 L1118.9 590.2 L1116.2 587.4 L1113.3 584.6 L1110.2 581.8 L1106.8 579.2 L1103.3 576.5 L1099.6 573.8 L1095.8 571.1 L1092.0 568.4 L1088.1 565.7 L1084.1 563.0 L1080.0 560.6 L1075.8 558.2 L1071.7 555.8 L1067.5 553.6 L1063.1 551.8Z" fill="#561a4a"/>
<path d="M940.0 596.2 L950.7 595.5 L961.4 594.4 L972.0 593.3 L982.6 592.2 L993.2 591.2 L1003.9 590.2 L1014.5 589.3 L1025.1 588.6 L1035.8 588.1 L1046.5 588.0 L1057.2 588.2 L1068.0 588.7 L1078.8 589.4 L1089.7 590.5 L1100.6 592.0 L1111.7 594.0 L1122.9 596.2 L1123.1 595.8 L1112.1 592.2 L1101.1 589.5 L1090.1 587.3 L1079.2 585.7 L1068.3 584.6 L1057.4 584.0 L1046.5 583.8 L1035.7 584.0 L1024.9 584.4 L1014.2 585.1 L1003.5 586.0 L992.8 587.1 L982.2 588.6 L971.6 590.2 L961.0 591.9 L950.5 593.7 L940.0 595.8Z" fill="#561a4a"/>
<path d="M948.2 594.1 L950.5 588.5 L952.4 582.5 L954.2 576.2 L955.9 569.8 L957.5 563.3 L959.0 556.7 L960.5 550.2 L962.0 543.8 L963.5 537.6 L965.0 531.7 L966.5 526.1 L968.0 520.9 L969.4 516.2 L970.9 512.0 L972.2 508.1 L971.8 507.9 L969.2 511.1 L967.0 515.2 L964.9 519.9 L962.9 525.0 L961.2 530.6 L959.6 536.6 L958.1 542.9 L956.6 549.3 L955.1 555.8 L953.6 562.4 L952.2 569.0 L951.0 575.5 L949.8 581.8 L948.7 588.0 L947.8 593.9Z" fill="#561a4a"/>
<path d="M962.2 592.9 L964.4 587.3 L966.2 581.6 L967.8 575.7 L969.4 569.8 L970.9 563.8 L972.2 557.9 L973.5 552.1 L974.9 546.4 L976.3 540.9 L977.7 535.7 L979.1 530.7 L980.4 526.0 L981.8 521.6 L983.3 517.6 L984.7 513.9 L984.3 513.7 L981.8 516.9 L979.7 520.7 L977.7 525.0 L975.9 529.7 L974.3 534.7 L972.9 540.0 L971.5 545.6 L970.1 551.3 L968.8 557.1 L967.5 563.0 L966.2 569.0 L965.1 575.0 L963.9 581.0 L962.8 586.9 L961.8 592.7Z" fill="#561a4a"/>
<path d="M976.2 591.7 L978.5 586.3 L980.3 580.8 L982.0 575.3 L983.5 569.9 L984.8 564.5 L986.0 559.2 L987.2 554.1 L988.4 549.1 L989.6 544.3 L990.9 539.8 L992.2 535.4 L993.4 531.2 L994.6 527.2 L996.0 523.4 L997.2 519.7 L996.8 519.5 L994.2 522.5 L992.1 526.0 L990.1 529.9 L988.4 534.1 L986.9 538.6 L985.5 543.2 L984.3 548.1 L983.1 553.1 L981.9 558.3 L980.7 563.6 L979.6 569.0 L978.6 574.5 L977.6 580.1 L976.6 585.7 L975.8 591.5Z" fill="#561a4a"/>
<path d="M990.2 590.5 L992.4 585.1 L994.1 579.9 L995.6 574.8 L997.0 569.8 L998.2 565.1 L999.2 560.4 L1000.3 556.0 L1001.3 551.7 L1002.4 547.6 L1003.5 543.7 L1004.7 539.9 L1005.8 536.2 L1007.0 532.6 L1008.4 529.1 L1009.7 525.5 L1009.3 525.3 L1006.8 528.3 L1004.8 531.6 L1003.0 535.1 L1001.4 538.7 L1000.0 542.6 L998.8 546.6 L997.7 550.8 L996.7 555.1 L995.6 559.6 L994.6 564.3 L993.6 569.1 L992.7 574.1 L991.7 579.3 L990.7 584.7 L989.8 590.3Z" fill="#561a4a"/>
<path d="M1004.2 589.3 L1006.5 584.0 L1008.2 579.1 L1009.7 574.4 L1011.0 569.9 L1012.1 565.8 L1013.0 561.8 L1013.9 558.0 L1014.8 554.5 L1015.7 551.1 L1016.7 547.8 L1017.7 544.6 L1018.7 541.4 L1019.8 538.2 L1021.0 534.9 L1022.2 531.3 L1021.8 531.1 L1019.2 533.9 L1017.2 536.9 L1015.4 540.0 L1013.9 543.2 L1012.6 546.5 L1011.6 549.9 L1010.6 553.4 L1009.7 557.0 L1008.8 560.8 L1007.9 564.8 L1007.1 569.0 L1006.3 573.5 L1005.4 578.4 L1004.5 583.5 L1003.8 589.1Z" fill="#561a4a"/>
<path d="M1018.2 588.1 L1020.3 582.9 L1021.9 578.1 L1023.3 573.8 L1024.4 569.9 L1025.4 566.3 L1026.2 563.0 L1026.9 559.9 L1027.6 557.0 L1028.4 554.3 L1029.3 551.7 L1030.1 549.1 L1031.1 546.4 L1032.1 543.5 L1033.4 540.5 L1034.7 537.1 L1034.3 536.9 L1031.9 539.7 L1030.0 542.4 L1028.4 545.1 L1027.0 547.8 L1025.8 550.5 L1024.9 553.3 L1024.1 556.1 L1023.4 559.0 L1022.6 562.1 L1021.8 565.5 L1021.1 569.1 L1020.4 573.1 L1019.6 577.5 L1018.7 582.4 L1017.8 587.9Z" fill="#561a4a"/>
<path d="M1032.2 586.9 L1034.4 581.8 L1036.0 577.3 L1037.2 573.4 L1038.3 570.0 L1039.2 567.0 L1039.8 564.3 L1040.4 561.9 L1041.0 559.8 L1041.6 557.8 L1042.3 555.8 L1043.0 553.8 L1043.8 551.6 L1044.8 549.1 L1046.0 546.3 L1047.2 542.9 L1046.8 542.7 L1044.4 545.3 L1042.5 547.8 L1040.9 550.1 L1039.6 552.3 L1038.6 554.4 L1037.8 556.5 L1037.1 558.7 L1036.5 560.9 L1035.9 563.4 L1035.3 566.0 L1034.7 569.1 L1034.1 572.6 L1033.4 576.7 L1032.6 581.3 L1031.8 586.7Z" fill="#561a4a"/>
<path d="M1046.2 585.7 L1048.4 580.7 L1050.0 576.5 L1051.2 573.0 L1052.2 570.0 L1052.9 567.6 L1053.4 565.6 L1053.8 563.9 L1054.2 562.5 L1054.7 561.3 L1055.3 560.0 L1055.8 558.5 L1056.5 556.8 L1057.4 554.6 L1058.5 552.0 L1059.7 548.7 L1059.3 548.5 L1056.8 551.0 L1055.0 553.2 L1053.5 555.0 L1052.3 556.7 L1051.4 558.2 L1050.8 559.7 L1050.2 561.2 L1049.7 562.8 L1049.3 564.6 L1048.8 566.6 L1048.3 569.1 L1047.8 572.1 L1047.2 575.8 L1046.5 580.2 L1045.8 585.5Z" fill="#561a4a"/>
<path d="M1060.2 584.5 L1062.2 579.6 L1063.7 575.6 L1064.8 572.4 L1065.6 570.0 L1066.2 568.2 L1066.5 566.8 L1066.8 565.9 L1067.0 565.2 L1067.3 564.7 L1067.7 564.1 L1068.2 563.1 L1068.9 561.8 L1069.8 560.0 L1070.9 557.7 L1072.2 554.5 L1071.8 554.3 L1069.5 556.8 L1067.8 558.7 L1066.5 560.1 L1065.5 561.2 L1064.7 562.1 L1064.2 562.9 L1063.8 563.8 L1063.4 564.8 L1063.1 565.9 L1062.7 567.3 L1062.3 569.2 L1061.9 571.7 L1061.4 575.0 L1060.6 579.1 L1059.8 584.3Z" fill="#561a4a"/>
<path d="M1074.2 583.3 L1076.3 578.5 L1077.7 574.8 L1078.8 572.0 L1079.5 570.1 L1080.0 568.9 L1080.1 568.3 L1080.1 568.4 L1079.2 569.0 L1079.2 569.1 L1080.0 568.8 L1080.8 568.2 L1081.5 567.1 L1082.4 565.6 L1083.5 563.5 L1084.7 560.3 L1084.3 560.1 L1082.0 562.4 L1080.3 564.0 L1079.1 565.0 L1078.4 565.3 L1078.2 565.3 L1078.4 565.2 L1077.9 565.3 L1076.8 566.2 L1076.4 567.0 L1076.2 567.8 L1075.9 569.1 L1075.6 571.2 L1075.2 574.1 L1074.5 578.0 L1073.8 583.1Z" fill="#561a4a"/>
<path d="M1088.2 582.1 L1090.2 577.3 L1091.5 573.9 L1092.4 571.5 L1093.0 570.1 L1093.3 569.6 L1090.1 569.4 L1090.0 569.2 L1090.0 569.9 L1090.1 570.8 L1090.6 572.0 L1092.2 572.9 L1093.8 572.3 L1094.8 571.1 L1095.9 569.1 L1097.2 566.1 L1096.8 565.9 L1094.6 568.2 L1093.1 569.5 L1092.2 569.9 L1092.5 569.7 L1093.4 570.1 L1093.5 570.1 L1093.5 569.7 L1093.5 569.2 L1093.4 568.3 L1090.0 568.4 L1089.9 569.2 L1089.7 570.7 L1089.3 573.2 L1088.6 576.9 L1087.8 581.9Z" fill="#561a4a"/>
<path d="M934.0 671.2 L945.8 671.9 L957.8 672.1 L970.0 672.3 L982.2 672.3 L994.4 672.3 L1006.5 671.9 L1018.5 671.6 L1030.2 671.2 L1041.6 670.7 L1052.7 670.3 L1063.3 669.7 L1073.4 669.1 L1082.9 668.2 L1091.6 667.3 L1099.7 666.2 L1106.8 664.9 L1113.0 663.2 L1113.0 662.8 L1106.6 662.8 L1099.3 663.1 L1091.3 663.5 L1082.5 663.9 L1073.1 664.2 L1063.0 664.8 L1052.5 665.3 L1041.4 665.8 L1030.0 666.2 L1018.3 666.6 L1006.4 667.0 L994.3 667.4 L982.1 667.9 L969.9 668.5 L957.7 669.1 L945.8 669.7 L934.0 670.8Z" fill="#561a4a"/>
<path d="M1113.1 663.2 L1117.1 662.5 L1120.8 661.3 L1124.1 659.7 L1127.1 658.0 L1129.9 656.0 L1132.1 653.7 L1134.1 651.3 L1135.7 648.7 L1137.1 646.0 L1138.2 643.2 L1138.9 640.3 L1139.4 637.3 L1139.4 634.2 L1139.1 631.2 L1138.6 628.1 L1137.7 625.0 L1136.2 622.0 L1135.8 622.0 L1135.5 625.3 L1135.5 628.4 L1135.3 631.3 L1135.0 634.1 L1134.6 636.7 L1134.1 639.2 L1133.5 641.7 L1132.6 644.0 L1131.5 646.3 L1130.1 648.4 L1128.4 650.5 L1126.5 652.4 L1124.5 654.5 L1122.1 656.5 L1119.3 658.5 L1116.3 660.5 L1112.9 662.8Z" fill="#561a4a"/>
<path d="M1136.2 621.9 L1136.2 619.6 L1135.8 617.4 L1135.4 615.3 L1134.9 613.3 L1134.4 611.3 L1133.6 609.4 L1132.9 607.6 L1132.1 605.9 L1131.4 604.3 L1130.6 602.7 L1129.8 601.3 L1128.9 599.9 L1127.9 598.7 L1126.8 597.7 L1125.7 596.8 L1124.5 596.1 L1123.2 595.8 L1122.8 596.2 L1123.2 597.4 L1123.8 598.5 L1124.3 599.6 L1124.9 600.8 L1125.4 602.1 L1126.2 603.3 L1126.9 604.7 L1127.6 606.1 L1128.4 607.7 L1129.1 609.3 L1129.8 611.0 L1130.5 612.8 L1131.4 614.6 L1132.4 616.4 L1133.4 618.3 L1134.4 620.2 L1135.8 622.1Z" fill="#561a4a"/>
<path d="M921.8 603.1 L922.3 607.6 L923.1 612.2 L924.0 616.8 L924.8 621.3 L925.8 625.9 L926.8 630.5 L927.9 635.1 L929.0 639.7 L930.2 644.3 L931.3 648.9 L932.7 653.5 L934.2 658.0 L935.8 662.5 L937.6 666.9 L939.8 671.1 L940.2 670.9 L939.3 666.3 L938.2 661.7 L937.1 657.2 L936.0 652.6 L934.9 648.0 L933.7 643.4 L932.6 638.9 L931.5 634.3 L930.4 629.7 L929.3 625.1 L928.2 620.6 L926.9 616.1 L925.5 611.6 L924.0 607.2 L922.2 602.9Z" fill="#561a4a"/>
<path d="M935.6 601.5 L936.1 606.1 L937.0 610.7 L937.9 615.4 L938.8 620.1 L939.9 624.8 L941.1 629.5 L942.4 634.3 L943.6 639.1 L944.9 643.8 L946.3 648.6 L947.7 653.3 L949.4 657.9 L951.1 662.4 L953.0 666.8 L955.2 671.1 L955.6 670.9 L954.7 666.3 L953.5 661.6 L952.4 657.0 L951.2 652.3 L949.9 647.5 L948.6 642.8 L947.3 638.1 L946.1 633.3 L944.8 628.6 L943.6 623.9 L942.3 619.2 L940.9 614.6 L939.4 610.1 L937.9 605.6 L936.0 601.3Z" fill="#561a4a"/>
<path d="M949.4 599.9 L949.8 604.6 L950.6 609.3 L951.5 614.0 L952.5 618.9 L953.7 623.8 L955.1 628.7 L956.5 633.6 L957.9 638.5 L959.4 643.4 L960.9 648.3 L962.5 653.1 L964.3 657.8 L966.2 662.4 L968.2 666.9 L970.6 671.1 L971.0 670.9 L970.2 666.2 L969.1 661.5 L967.9 656.7 L966.7 651.8 L965.3 647.0 L963.8 642.1 L962.4 637.2 L961.0 632.3 L959.6 627.4 L958.2 622.5 L956.8 617.7 L955.2 613.0 L953.6 608.4 L951.9 604.0 L949.8 599.7Z" fill="#561a4a"/>
<path d="M963.2 598.3 L963.6 603.0 L964.5 607.8 L965.5 612.6 L966.6 617.6 L968.0 622.6 L969.5 627.7 L971.1 632.7 L972.6 637.8 L974.2 642.9 L975.9 648.0 L977.6 652.9 L979.5 657.7 L981.5 662.4 L983.6 666.9 L986.0 671.1 L986.4 670.9 L985.6 666.2 L984.4 661.4 L983.1 656.5 L981.8 651.5 L980.3 646.5 L978.6 641.5 L977.0 636.4 L975.5 631.4 L973.9 626.3 L972.4 621.3 L970.8 616.4 L969.1 611.6 L967.4 606.9 L965.7 602.4 L963.6 598.1Z" fill="#561a4a"/>
<path d="M977.0 596.7 L977.5 601.4 L978.4 606.2 L979.6 611.2 L980.9 616.3 L982.4 621.4 L984.0 626.6 L985.7 631.9 L987.5 637.1 L989.2 642.3 L991.0 647.5 L992.9 652.6 L994.9 657.5 L996.9 662.3 L999.0 666.8 L1001.4 671.1 L1001.8 670.9 L1000.9 666.1 L999.6 661.3 L998.2 656.3 L996.7 651.3 L995.1 646.1 L993.3 640.9 L991.6 635.7 L989.8 630.5 L988.1 625.3 L986.5 620.1 L984.8 615.1 L983.0 610.2 L981.2 605.4 L979.4 600.8 L977.4 596.5Z" fill="#561a4a"/>
<path d="M990.8 595.1 L991.4 599.8 L992.4 604.7 L993.7 609.7 L995.1 614.9 L996.8 620.2 L998.6 625.6 L1000.4 631.0 L1002.3 636.4 L1004.3 641.7 L1006.2 647.1 L1008.2 652.3 L1010.3 657.3 L1012.4 662.2 L1014.5 666.8 L1016.8 671.1 L1017.2 670.9 L1016.2 666.2 L1014.9 661.3 L1013.3 656.2 L1011.7 651.0 L1009.9 645.7 L1008.0 640.4 L1006.1 635.0 L1004.2 629.6 L1002.3 624.3 L1000.5 619.0 L998.7 613.8 L996.8 608.8 L995.0 603.9 L993.2 599.3 L991.2 594.9Z" fill="#561a4a"/>
<path d="M1004.6 593.5 L1005.1 598.2 L1006.2 603.2 L1007.5 608.4 L1009.0 613.7 L1010.8 619.1 L1012.8 624.6 L1014.8 630.2 L1016.9 635.7 L1018.9 641.3 L1021.0 646.8 L1023.1 652.1 L1025.4 657.2 L1027.6 662.1 L1029.8 666.8 L1032.2 671.1 L1032.6 670.9 L1031.7 666.1 L1030.3 661.1 L1028.7 656.0 L1027.0 650.6 L1025.1 645.2 L1023.0 639.8 L1020.9 634.2 L1018.9 628.7 L1016.8 623.1 L1014.9 617.7 L1012.9 612.4 L1010.9 607.3 L1009.0 602.3 L1007.1 597.7 L1005.0 593.3Z" fill="#561a4a"/>
<path d="M1018.4 591.9 L1018.9 596.7 L1020.1 601.7 L1021.5 607.0 L1023.1 612.4 L1025.0 618.0 L1027.1 623.6 L1029.3 629.3 L1031.5 635.1 L1033.7 640.8 L1036.0 646.4 L1038.2 651.8 L1040.6 657.1 L1042.9 662.1 L1045.1 666.8 L1047.6 671.1 L1048.0 670.9 L1047.1 666.1 L1045.6 661.0 L1043.9 655.8 L1042.1 650.3 L1040.1 644.8 L1037.8 639.1 L1035.6 633.5 L1033.4 627.7 L1031.2 622.1 L1029.1 616.5 L1027.0 611.0 L1024.9 605.8 L1022.8 600.8 L1020.9 596.1 L1018.8 591.7Z" fill="#561a4a"/>
<path d="M1032.2 590.3 L1032.8 595.1 L1034.1 600.1 L1035.6 605.5 L1037.3 611.1 L1039.4 616.8 L1041.7 622.6 L1044.0 628.4 L1046.4 634.3 L1048.8 640.2 L1051.1 645.9 L1053.5 651.5 L1056.0 656.9 L1058.3 662.0 L1060.6 666.7 L1063.0 671.1 L1063.4 670.9 L1062.4 666.1 L1060.8 661.0 L1059.0 655.6 L1057.1 650.1 L1054.9 644.4 L1052.5 638.6 L1050.1 632.8 L1047.7 626.9 L1045.4 621.1 L1043.2 615.3 L1040.9 609.7 L1038.7 604.4 L1036.6 599.3 L1034.6 594.5 L1032.6 590.1Z" fill="#561a4a"/>
<path d="M1046.0 588.7 L1046.6 593.5 L1047.9 598.7 L1049.5 604.1 L1051.3 609.8 L1053.5 615.6 L1055.9 621.6 L1058.4 627.6 L1061.0 633.6 L1063.5 639.7 L1066.0 645.6 L1068.6 651.3 L1071.1 656.8 L1073.6 661.9 L1075.9 666.8 L1078.4 671.1 L1078.8 670.9 L1077.8 666.0 L1076.2 660.9 L1074.3 655.4 L1072.3 649.7 L1069.9 643.9 L1067.4 638.0 L1064.9 632.0 L1062.3 626.0 L1059.9 620.0 L1057.5 614.1 L1055.1 608.4 L1052.7 602.9 L1050.5 597.7 L1048.5 592.9 L1046.4 588.5Z" fill="#561a4a"/>
<path d="M1059.8 590.9 L1060.4 595.7 L1061.7 600.8 L1063.4 606.2 L1065.3 611.7 L1067.7 617.4 L1070.2 623.1 L1072.9 628.9 L1075.6 634.8 L1078.3 640.5 L1080.9 646.3 L1083.6 651.8 L1086.3 657.1 L1088.8 662.1 L1091.3 666.8 L1093.8 671.1 L1094.2 670.9 L1093.2 666.0 L1091.6 660.9 L1089.6 655.6 L1087.5 650.0 L1085.0 644.4 L1082.3 638.7 L1079.6 632.9 L1076.9 627.1 L1074.3 621.3 L1071.8 615.6 L1069.2 610.1 L1066.8 604.8 L1064.5 599.8 L1062.4 595.1 L1060.2 590.7Z" fill="#561a4a"/>
<path d="M1073.6 593.1 L1074.4 597.8 L1075.8 602.8 L1077.7 608.0 L1079.8 613.4 L1082.3 618.9 L1085.0 624.4 L1087.8 630.0 L1090.7 635.6 L1093.5 641.2 L1096.3 646.7 L1099.1 652.1 L1101.9 657.2 L1104.4 662.1 L1106.8 666.8 L1109.2 671.1 L1109.6 670.9 L1108.4 666.1 L1106.7 661.1 L1104.6 655.9 L1102.2 650.5 L1099.6 645.1 L1096.8 639.5 L1093.9 634.0 L1091.1 628.4 L1088.3 622.8 L1085.6 617.3 L1082.9 612.0 L1080.4 606.9 L1078.1 601.9 L1076.0 597.3 L1074.0 592.9Z" fill="#561a4a"/>
<path d="M1087.4 595.3 L1088.2 599.9 L1089.7 604.5 L1091.6 609.1 L1093.9 613.7 L1096.5 618.2 L1099.4 622.6 L1102.4 627.0 L1105.4 631.4 L1108.4 635.8 L1111.3 640.1 L1114.2 644.4 L1117.1 648.6 L1119.7 652.8 L1122.2 657.0 L1124.6 661.1 L1125.0 660.9 L1123.8 656.2 L1122.0 651.6 L1119.8 647.0 L1117.3 642.5 L1114.5 638.0 L1111.6 633.6 L1108.5 629.2 L1105.5 624.8 L1102.6 620.5 L1099.8 616.1 L1097.0 611.8 L1094.4 607.6 L1092.0 603.5 L1089.9 599.3 L1087.8 595.1Z" fill="#561a4a"/>
<path d="M1101.2 597.5 L1101.9 602.0 L1103.5 606.2 L1105.6 610.2 L1108.0 614.0 L1110.8 617.5 L1113.9 620.9 L1117.0 624.1 L1120.2 627.2 L1123.3 630.4 L1126.4 633.6 L1129.4 636.8 L1132.3 640.1 L1135.0 643.5 L1137.5 647.2 L1140.0 651.1 L1140.4 650.9 L1139.3 646.3 L1137.4 642.1 L1135.0 638.1 L1132.4 634.3 L1129.4 630.8 L1126.3 627.5 L1123.1 624.3 L1119.9 621.2 L1116.8 618.0 L1113.9 614.8 L1111.1 611.6 L1108.4 608.4 L1105.9 604.9 L1103.7 601.3 L1101.6 597.3Z" fill="#561a4a"/>
<path d="M1115.0 599.7 L1115.8 604.1 L1117.5 607.9 L1119.8 611.3 L1122.4 614.2 L1125.4 616.8 L1128.7 618.9 L1132.0 621.0 L1135.4 622.9 L1138.6 624.9 L1141.8 626.9 L1144.9 629.1 L1147.8 631.4 L1150.5 634.1 L1153.0 637.3 L1155.4 641.1 L1155.8 640.9 L1154.6 636.5 L1152.5 632.6 L1150.0 629.3 L1147.2 626.3 L1144.0 623.8 L1140.7 621.7 L1137.3 619.6 L1134.0 617.7 L1130.7 615.7 L1127.7 613.7 L1124.8 611.5 L1122.1 609.2 L1119.7 606.5 L1117.5 603.3 L1115.4 599.5Z" fill="#561a4a"/>
<path d="M601.1 577.2 L604.7 576.9 L608.3 576.3 L611.9 575.9 L615.5 575.7 L619.3 575.6 L623.0 575.5 L626.8 575.6 L630.7 575.9 L634.6 576.5 L638.6 577.3 L642.6 578.3 L646.6 579.6 L650.7 580.9 L654.9 582.4 L659.1 584.2 L663.4 586.2 L667.9 588.2 L668.1 587.8 L664.5 584.4 L660.5 581.6 L656.5 579.2 L652.3 577.1 L648.2 575.2 L643.9 573.8 L639.7 572.7 L635.4 571.9 L631.2 571.3 L627.1 570.9 L623.0 570.8 L619.0 571.0 L615.1 571.6 L611.3 572.4 L607.6 573.5 L604.1 574.9 L600.9 576.8Z" fill="#561a4a"/>
<path d="M590.8 587.0 L589.3 591.4 L588.7 595.8 L588.4 600.2 L588.3 604.5 L588.3 608.9 L588.9 613.1 L589.6 617.2 L590.4 621.3 L591.4 625.3 L592.5 629.2 L593.6 633.0 L595.0 636.8 L596.7 640.2 L598.6 643.6 L600.6 646.7 L602.9 649.7 L605.8 652.1 L606.2 651.9 L605.7 648.2 L604.7 644.8 L603.6 641.3 L602.6 637.9 L601.6 634.3 L600.4 630.8 L599.3 627.2 L598.3 623.5 L597.4 619.8 L596.6 615.9 L596.0 612.0 L595.4 608.0 L594.6 604.0 L593.8 599.9 L593.2 595.7 L592.5 591.4 L591.2 587.0Z" fill="#561a4a"/>
<path d="M605.9 652.2 L608.8 655.1 L612.2 657.5 L615.7 659.8 L619.4 661.9 L623.1 664.0 L627.1 665.7 L631.2 667.3 L635.4 668.9 L639.6 670.4 L643.9 671.9 L648.3 673.3 L652.7 674.6 L657.3 675.6 L661.8 676.6 L666.5 677.4 L671.2 678.0 L675.9 678.2 L676.1 677.8 L671.7 675.8 L667.3 674.2 L662.9 672.7 L658.5 671.2 L654.2 669.7 L649.8 668.3 L645.6 667.0 L641.3 665.5 L637.2 664.1 L633.1 662.5 L629.1 660.9 L625.2 659.2 L621.3 657.8 L617.5 656.2 L613.7 654.6 L610.0 653.1 L606.1 651.8Z" fill="#561a4a"/>
<path d="M605.9 600.2 L609.0 602.1 L612.1 603.6 L615.3 605.0 L618.4 606.3 L621.5 607.7 L624.6 608.8 L627.7 609.9 L630.7 611.0 L633.8 612.1 L636.8 613.3 L639.7 614.5 L642.7 615.7 L645.7 616.7 L648.7 617.7 L651.7 618.7 L654.7 619.6 L657.9 620.2 L658.1 619.8 L655.6 617.6 L653.0 615.9 L650.2 614.2 L647.4 612.7 L644.5 611.2 L641.6 609.9 L638.6 608.7 L635.5 607.5 L632.5 606.4 L629.4 605.2 L626.2 604.1 L623.1 603.0 L619.8 602.2 L616.5 601.4 L613.1 600.6 L609.7 600.0 L606.1 599.8Z" fill="#561a4a"/>
<path d="M605.9 618.2 L608.9 620.4 L612.1 622.2 L615.3 624.0 L618.5 625.7 L621.7 627.3 L625.0 628.7 L628.3 630.1 L631.5 631.6 L634.7 633.0 L637.9 634.4 L641.1 635.8 L644.2 637.2 L647.3 638.3 L650.5 639.5 L653.6 640.6 L656.7 641.6 L659.9 642.2 L660.1 641.8 L657.6 639.6 L654.9 637.8 L652.1 636.1 L649.2 634.4 L646.2 632.7 L643.1 631.3 L639.9 629.9 L636.7 628.4 L633.5 627.0 L630.2 625.6 L627.0 624.2 L623.6 622.8 L620.2 621.6 L616.8 620.5 L613.3 619.4 L609.8 618.4 L606.1 617.8Z" fill="#561a4a"/>
<path d="M613.9 638.2 L616.3 640.6 L619.0 642.6 L621.8 644.6 L624.6 646.4 L627.5 648.2 L630.5 649.8 L633.5 651.3 L636.5 652.8 L639.6 654.2 L642.6 655.6 L645.6 656.9 L648.6 658.2 L651.7 659.2 L654.7 660.2 L657.8 661.1 L660.8 661.8 L663.9 662.2 L664.1 661.8 L661.5 660.0 L658.8 658.5 L656.0 657.1 L653.2 655.6 L650.3 654.2 L647.4 652.9 L644.4 651.6 L641.4 650.2 L638.5 648.8 L635.5 647.4 L632.5 645.9 L629.6 644.4 L626.5 643.0 L623.5 641.6 L620.4 640.2 L617.3 638.9 L614.1 637.8Z" fill="#561a4a"/>
<path d="M667.8 588.2 L668.9 590.7 L670.1 593.1 L671.2 595.5 L672.2 597.8 L673.1 600.2 L674.0 602.5 L674.8 604.9 L675.3 607.3 L675.8 609.7 L676.0 612.2 L676.0 614.8 L675.9 617.3 L675.8 620.0 L675.5 622.8 L675.0 625.7 L674.4 628.7 L673.8 631.9 L674.2 632.1 L676.2 629.4 L677.7 626.5 L678.8 623.6 L679.7 620.7 L680.3 617.7 L680.5 614.8 L680.4 612.0 L680.1 609.1 L679.7 606.4 L679.0 603.7 L678.2 601.0 L677.1 598.5 L675.7 596.1 L674.2 593.8 L672.4 591.6 L670.5 589.6 L668.2 587.8Z" fill="#561a4a"/>
<path d="M756.2 679.2 L759.7 676.8 L762.9 674.3 L766.1 671.8 L769.3 669.3 L772.6 666.9 L775.9 664.4 L779.2 662.0 L782.7 659.7 L786.4 657.5 L790.3 655.5 L794.4 653.5 L798.7 651.6 L803.2 649.7 L808.0 647.8 L813.0 646.0 L818.4 644.3 L824.0 642.2 L824.0 641.8 L817.9 642.0 L812.2 642.9 L806.8 644.0 L801.7 645.3 L796.8 646.9 L792.3 648.8 L788.0 650.8 L783.9 653.0 L780.0 655.3 L776.3 657.7 L772.8 660.3 L769.4 662.9 L766.3 665.8 L763.4 668.8 L760.6 672.0 L758.0 675.2 L755.8 678.8Z" fill="#561a4a"/>
<path d="M793.1 669.2 L796.1 668.7 L798.9 667.8 L801.8 666.9 L804.7 665.9 L807.5 664.9 L810.4 663.7 L813.2 662.5 L816.0 661.4 L818.9 660.2 L821.7 659.1 L824.6 658.0 L827.5 656.9 L830.2 655.7 L833.0 654.4 L835.8 653.2 L838.5 651.8 L841.1 650.2 L840.9 649.8 L837.9 650.0 L834.9 650.5 L831.9 651.2 L828.9 652.0 L825.9 652.8 L823.0 653.9 L820.1 655.0 L817.2 656.1 L814.4 657.3 L811.5 658.4 L808.6 659.6 L805.8 660.9 L803.1 662.3 L800.4 663.8 L797.8 665.3 L795.3 666.9 L792.9 668.8Z" fill="#561a4a"/>
<path d="M827.1 681.2 L829.9 680.3 L832.4 679.1 L834.8 677.8 L837.2 676.6 L839.6 675.3 L841.8 673.9 L844.0 672.4 L846.2 671.1 L848.5 669.7 L850.7 668.4 L852.9 667.1 L855.2 665.8 L857.4 664.4 L859.6 663.0 L861.8 661.5 L864.0 660.0 L866.1 658.2 L865.9 657.8 L863.1 658.1 L860.5 658.9 L858.0 659.8 L855.5 660.7 L853.0 661.8 L850.6 663.0 L848.3 664.3 L846.0 665.7 L843.8 667.1 L841.5 668.5 L839.3 669.9 L837.0 671.4 L834.9 673.1 L832.8 674.8 L830.7 676.7 L828.7 678.6 L826.9 680.8Z" fill="#561a4a"/>
<path d="M755.8 682.1 L761.9 682.7 L768.1 683.3 L774.6 683.9 L781.2 684.3 L788.1 684.7 L795.3 684.9 L802.9 685.0 L810.7 685.0 L819.0 684.9 L827.6 684.6 L836.7 684.2 L846.3 683.6 L856.3 682.6 L866.9 681.5 L878.0 680.1 L889.7 678.4 L902.0 676.2 L902.0 675.8 L889.5 676.6 L877.7 677.5 L866.6 678.3 L856.0 678.9 L846.0 679.5 L836.5 680.0 L827.4 680.4 L818.9 680.7 L810.7 680.8 L802.9 680.8 L795.4 680.7 L788.3 680.5 L781.5 680.2 L774.9 679.7 L768.5 679.2 L762.3 678.6 L756.2 677.9Z" fill="#561a4a"/>
<path d="M902.0 676.2 L904.4 676.6 L906.8 676.6 L909.2 676.6 L911.7 676.6 L914.1 676.5 L916.5 676.3 L919.0 676.1 L921.4 675.9 L923.9 675.7 L926.3 675.6 L928.8 675.5 L931.2 675.3 L933.6 675.2 L936.0 675.2 L938.4 675.1 L940.7 675.1 L943.0 675.1 L943.0 670.9 L940.7 670.9 L938.3 671.0 L935.9 671.0 L933.5 671.1 L931.0 671.2 L928.6 671.3 L926.1 671.4 L923.6 671.6 L921.1 671.8 L918.6 672.0 L916.1 672.2 L913.7 672.4 L911.3 672.9 L908.9 673.5 L906.5 674.0 L904.2 674.7 L902.0 675.8Z" fill="#561a4a"/>
<path d="M895.8 630.1 L896.4 632.9 L897.2 635.7 L898.1 638.4 L899.0 641.1 L899.9 643.8 L901.0 646.4 L902.0 649.1 L903.1 651.7 L904.2 654.3 L905.4 656.9 L906.5 659.5 L907.6 662.0 L909.0 664.5 L910.3 667.0 L911.7 669.4 L913.2 671.8 L914.8 674.1 L915.2 673.9 L914.4 671.2 L913.5 668.6 L912.5 666.0 L911.5 663.4 L910.5 660.8 L909.3 658.2 L908.2 655.6 L907.1 653.1 L906.0 650.5 L904.9 647.9 L903.8 645.2 L902.7 642.6 L901.5 640.1 L900.3 637.5 L899.0 634.9 L897.7 632.4 L896.2 629.9Z" fill="#561a4a"/>
<path d="M911.8 606.1 L912.0 609.8 L912.6 613.4 L913.5 617.2 L914.4 621.0 L915.3 624.9 L916.6 628.7 L917.9 632.7 L919.2 636.6 L920.6 640.6 L922.0 644.6 L923.4 648.6 L924.9 652.6 L926.7 656.5 L928.5 660.3 L930.4 664.0 L932.4 667.7 L934.8 671.1 L935.2 670.9 L934.5 666.8 L933.4 662.8 L932.2 658.8 L931.0 654.8 L929.8 650.8 L928.3 646.8 L926.9 642.9 L925.5 638.9 L924.2 634.9 L922.8 631.0 L921.5 627.1 L920.2 623.3 L918.7 619.6 L917.3 616.0 L915.8 612.4 L914.2 609.1 L912.2 605.9Z" fill="#561a4a"/>
<path d="M745.0 638.2 L752.8 638.7 L760.3 639.0 L767.6 639.1 L774.7 639.2 L781.5 639.1 L788.2 638.7 L794.7 638.3 L801.0 637.7 L807.2 636.9 L813.2 636.0 L819.2 634.9 L825.0 633.6 L830.8 631.9 L836.5 629.9 L842.1 627.7 L847.6 625.2 L853.1 622.2 L852.9 621.8 L847.1 623.8 L841.4 625.7 L835.7 627.5 L830.0 629.0 L824.2 630.3 L818.5 631.6 L812.7 632.6 L806.7 633.6 L800.6 634.3 L794.4 634.9 L788.0 635.4 L781.4 635.7 L774.6 636.2 L767.6 636.5 L760.3 636.9 L752.8 637.2 L745.0 637.8Z" fill="#561a4a"/>
<path d="M591.9 481.2 L598.2 495.9 L604.5 510.7 L610.8 525.5 L617.0 540.3 L623.3 555.1 L629.5 570.0 L635.8 584.8 L642.0 599.7 L648.2 614.5 L655.0 629.1 L662.0 643.7 L669.3 658.2 L677.8 672.1 L678.2 671.9 L674.4 656.0 L669.3 640.7 L664.0 625.4 L658.4 610.3 L652.2 595.4 L646.0 580.5 L639.7 565.7 L633.5 550.8 L627.2 536.0 L621.0 521.2 L614.7 506.4 L608.4 491.6 L602.1 476.8Z" fill="#561a4a"/>
<path d="M695.1 397.2 L698.6 396.1 L701.9 394.9 L705.2 393.8 L708.5 392.8 L711.8 392.1 L715.1 391.3 L718.4 390.7 L721.7 390.3 L725.1 390.1 L728.3 390.1 L731.6 390.3 L734.7 390.6 L737.8 390.9 L740.9 391.3 L743.9 391.9 L746.9 392.6 L749.9 393.2 L750.1 392.8 L747.7 390.7 L744.9 389.2 L741.9 387.9 L738.7 386.8 L735.4 386.0 L731.9 385.6 L728.4 385.4 L724.9 385.5 L721.3 385.7 L717.7 386.1 L714.1 386.8 L710.6 387.6 L707.2 388.9 L703.8 390.4 L700.6 392.2 L697.6 394.3 L694.9 396.8Z" fill="#561a4a"/>
<path d="M804.1 392.2 L807.1 391.7 L810.1 391.1 L813.2 390.6 L816.4 390.1 L819.6 389.8 L822.8 389.5 L826.1 389.3 L829.3 389.2 L832.6 389.2 L835.9 389.4 L839.2 389.7 L842.4 390.1 L845.6 390.6 L848.7 391.1 L851.8 391.8 L854.9 392.5 L857.9 393.2 L858.1 392.8 L855.4 391.2 L852.4 389.9 L849.3 388.8 L846.1 387.9 L842.9 387.1 L839.5 386.6 L836.1 386.3 L832.7 386.1 L829.3 386.1 L825.9 386.2 L822.5 386.4 L819.2 386.8 L815.9 387.4 L812.7 388.2 L809.6 389.2 L806.7 390.3 L803.9 391.8Z" fill="#561a4a"/>
<path d="M708.2 420.2 L711.2 418.2 L714.0 416.4 L716.9 414.8 L719.9 413.5 L722.9 412.5 L725.9 411.6 L728.9 410.9 L731.9 410.6 L735.0 410.7 L737.9 411.1 L740.7 411.8 L743.3 412.9 L746.0 414.1 L748.5 415.6 L750.9 417.7 L753.2 420.2 L755.8 423.1 L756.2 422.9 L755.5 418.9 L753.9 415.4 L751.7 412.3 L749.0 409.7 L746.0 407.6 L742.6 406.1 L739.0 405.2 L735.4 404.7 L731.7 404.7 L728.0 405.0 L724.3 405.8 L720.8 407.0 L717.5 408.8 L714.4 411.0 L711.6 413.5 L709.3 416.4 L707.8 419.8Z" fill="#561a4a"/>
<path d="M715.9 426.2 L718.3 427.4 L720.8 428.4 L723.3 429.2 L725.8 429.9 L728.4 430.4 L730.9 430.7 L733.4 430.9 L735.9 430.9 L738.4 430.8 L740.8 430.6 L743.2 430.3 L745.6 429.8 L747.9 429.2 L750.1 428.4 L752.2 427.4 L754.2 426.4 L756.1 425.2 L755.9 424.8 L753.8 425.6 L751.7 426.4 L749.6 427.0 L747.4 427.6 L745.2 428.1 L742.9 428.5 L740.6 428.8 L738.3 429.0 L735.9 429.1 L733.5 429.1 L731.1 428.9 L728.6 428.6 L726.1 428.3 L723.6 427.9 L721.1 427.3 L718.6 426.6 L716.1 425.8Z" fill="#561a4a"/>
<circle cx="735" cy="417" r="5.6" stroke="#561a4a" stroke-width="4" fill="none"/>
<circle cx="735" cy="417" r="1.8" fill="#561a4a"/>
<circle cx="762" cy="426" r="2.5" fill="#561a4a"/>
<path d="M800.2 425.2 L803.2 423.1 L806.0 421.1 L808.8 419.5 L811.7 418.2 L814.6 417.2 L817.6 416.3 L820.6 415.7 L823.7 415.5 L826.9 415.6 L830.1 416.0 L833.3 416.8 L836.4 417.8 L839.6 419.0 L842.9 420.6 L846.1 422.5 L849.3 424.8 L852.8 427.2 L853.2 426.8 L851.2 422.9 L848.5 419.7 L845.5 416.8 L842.2 414.4 L838.7 412.4 L835.0 411.0 L831.2 410.1 L827.4 409.6 L823.6 409.5 L819.8 409.8 L816.1 410.5 L812.5 411.7 L809.3 413.5 L806.2 415.7 L803.5 418.3 L801.3 421.3 L799.8 424.8Z" fill="#561a4a"/>
<path d="M805.9 429.2 L808.4 430.4 L810.9 431.3 L813.4 432.1 L816.0 432.8 L818.6 433.2 L821.2 433.5 L823.7 433.6 L826.3 433.6 L828.8 433.5 L831.3 433.2 L833.7 432.9 L836.0 432.4 L838.3 431.7 L840.4 431.0 L842.4 430.2 L844.3 429.2 L846.1 428.2 L845.9 427.8 L844.0 428.5 L842.0 429.1 L840.0 429.7 L837.8 430.2 L835.6 430.6 L833.4 431.1 L831.0 431.4 L828.7 431.6 L826.2 431.8 L823.8 431.8 L821.3 431.7 L818.8 431.5 L816.2 431.2 L813.7 430.8 L811.2 430.2 L808.6 429.6 L806.1 428.8Z" fill="#561a4a"/>
<circle cx="821" cy="421" r="5.6" stroke="#561a4a" stroke-width="4" fill="none"/>
<circle cx="821" cy="421" r="1.8" fill="#561a4a"/>
<path d="M804.9 436.2 L805.7 437.6 L806.7 438.7 L807.6 439.7 L808.6 440.7 L809.6 441.7 L810.7 442.5 L811.8 443.3 L812.9 444.1 L814.0 444.9 L815.1 445.7 L816.1 446.6 L817.2 447.4 L818.4 448.1 L819.7 448.7 L820.9 449.4 L822.3 449.9 L823.8 450.2 L824.2 449.8 L823.6 448.3 L822.8 447.1 L822.0 446.0 L821.1 444.9 L820.1 443.8 L819.1 442.9 L818.0 442.1 L816.9 441.2 L815.7 440.3 L814.6 439.5 L813.4 438.7 L812.3 437.9 L810.9 437.3 L809.6 436.7 L808.2 436.2 L806.8 435.8 L805.1 435.8Z" fill="#561a4a"/>
<path d="M717.9 438.2 L719.6 439.6 L721.4 441.0 L723.3 442.2 L725.3 443.3 L727.4 444.2 L729.5 445.0 L731.6 445.6 L733.8 446.1 L736.0 446.4 L738.1 446.7 L740.3 446.8 L742.4 446.7 L744.5 446.5 L746.5 446.1 L748.4 445.6 L750.3 445.0 L752.1 444.2 L751.9 443.8 L750.1 444.3 L748.2 444.7 L746.3 445.0 L744.3 445.1 L742.3 445.2 L740.3 445.2 L738.2 445.1 L736.2 444.9 L734.1 444.5 L732.0 444.1 L730.0 443.5 L727.9 442.8 L725.9 442.0 L723.9 441.1 L721.9 440.2 L720.0 439.1 L718.1 437.8Z" fill="#561a4a"/>
<path d="M756.8 445.9 L755.4 447.8 L754.2 449.7 L753.0 451.6 L752.0 453.5 L750.9 455.3 L750.1 457.2 L749.3 459.1 L748.5 461.0 L747.8 462.8 L747.2 464.6 L746.7 466.3 L746.3 468.1 L746.2 469.8 L746.2 471.5 L746.5 473.1 L746.9 474.7 L747.8 476.0 L748.2 476.0 L748.5 474.5 L748.8 473.1 L749.0 471.7 L749.4 470.2 L749.8 468.8 L750.2 467.3 L750.7 465.6 L751.3 464.0 L751.9 462.3 L752.6 460.5 L753.4 458.7 L754.2 456.8 L754.9 454.8 L755.6 452.7 L756.3 450.6 L756.8 448.4 L757.2 446.1Z" fill="#561a4a"/>
<path d="M747.8 476.2 L748.1 477.6 L748.8 478.9 L749.7 480.0 L750.8 481.0 L752.0 481.9 L753.4 482.5 L754.8 483.0 L756.4 483.4 L757.9 483.7 L759.5 483.9 L761.0 484.0 L762.6 484.0 L764.2 483.7 L765.8 483.4 L767.3 482.9 L768.7 482.2 L770.1 481.2 L769.9 480.8 L768.4 480.4 L766.9 480.3 L765.5 480.2 L764.0 480.0 L762.6 479.9 L761.2 479.8 L759.9 479.7 L758.5 479.6 L757.2 479.3 L756.0 479.0 L754.9 478.6 L753.8 478.2 L752.7 477.8 L751.6 477.4 L750.5 477.0 L749.5 476.4 L748.2 475.8Z" fill="#561a4a"/>
<path d="M773.1 476.2 L774.5 476.9 L775.8 477.1 L777.0 477.4 L778.2 477.6 L779.3 477.9 L780.4 478.0 L781.6 478.1 L782.7 478.2 L783.8 478.4 L784.9 478.7 L786.0 479.0 L787.1 479.3 L788.2 479.3 L789.3 479.4 L790.4 479.5 L791.5 479.5 L792.9 479.2 L793.1 478.8 L792.7 477.4 L791.9 476.4 L790.9 475.6 L789.9 474.8 L788.8 474.1 L787.5 473.7 L786.2 473.4 L784.9 473.1 L783.5 472.8 L782.2 472.6 L780.8 472.5 L779.4 472.5 L778.0 472.8 L776.6 473.2 L775.2 473.8 L774.0 474.5 L772.9 475.8Z" fill="#561a4a"/>
<path d="M779.8 462.1 L780.4 463.3 L780.9 464.4 L781.5 465.4 L782.2 466.4 L782.8 467.4 L783.4 468.3 L784.1 469.1 L784.7 469.9 L785.3 470.7 L785.9 471.5 L786.5 472.2 L787.0 472.9 L787.6 473.6 L788.2 474.3 L788.7 474.9 L789.3 475.5 L789.8 476.1 L790.2 475.9 L790.0 475.1 L789.7 474.3 L789.4 473.5 L788.9 472.7 L788.5 471.9 L788.0 471.1 L787.4 470.4 L786.8 469.6 L786.2 468.8 L785.5 468.0 L784.9 467.1 L784.2 466.3 L783.4 465.4 L782.7 464.6 L781.9 463.7 L781.0 462.8 L780.2 461.9Z" fill="#561a4a"/>
<path d="M742.0 508.2 L745.1 509.8 L748.6 510.8 L752.3 511.7 L756.1 512.5 L760.0 513.2 L764.1 513.6 L768.3 513.9 L772.5 514.1 L776.7 514.4 L780.8 514.5 L784.9 514.6 L788.9 514.6 L792.8 514.6 L796.6 514.4 L800.1 514.2 L803.5 513.8 L806.5 513.3 L805.5 506.7 L802.6 507.1 L799.5 507.5 L796.2 507.7 L792.6 507.8 L788.9 507.9 L785.0 507.9 L781.0 507.8 L777.0 507.6 L772.9 507.4 L768.8 507.1 L764.7 506.8 L760.6 506.5 L756.6 506.5 L752.8 506.5 L749.0 506.6 L745.5 506.9 L742.0 507.8Z" fill="#561a4a"/>
<path d="M805.3 511.8 L806.3 512.2 L807.2 512.6 L808.1 513.0 L809.0 513.4 L809.8 513.9 L810.6 514.4 L811.4 515.0 L812.1 515.6 L812.9 516.2 L813.6 516.8 L814.3 517.5 L815.0 518.2 L815.9 518.8 L816.7 519.4 L817.7 520.1 L818.6 520.7 L819.8 521.2 L820.2 520.8 L820.0 519.6 L819.5 518.5 L819.0 517.5 L818.4 516.5 L817.8 515.5 L817.0 514.7 L816.2 514.0 L815.4 513.2 L814.6 512.5 L813.7 511.9 L812.8 511.2 L811.9 510.6 L810.9 510.0 L809.9 509.5 L808.8 509.0 L807.7 508.6 L806.7 508.2Z" fill="#561a4a"/>
<path d="M758.0 532.2 L759.9 532.7 L761.7 532.9 L763.6 533.0 L765.5 533.0 L767.4 533.0 L769.3 532.8 L771.2 532.6 L773.0 532.4 L774.9 532.2 L776.8 532.0 L778.6 531.7 L780.3 531.4 L782.0 531.0 L783.7 530.4 L785.3 529.9 L786.7 529.2 L788.1 528.2 L787.9 527.8 L786.4 527.5 L784.8 527.5 L783.2 527.5 L781.5 527.6 L779.8 527.6 L778.0 527.9 L776.2 528.1 L774.4 528.3 L772.6 528.5 L770.7 528.8 L768.9 529.0 L767.0 529.2 L765.1 529.6 L763.3 530.0 L761.5 530.4 L759.7 531.0 L758.0 531.8Z" fill="#561a4a"/>
<path d="M881.8 457.9 L880.2 461.8 L878.7 465.8 L877.1 470.0 L875.4 474.4 L873.5 478.9 L871.5 483.7 L869.2 488.7 L866.7 493.8 L863.8 499.1 L860.5 504.7 L856.9 510.4 L852.8 516.3 L848.4 522.5 L843.5 528.9 L838.1 535.6 L832.2 542.5 L825.8 549.8 L826.2 550.2 L833.3 543.6 L839.7 537.0 L845.5 530.6 L850.8 524.3 L855.5 518.2 L859.7 512.2 L863.4 506.4 L866.7 500.8 L869.7 495.4 L872.3 490.1 L874.6 485.0 L876.6 480.2 L878.2 475.4 L879.5 470.8 L880.7 466.4 L881.6 462.2 L882.2 458.1Z" fill="#561a4a"/>
<path d="M427.5 641.9 L424.1 646.5 L420.8 651.2 L417.4 655.8 L414.0 660.4 L410.6 665.0 L407.2 669.6 L403.8 674.2 L400.5 678.8 L397.1 683.5 L393.7 688.1 L390.3 692.7 L386.9 697.3 L383.5 701.9 L386.5 704.1 L389.9 699.5 L393.2 694.8 L396.6 690.2 L400.0 685.6 L403.4 681.0 L406.8 676.4 L410.2 671.8 L413.5 667.2 L416.9 662.5 L420.3 657.9 L423.7 653.3 L427.1 648.7 L430.5 644.1Z" fill="#561a4a"/>
<path d="M438.0 636.2 L443.7 636.8 L449.6 637.1 L455.6 637.5 L461.7 637.8 L467.9 638.2 L474.1 638.4 L480.4 638.6 L486.7 638.9 L493.1 639.2 L499.4 639.6 L505.7 639.9 L512.0 640.3 L518.2 640.6 L524.3 640.8 L530.3 641.0 L536.2 641.2 L542.0 641.2 L542.0 640.8 L536.3 639.7 L530.5 638.9 L524.5 638.2 L518.4 637.6 L512.2 637.0 L505.9 636.6 L499.6 636.2 L493.3 635.8 L486.9 635.5 L480.6 635.3 L474.2 635.0 L468.0 634.8 L461.7 634.8 L455.6 634.9 L449.6 635.0 L443.7 635.3 L438.0 635.8Z" fill="#561a4a"/>
<path d="M420.0 707.1 L451.9 707.4 L484.3 707.7 L516.9 707.8 L549.8 707.9 L582.9 707.9 L616.2 707.9 L649.6 707.8 L683.0 707.7 L716.5 707.5 L749.9 707.3 L783.2 707.1 L816.3 706.8 L849.3 706.5 L882.0 706.2 L914.4 705.8 L946.4 705.5 L978.0 705.1 L978.0 698.9 L946.3 699.2 L914.3 699.6 L881.9 699.9 L849.2 700.2 L816.3 700.5 L783.1 700.8 L749.8 701.1 L716.4 701.3 L683.0 701.5 L649.6 701.6 L616.2 701.7 L582.9 701.7 L549.8 701.7 L516.9 701.6 L484.3 701.4 L452.0 701.2 L420.0 700.9Z" fill="#561a4a"/>
<path d="M975.9 702.9 L976.8 705.0 L977.7 707.2 L978.6 709.3 L979.5 711.5 L980.4 713.6 L981.2 715.8 L982.1 717.9 L982.9 720.0 L983.7 722.2 L984.5 724.3 L985.3 726.5 L986.1 728.6 L986.9 730.8 L991.1 729.2 L990.4 727.1 L989.6 724.9 L988.8 722.7 L988.0 720.6 L987.1 718.4 L986.3 716.3 L985.4 714.1 L984.6 711.9 L983.7 709.8 L982.8 707.6 L981.9 705.4 L981.0 703.3 L980.1 701.1Z" fill="#561a4a"/>
<path d="M346.0 663.8 L352.7 663.8 L359.4 663.8 L366.0 663.8 L372.6 663.8 L379.1 663.8 L385.6 663.8 L391.9 663.8 L398.3 663.8 L404.5 663.8 L410.7 663.8 L416.9 663.8 L423.0 663.8 L429.0 663.8 L429.0 660.2 L423.0 660.2 L416.9 660.2 L410.7 660.2 L404.5 660.2 L398.3 660.2 L391.9 660.2 L385.6 660.2 L379.1 660.2 L372.6 660.2 L366.0 660.2 L359.4 660.2 L352.7 660.2 L346.0 660.2Z" fill="#561a4a"/>
<path d="M1051.9 670.9 L1055.7 675.5 L1059.6 680.1 L1063.4 684.8 L1067.2 689.4 L1071.0 694.0 L1074.8 698.6 L1078.5 703.2 L1082.3 707.8 L1086.0 712.4 L1089.8 717.1 L1093.5 721.7 L1097.2 726.3 L1100.9 730.9 L1103.1 729.1 L1099.4 724.5 L1095.7 719.9 L1092.0 715.3 L1088.2 710.6 L1084.5 706.0 L1080.7 701.4 L1077.0 696.8 L1073.2 692.2 L1069.4 687.6 L1065.6 682.9 L1061.8 678.3 L1057.9 673.7 L1054.1 669.1Z" fill="#561a4a"/>
<path d="M675.0 701.2 L683.0 702.4 L691.4 703.4 L700.0 704.3 L708.9 705.1 L717.9 705.9 L727.1 706.5 L736.4 707.0 L745.8 707.5 L755.3 708.0 L764.8 708.5 L774.4 708.9 L783.9 709.3 L793.3 709.6 L802.7 709.8 L811.9 710.0 L821.1 710.2 L830.0 710.2 L830.0 709.8 L821.1 709.1 L812.0 708.6 L802.8 708.0 L793.4 707.5 L784.0 707.0 L774.5 706.6 L764.9 706.2 L755.4 705.7 L746.0 705.2 L736.5 704.7 L727.2 704.1 L718.0 703.6 L709.0 703.0 L700.2 702.5 L691.5 701.9 L683.1 701.3 L675.0 700.8Z" fill="#561a4a"/>
<ellipse cx="465" cy="677" rx="38" ry="7" stroke="#561a4a" stroke-width="6" fill="none"/>
<path d="M499.4 687.8 L503.0 688.5 L506.7 689.1 L510.4 689.7 L514.0 690.3 L517.7 690.9 L521.3 691.5 L524.9 692.2 L528.5 692.8 L532.1 693.4 L535.8 693.5 L539.4 693.5 L543.1 693.3 L547.0 692.2 L547.0 691.8 L543.8 689.4 L540.4 688.0 L536.9 686.8 L533.4 685.7 L529.8 685.1 L526.2 684.5 L522.6 683.8 L519.0 683.2 L515.3 682.6 L511.7 682.0 L508.0 681.4 L504.3 680.8 L500.6 680.2Z" fill="#561a4a"/>
<path d="M346.0 720.2 L373.7 720.7 L402.3 721.1 L432.1 721.5 L462.9 721.8 L494.9 722.1 L528.2 722.2 L562.7 722.4 L598.6 722.5 L635.8 722.6 L674.5 722.6 L714.6 722.7 L756.4 722.7 L799.7 722.7 L844.6 722.6 L891.3 722.5 L939.7 722.3 L990.0 722.2 L990.0 721.8 L939.7 721.7 L891.3 721.5 L844.6 721.4 L799.7 721.3 L756.4 721.2 L714.6 721.1 L674.5 721.1 L635.8 721.0 L598.6 720.9 L562.7 720.8 L528.2 720.7 L494.9 720.5 L462.9 720.4 L432.1 720.3 L402.3 720.1 L373.7 720.0 L346.0 719.8Z" fill="#561a4a"/>
<circle cx="433" cy="244" r="1" fill="#561a4a"/></g></svg>
<div id="popup"></div>
<svg class="abs" style="left:200px;top:143px" width="8" height="12" viewBox="0 0 8 12"><path d="M8 0 L0.5 6 L8 12Z" fill="rgba(20,20,20,0.72)"/></svg>
<div class="abs" style="left:208px;top:118px;width:160px;height:23px;border-radius:6px 6px 0 0;background:linear-gradient(rgba(255,255,255,0.17),rgba(255,255,255,0.07))"></div>
<div class="abs" style="left:208px;top:143px;width:160px;height:39px;background:linear-gradient(rgba(255,255,255,0.10),rgba(255,255,255,0.057))"></div><div class="abs" style="left:208px;top:182px;width:138px;height:51px;background:linear-gradient(rgba(255,255,255,0.057),rgba(255,255,255,0))"></div>
<div class="abs" style="left:212px;top:141px;width:152px;height:1px;background:linear-gradient(90deg,rgba(20,20,20,0.3),#111 50%,rgba(20,20,20,0.3))"></div>
<div class="abs" style="left:212px;top:142px;width:152px;height:1px;background:rgba(255,255,255,0.12)"></div>
<div class="abs" style="left:216px;top:125px;font:bold 10px 'Liberation Sans',sans-serif;color:#fff">Charcoal #2</div>
<svg class="abs" style="left:353px;top:127px" width="9" height="9" viewBox="0 0 9 9"><path d="M1 1 L8 8 M8 1 L1 8" stroke="#8a8a8a" stroke-width="1.6"/></svg>
<div class="plbl" style="left:221px;top:151px">Sketch Color:</div>
<div class="abs" style="left:221px;top:167px;width:22px;height:22px;background:#f4f4f4;border:1px solid #bbb"></div>
<div class="abs" style="left:224px;top:170px;width:16px;height:16px;background:#6a1c4c"></div>
<svg class="abs" style="left:235px;top:183px" width="5" height="3" viewBox="0 0 5 3"><path d="M0 0 H5 L2.5 3Z" fill="#111"/></svg>
<div class="plbl" style="left:221px;top:196px">Background Color:</div>
<div class="abs" style="left:221px;top:212px;width:22px;height:22px;background:#f4f4f4;border:1px solid #bbb"></div>
<div class="abs" style="left:224px;top:215px;width:16px;height:16px;background:#f26a22"></div>
<svg class="abs" style="left:235px;top:228px" width="5" height="3" viewBox="0 0 5 3"><path d="M0 0 H5 L2.5 3Z" fill="#111"/></svg>
<div class="plbl" style="left:222px;top:241px">Sketch Detail:</div>
<div class="abs" style="left:221px;top:267px;width:134px;height:5px;border-radius:3px;background:linear-gradient(#bdbdbd,#f2f2f2 50%,#d0d0d0)"></div>
<svg class="abs" style="left:231px;top:261px" width="17" height="17" viewBox="0 0 17 17"><defs><radialGradient id="kn" cx="0.45" cy="0.35" r="0.6"><stop offset="0" stop-color="#60ccff"/><stop offset="1" stop-color="#0a94f4"/></radialGradient></defs><circle cx="8.5" cy="8.5" r="7.6" fill="url(#kn)" stroke="#e8f4ff" stroke-width="1"/></svg>
<div class="abs" style="left:286px;top:279px;font:bold 10px 'Liberation Sans',sans-serif;color:#3d93e6;white-space:nowrap">Set to defaults</div>
<div class="abs" style="left:212px;top:296px;width:152px;height:1px;background:linear-gradient(90deg,rgba(20,20,20,0.2),#151515 50%,rgba(20,20,20,0.2))"></div>
<div class="abs" style="left:212px;top:297px;width:152px;height:1px;background:rgba(255,255,255,0.07)"></div>
<div class="abs" style="left:260px;top:306px;width:56px;height:24px;border-radius:11px;background:linear-gradient(#5bbcff,#2a90f0 50%,#1f7fe6);box-shadow:0 1px 0 rgba(0,0,0,0.3)"></div>
<div class="abs" style="left:260px;top:311px;width:56px;text-align:center;font:12px 'Liberation Sans',sans-serif;color:#fff">Apply</div>

<div id="tools"></div>
<div class="tl" style="left:1240px;top:296px;font-weight:bold;font-size:10px">Tools</div>
<svg class="abs" style="left:1259px;top:313px" width="18" height="16" viewBox="0 0 18 16"><path d="M5.5 5.5 C9 2 15.5 3 15.5 8.5 C15.5 11 14.5 13 13 15" fill="none" stroke="#fff" stroke-width="2.6"/><path d="M1.5 8.5 L2 1.5 L8.5 7 Z" fill="#fff"/></svg>
<div class="tl" style="left:1242px;top:332px">Undo</div>
<svg class="abs" style="left:1261px;top:353px" width="18" height="16" viewBox="0 0 18 16"><path d="M12.5 5.5 C9 2 2.5 3 2.5 8.5 C2.5 11 3.5 13 5 15" fill="none" stroke="#3a3a3a" stroke-width="2.6"/><path d="M16.5 8.5 L16 1.5 L9.5 7 Z" fill="#3a3a3a"/></svg>
<div class="tl" style="left:1242px;top:372px;color:#3c3c3c">Redo</div>
<svg class="abs" style="left:1260px;top:393px" width="18" height="16" viewBox="0 0 18 16"><g fill="none" stroke="#fff" stroke-width="2.4" stroke-linejoin="round"><path d="M5 5.2 L8.3 1.6 L11.2 4.2"/><path d="M3.2 7.8 L2 11 L3.6 13.6 H7.2"/><path d="M14.4 8.2 L16 11 L14.6 13.6 H12"/></g><path d="M9.6 2.6 L14.2 2.8 L12.6 7Z M1 9.8 L3.4 6 L5.8 9.6Z M12.8 11 L9.4 13.8 L12.8 16.2Z" fill="#fff"/></svg>
<div class="tl" style="left:1242px;top:412px">Reset</div>
<svg class="abs" style="left:1261px;top:433px" width="16" height="16" viewBox="0 0 16 16"><defs><clipPath id="lh"><rect x="0" y="0" width="8" height="16"/></clipPath></defs><g fill="#aaa"><circle cx="8" cy="4.5" r="4"/><path d="M1.5 16 V12 C1.5 10 3 9 5 9 H11 C13 9 14.5 10 14.5 12 V16Z"/></g><g fill="#fff" clip-path="url(#lh)"><circle cx="8" cy="4.5" r="4"/><path d="M1.5 16 V12 C1.5 10 3 9 5 9 H11 C13 9 14.5 10 14.5 12 V16Z"/></g></svg>
<div class="tl" style="left:1242px;top:452px">Compare</div>
<svg class="abs" style="left:1259px;top:474px" width="20" height="16" viewBox="0 0 20 16"><path d="M3 1.5 H18.5 V15" fill="none" stroke="#bbb" stroke-width="1.4"/><path d="M2 4.5 H15.5 V15" fill="none" stroke="#eee" stroke-width="1.4"/><defs><linearGradient id="szg" x1="0" y1="0" x2="0" y2="1"><stop offset="0" stop-color="#fff"/><stop offset="1" stop-color="#bbb"/></linearGradient></defs><rect x="1" y="7" width="12" height="8" fill="url(#szg)"/></svg>
<div class="tl" style="left:1242px;top:492px">Size</div>
<svg class="abs" style="left:1260px;top:513px" width="18" height="16" viewBox="0 0 18 16"><path d="M3 7 C3.5 3.5 6 1.8 9 1.8 C11.5 1.8 13.5 3 14.5 5" fill="none" stroke="#fff" stroke-width="2.2"/><path d="M15 9 C14.5 12.5 12 14.2 9 14.2 C6.5 14.2 4.5 13 3.5 11" fill="none" stroke="#fff" stroke-width="2.2"/><path d="M12 5.5 L16.5 6.5 L16.5 1.5Z M6 10.5 L1.5 9.5 L1.5 14.5Z" fill="#fff"/></svg>
<div class="tl" style="left:1242px;top:532px">Rotate</div>
<svg class="abs" style="left:1261px;top:553px" width="16" height="16" viewBox="0 0 16 16"><g fill="none" stroke="#fff" stroke-width="1.8"><path d="M4 0.5 V12 H15.5"/><path d="M0.5 4 H12 V15.5"/><path d="M14.5 1.5 L1.5 14.5"/></g></svg>
<div class="tl" style="left:1242px;top:572px">Crop</div>

<div id="zoom"></div>
<div class="abs" style="left:1066px;top:819px;width:228px;height:1px;background:#393939"></div>
<div class="abs" style="left:1066px;top:820px;width:228px;height:1px;background:#505050"></div>
<svg class="abs" style="left:1076px;top:807px" width="10" height="7" viewBox="0 0 10 7"><path d="M0.5 0.5 H9.5 L5 6.5Z" fill="#fff"/></svg>
<div class="abs" style="left:1092px;top:804px;font:bold 10.5px 'Liberation Sans',sans-serif;color:#fff;white-space:nowrap">Zoom %100</div>
<div class="zbtn" style="left:1075px;top:826px"><div class="abs" style="left:2px;top:4.5px;width:9px;height:3px;background:#fff"></div></div>
<div class="abs" style="left:1110px;top:832px;width:104px;height:5px;border-radius:3px;background:linear-gradient(#bdbdbd,#f2f2f2 50%,#d0d0d0)"></div>
<svg class="abs" style="left:1104px;top:826px" width="17" height="17" viewBox="0 0 17 17"><defs><radialGradient id="kn2" cx="0.45" cy="0.35" r="0.6"><stop offset="0" stop-color="#60ccff"/><stop offset="1" stop-color="#0a94f4"/></radialGradient></defs><circle cx="8.5" cy="8.5" r="7.6" fill="url(#kn2)" stroke="#e8f4ff" stroke-width="1"/></svg>
<div class="zbtn" style="left:1229px;top:826px"><div class="abs" style="left:2px;top:4.5px;width:9px;height:3px;background:#fff"></div><div class="abs" style="left:5px;top:1.5px;width:3px;height:9px;background:#fff"></div></div>
<div class="zbtn" style="left:1251px;top:826px"><svg class="abs" style="left:1px;top:1px" width="11" height="10" viewBox="0 0 11 10"><path d="M1.5 4.2 L4.8 1 V4.2Z M9.5 4.2 L6.2 1 V4.2Z M1.5 5.8 L4.8 9 V5.8Z M9.5 5.8 L6.2 9 V5.8Z" fill="#fff"/></svg></div>
<div class="zbtn" style="left:1273px;top:826px"><div class="abs" style="left:0;top:0px;width:13px;text-align:center;font:bold 9px 'Liberation Sans',sans-serif;color:#fff;letter-spacing:-0.8px">1/1</div></div>

<div id="rb1"></div><div id="rb2"></div><div id="bb"></div>
</body></html>
